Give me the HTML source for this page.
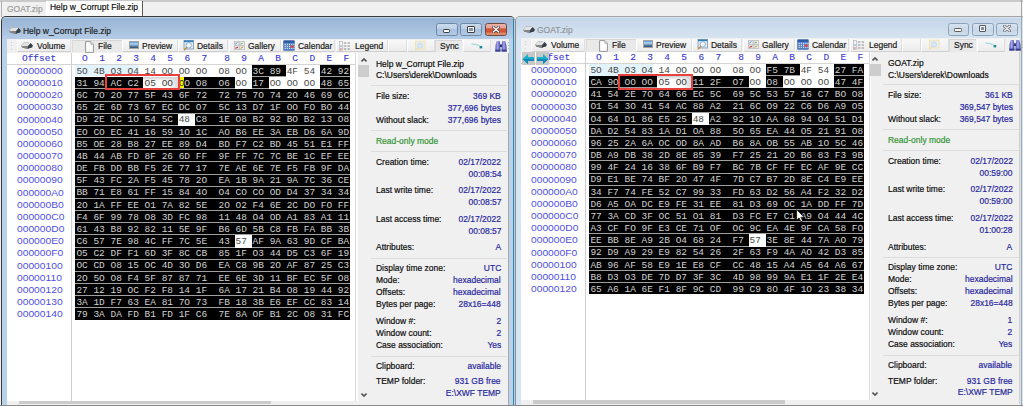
<!DOCTYPE html><html><head><meta charset='utf-8'><style>
*{margin:0;padding:0}
html,body{width:1023px;height:406px;overflow:hidden;background:#f0f0f0;position:relative}
div{position:absolute}
.t{font-family:"Liberation Sans",sans-serif;white-space:pre;line-height:1;-webkit-text-stroke:0.2px}
.hm{font-family:"Liberation Mono",monospace;font-size:9.47px;white-space:pre;line-height:11px}
.hb{font-weight:normal;-webkit-text-stroke:0.12px}
</style></head><body><div style="left:0px;top:0px;width:1023px;height:1.5px;background:#c9c9c9"></div>
<div style="left:1px;top:1px;width:1px;height:15.5px;background:#b0b0b0"></div>
<div class="t" style="left:7.3px;top:3.6399999999999997px;color:#9a9a9a;font-size:9.4px;transform:scaleX(0.904);transform-origin:0 0">GOAT.zip</div>
<div style="left:45.5px;top:1.2px;width:97px;height:15.3px;background:#ffffff"></div>
<div style="left:142px;top:1.2px;width:1.2px;height:15.3px;background:#5a5a5a"></div>
<div class="t" style="left:50px;top:1.9400000000000004px;color:#101010;font-size:9.4px;transform:scaleX(0.904);transform-origin:0 0">Help w_Corrupt File.zip</div>
<div style="left:1px;top:16.3px;width:514px;height:389.7px;background:#b9d1ea;border-top-left-radius:5px;border-top-right-radius:5px;border:1px solid #3a3a3a;border-bottom:none;border-right:none;box-sizing:border-box"></div>
<div style="left:2px;top:17.3px;width:511.5px;height:21.5px;background:linear-gradient(#dbe5f0 0,#9ab5d5 1.2px,#a3bddb 45%,#b4cce6);border-top-left-radius:4px;border-top-right-radius:4px"></div>
<div style="left:513.3px;top:19px;width:1.2px;height:387px;background:#2b87ad"></div>
<svg style="position:absolute;left:8.5px;top:26.8px" width="12" height="7" viewBox="0 0 12 7"><path d="M0.2 3.7 L2.6 0.8 L5.6 0.2 L9.6 1.3 L11.6 3.3 L11.1 5.2 L6.6 6.8 L1.6 5.8 Z" fill="#5a5a5a"/><path d="M0.2 3.7 L2.6 0.8 L5.6 0.2 L9.6 1.3 L7.2 4.1 L1.6 4.4 Z" fill="#e2e2e2"/><path d="M7.2 4.1 L9.6 1.3 L11.6 3.3 L11.1 5.2 L6.6 6.8 Z" fill="#34404a"/><path d="M0.2 3.7 L1.6 4.4 L7.2 4.1 L6.6 6.8 L1.6 5.8 Z" fill="#858585"/></svg>
<div class="t" style="left:23px;top:25.839999999999996px;color:#1e1e1e;font-size:9.4px;transform:scaleX(0.904);transform-origin:0 0">Help w_Corrupt File.zip</div>
<div style="left:436px;top:23.3px;width:21.8px;height:13.1px;background:linear-gradient(#c9daed 0%,#bcd0e7 45%,#a9c1dd 50%,#b3cae4 100%);border:1px solid #7088a8;border-radius:2.5px;box-sizing:border-box"></div>
<div style="left:460.3px;top:23.3px;width:21.8px;height:13.1px;background:linear-gradient(#c9daed 0%,#bcd0e7 45%,#a9c1dd 50%,#b3cae4 100%);border:1px solid #7088a8;border-radius:2.5px;box-sizing:border-box"></div>
<div style="left:484.5px;top:23.3px;width:22px;height:13.1px;background:linear-gradient(#eab0a8 0%,#e6a096 38%,#d2583c 42%,#cf5236 75%,#df8466 80%,#e09070 100%);border:1px solid #6c4a48;border-radius:2.5px;box-sizing:border-box"></div>
<div style="left:442.6px;top:29.200000000000003px;width:7.8px;height:3.4px;background:#fafafa;border:1px solid #3c3c3c;border-radius:1.2px;box-sizing:border-box"></div>
<div style="left:467.3px;top:26.0px;width:7.5px;height:6.5px;background:#fafafa;border:1px solid #3c3c3c;border-radius:1px;box-sizing:border-box"></div>
<div style="left:469.1px;top:27.9px;width:3.9px;height:2.7px;background:#7f93aa"></div>
<svg style="position:absolute;left:491.5px;top:25.900000000000002px" width="8" height="7" viewBox="0 0 8 7"><path d="M1.2 1 L6.8 6 M6.8 1 L1.2 6" stroke="#3c3c3c" stroke-width="2.6" stroke-linecap="round"/><path d="M1.2 1 L6.8 6 M6.8 1 L1.2 6" stroke="#ffffff" stroke-width="1.3" stroke-linecap="round"/></svg>
<div style="left:7px;top:38.5px;width:502px;height:367.5px;background:#f0f0f0"></div>
<div style="left:10.5px;top:41.5px;width:1px;height:1px;background:#cdcdcd"></div>
<div style="left:10.5px;top:45px;width:1px;height:1px;background:#cdcdcd"></div>
<div style="left:10.5px;top:48.5px;width:1px;height:1px;background:#cdcdcd"></div>
<div style="left:17px;top:39.5px;width:54px;height:12.8px;background:linear-gradient(#f8f8f8,#ececec);border-left:1px solid #fff;border-right:1px solid #dedede;border-bottom:1px solid #cfcfcf;box-sizing:border-box"></div>
<div class="t" style="left:36.5px;top:40.64px;color:#1a1a1a;font-size:9.4px;transform:scaleX(0.904);transform-origin:0 0">Volume</div>
<svg style="position:absolute;left:21.2px;top:41.8px" width="12" height="7" viewBox="0 0 12 7"><path d="M0.2 3.7 L2.6 0.8 L5.6 0.2 L9.6 1.3 L11.6 3.3 L11.1 5.2 L6.6 6.8 L1.6 5.8 Z" fill="#5a5a5a"/><path d="M0.2 3.7 L2.6 0.8 L5.6 0.2 L9.6 1.3 L7.2 4.1 L1.6 4.4 Z" fill="#e2e2e2"/><path d="M7.2 4.1 L9.6 1.3 L11.6 3.3 L11.1 5.2 L6.6 6.8 Z" fill="#34404a"/><path d="M0.2 3.7 L1.6 4.4 L7.2 4.1 L6.6 6.8 L1.6 5.8 Z" fill="#858585"/></svg>
<div style="left:71.5px;top:39.5px;width:50.0px;height:12.8px;background:#e9e9e9;border-top:1px solid #d6d6d6;border-left:1px solid #dadada;box-sizing:border-box"></div>
<div class="t" style="left:97.5px;top:40.64px;color:#1a1a1a;font-size:9.4px;transform:scaleX(0.904);transform-origin:0 0">File</div>
<svg style="position:absolute;left:85.0px;top:40.5px" width="9" height="12" viewBox="0 0 9 12" ><path d="M0.6 0.6 H5.8 L8.4 3.2 V11.4 H0.6 Z" fill="#fdfdfd" stroke="#8a8a8a" stroke-width="0.9"/><path d="M5.8 0.6 V3.2 H8.4" fill="#e0e0e0" stroke="#9a9a9a" stroke-width="0.7"/></svg>
<div style="left:122px;top:39.5px;width:55.5px;height:12.8px;background:linear-gradient(#f8f8f8,#ececec);border-left:1px solid #fff;border-right:1px solid #dedede;border-bottom:1px solid #cfcfcf;box-sizing:border-box"></div>
<div class="t" style="left:142px;top:40.64px;color:#1a1a1a;font-size:9.4px;transform:scaleX(0.904);transform-origin:0 0">Preview</div>
<svg style="position:absolute;left:128.5px;top:41px" width="10" height="8" viewBox="0 0 10 8" ><defs><linearGradient id="pv" x1="0" y1="0" x2="0" y2="1"><stop offset="0" stop-color="#3d7ed0"/><stop offset="0.35" stop-color="#b9d9f2"/><stop offset="0.6" stop-color="#6d95b5"/><stop offset="1" stop-color="#1d3d5d"/></linearGradient></defs><rect x="0.5" y="0.5" width="9" height="7" fill="url(#pv)" stroke="#a4a4a4" stroke-width="1"/></svg>
<div style="left:178.3px;top:39.5px;width:49.69999999999999px;height:12.8px;background:linear-gradient(#f8f8f8,#ececec);border-left:1px solid #fff;border-right:1px solid #dedede;border-bottom:1px solid #cfcfcf;box-sizing:border-box"></div>
<div class="t" style="left:197px;top:40.64px;color:#1a1a1a;font-size:9.4px;transform:scaleX(0.904);transform-origin:0 0">Details</div>
<svg style="position:absolute;left:183.0px;top:40px" width="11" height="11" viewBox="0 0 11 11" ><rect x="1" y="0.5" width="9.5" height="8.5" fill="#dbeaf7" stroke="#7d94ad" stroke-width="0.8"/><rect x="1" y="0.5" width="9.5" height="1.6" fill="#2f7fc4"/><circle cx="5.8" cy="5.3" r="2.7" fill="#eef6fc" stroke="#8fa8c0" stroke-width="0.9"/><path d="M3.8 7.3 L1 10.4" stroke="#c98a3a" stroke-width="1.4"/></svg>
<div style="left:228.5px;top:39.5px;width:52.0px;height:12.8px;background:linear-gradient(#f8f8f8,#ececec);border-left:1px solid #fff;border-right:1px solid #dedede;border-bottom:1px solid #cfcfcf;box-sizing:border-box"></div>
<div class="t" style="left:248px;top:40.64px;color:#1a1a1a;font-size:9.4px;transform:scaleX(0.904);transform-origin:0 0">Gallery</div>
<svg style="position:absolute;left:234.0px;top:40.7px" width="11" height="9" viewBox="0 0 11 9" ><rect x="0.4" y="0.4" width="4.6" height="3.9" fill="#eef2f6" stroke="#b4b4b4" stroke-width="0.7"/><rect x="5.8" y="0.4" width="4.6" height="3.9" fill="#eef2f6" stroke="#b4b4b4" stroke-width="0.7"/><rect x="0.4" y="4.8" width="4.6" height="3.9" fill="#eef2f6" stroke="#b4b4b4" stroke-width="0.7"/><rect x="5.8" y="4.8" width="4.6" height="3.9" fill="#eef2f6" stroke="#b4b4b4" stroke-width="0.7"/><path d="M1.2 3.2 L3.5 1.5" stroke="#3a78c0" stroke-width="0.9"/><path d="M6.6 3 L9 2" stroke="#6aa040" stroke-width="0.9"/><path d="M1.2 7.2 L4 6.4" stroke="#d03030" stroke-width="1.1"/><path d="M6.6 7.3 L9.2 6" stroke="#d08a20" stroke-width="1"/></svg>
<div style="left:281px;top:39.5px;width:53.5px;height:12.8px;background:linear-gradient(#f8f8f8,#ececec);border-left:1px solid #fff;border-right:1px solid #dedede;border-bottom:1px solid #cfcfcf;box-sizing:border-box"></div>
<div class="t" style="left:298px;top:40.64px;color:#1a1a1a;font-size:9.4px;transform:scaleX(0.904);transform-origin:0 0">Calendar</div>
<svg style="position:absolute;left:283.3px;top:40px" width="12" height="11" viewBox="0 0 12 11" ><rect x="0.4" y="0.4" width="11.2" height="10.2" rx="1.2" fill="#4f7fc6" stroke="#5b7aa8" stroke-width="0.7"/><rect x="0.8" y="0.8" width="10.4" height="2" fill="#2c5aa6"/><rect x="1.6" y="3.8" width="1.1" height="1" fill="#ffffff"/><rect x="1.6" y="5.8" width="1.1" height="1" fill="#ffffff"/><rect x="1.6" y="7.8" width="1.1" height="1" fill="#ffffff"/><rect x="3.8" y="3.8" width="1.1" height="1" fill="#ffffff"/><rect x="3.8" y="5.8" width="1.1" height="1" fill="#ffffff"/><rect x="3.8" y="7.8" width="1.1" height="1" fill="#ffffff"/><rect x="6.0" y="3.8" width="1.1" height="1" fill="#ffffff"/><rect x="6.0" y="5.8" width="1.1" height="1" fill="#ffffff"/><rect x="6.0" y="7.8" width="1.1" height="1" fill="#ffffff"/><rect x="8.2" y="3.8" width="1.1" height="1" fill="#ffffff"/><rect x="8.2" y="5.8" width="1.1" height="1" fill="#ffffff"/><rect x="8.2" y="7.8" width="1.1" height="1" fill="#ffffff"/><rect x="10.4" y="3.8" width="1.1" height="1" fill="#ffffff"/><rect x="10.4" y="5.8" width="1.1" height="1" fill="#ffffff"/><rect x="10.4" y="7.8" width="1.1" height="1" fill="#ffffff"/><rect x="7.3" y="5.6" width="3.6" height="2.2" rx="0.8" fill="#e04848"/></svg>
<div style="left:336px;top:39.5px;width:51.5px;height:12.8px;background:linear-gradient(#f8f8f8,#ececec);border-left:1px solid #fff;border-right:1px solid #dedede;border-bottom:1px solid #cfcfcf;box-sizing:border-box"></div>
<div class="t" style="left:354.5px;top:40.64px;color:#1a1a1a;font-size:9.4px;transform:scaleX(0.904);transform-origin:0 0">Legend</div>
<svg style="position:absolute;left:339.3px;top:40.5px" width="15" height="10" viewBox="0 0 15 10" ><rect x="0.5" y="0.4" width="2.8" height="9.2" fill="#f4f4f4" stroke="#b0b0b0" stroke-width="0.6"/><rect x="1.2" y="4.5" width="1.5" height="1.2" fill="#5aa0e0"/><rect x="1.2" y="7.4" width="1.5" height="1.2" fill="#e05050"/><path d="M4.8 2 H7.3 M8.6 2 H11 M4.8 5 H7.3 M8.6 5 H11 M4.8 8 H7.3 M8.6 8 H11" stroke="#8c8c8c" stroke-width="1"/></svg>
<div style="left:388px;top:39.5px;width:18.5px;height:12.8px;background:linear-gradient(#f8f8f8,#ececec);border-left:1px solid #fff;border-right:1px solid #dedede;border-bottom:1px solid #cfcfcf;box-sizing:border-box"></div>
<div style="left:407px;top:39.5px;width:27.5px;height:12.8px;background:linear-gradient(#f8f8f8,#ececec);border-left:1px solid #fff;border-right:1px solid #dedede;border-bottom:1px solid #cfcfcf;box-sizing:border-box"></div>
<svg style="position:absolute;left:414px;top:40px" width="12" height="11" viewBox="0 0 12 11" ><rect x="1.5" y="1.2" width="9.5" height="7.8" fill="#e9eef3" stroke="#f2e4b0" stroke-width="1"/><circle cx="6" cy="5.5" r="2.6" fill="#d9e8f2" stroke="#c6d8e6" stroke-width="0.9"/><path d="M4 7.6 L1.2 10.4" stroke="#f0dca8" stroke-width="1.2"/></svg>
<div style="left:435px;top:39.5px;width:27px;height:12.8px;background:#e9e9e9;border-top:1px solid #d6d6d6;border-left:1px solid #dadada;box-sizing:border-box"></div>
<div class="t" style="left:440px;top:40.64px;color:#1a1a1a;font-size:9.4px;transform:scaleX(0.904);transform-origin:0 0">Sync</div>
<div style="left:463px;top:39.5px;width:28px;height:12.8px;background:linear-gradient(#f8f8f8,#ececec);border-left:1px solid #fff;border-right:1px solid #dedede;border-bottom:1px solid #cfcfcf;box-sizing:border-box"></div>
<svg style="position:absolute;left:471px;top:42.5px" width="12" height="6" viewBox="0 0 12 6" ><path d="M0.5 1.2 L1.8 0.9 L3.2 1.6 L4.5 1.1 L6 2.3 L7.3 1.8 L8.8 3.4" fill="none" stroke="#6cc4d0" stroke-width="0.8"/><rect x="8.6" y="3" width="2.6" height="2.4" fill="#178aa0"/></svg>
<svg style="position:absolute;left:495.0px;top:39.8px" width="12" height="12" viewBox="0 0 12 12" ><defs><linearGradient id="bn" x1="0" y1="0" x2="1" y2="0"><stop offset="0" stop-color="#4b4fa8"/><stop offset="0.45" stop-color="#a6aaf0"/><stop offset="1" stop-color="#3f4396"/></linearGradient></defs><path d="M0.3 11.6 L0.6 5 L1.8 1 L4.6 1 L5.4 5 L5.4 11.6 Z" fill="url(#bn)"/><path d="M11.7 11.6 L11.4 5 L10.2 1 L7.4 1 L6.6 5 L6.6 11.6 Z" fill="url(#bn)"/><rect x="5" y="4.5" width="2" height="2.5" fill="#2e3280"/><rect x="0.4" y="9.6" width="5" height="2" fill="#3a3e8c"/><rect x="6.6" y="9.6" width="5" height="2" fill="#3a3e8c"/></svg>
<div style="left:508px;top:42px;width:1px;height:1px;background:#a8c0a0"></div>
<div style="left:508px;top:45px;width:1px;height:1px;background:#a8c0a0"></div>
<div style="left:508px;top:48px;width:1px;height:1px;background:#a8c0a0"></div>
<div style="left:7px;top:52.5px;width:347.5px;height:348px;background:#ffffff"></div>
<div style="left:7px;top:64px;width:347.5px;height:1px;background:#d4d4d4"></div>
<div style="left:71px;top:52.5px;width:1px;height:348px;background:#cfcfcf"></div>
<div style="left:354.5px;top:52.5px;width:1px;height:348px;background:#dadada"></div>
<div class="hm hb" style="left:22px;top:53.1px;color:#3a3ad6;">Offset</div>
<div class="hm hb" style="left:82.08000000000001px;top:53.1px;color:#3a3ad6;">O</div>
<div class="hm hb" style="left:99.13px;top:53.1px;color:#3a3ad6;">1</div>
<div class="hm hb" style="left:116.18px;top:53.1px;color:#3a3ad6;">2</div>
<div class="hm hb" style="left:133.23000000000002px;top:53.1px;color:#3a3ad6;">3</div>
<div class="hm hb" style="left:150.28000000000003px;top:53.1px;color:#3a3ad6;">4</div>
<div class="hm hb" style="left:167.33px;top:53.1px;color:#3a3ad6;">5</div>
<div class="hm hb" style="left:184.38000000000002px;top:53.1px;color:#3a3ad6;">6</div>
<div class="hm hb" style="left:201.43px;top:53.1px;color:#3a3ad6;">7</div>
<div class="hm hb" style="left:224.16000000000003px;top:53.1px;color:#3a3ad6;">8</div>
<div class="hm hb" style="left:241.21000000000004px;top:53.1px;color:#3a3ad6;">9</div>
<div class="hm hb" style="left:258.26px;top:53.1px;color:#3a3ad6;">A</div>
<div class="hm hb" style="left:275.31000000000006px;top:53.1px;color:#3a3ad6;">B</div>
<div class="hm hb" style="left:292.36px;top:53.1px;color:#3a3ad6;">C</div>
<div class="hm hb" style="left:309.41px;top:53.1px;color:#3a3ad6;">D</div>
<div class="hm hb" style="left:326.46000000000004px;top:53.1px;color:#3a3ad6;">E</div>
<div class="hm hb" style="left:343.51px;top:53.1px;color:#3a3ad6;">F</div>
<div class="t" style="left:16.8px;top:65.9px;color:#4f4fe0;font-size:9.5px;transform:scaleX(1.08);transform-origin:0 0;-webkit-text-stroke:0">00000000</div>
<div style="left:75.10000000000001px;top:65.0px;width:17.55px;height:11.3px;background:#e3f3fc"></div>
<div class="hm" style="left:76.4px;top:65.7px;color:#4a4a4a">5O</div>
<div style="left:92.15px;top:65.0px;width:17.55px;height:11.3px;background:#e3f3fc"></div>
<div class="hm" style="left:93.45px;top:65.7px;color:#4a4a4a">4B</div>
<div style="left:109.2px;top:65.0px;width:17.55px;height:11.3px;background:#e3f3fc"></div>
<div class="hm" style="left:110.5px;top:65.7px;color:#4a4a4a">O3</div>
<div style="left:126.25000000000001px;top:65.0px;width:12.5px;height:11.3px;background:#e3f3fc"></div>
<div class="hm" style="left:127.55000000000001px;top:65.7px;color:#4a4a4a">O4</div>
<div class="hm" style="left:144.60000000000002px;top:65.7px;color:#4a4a4a">14</div>
<div class="hm" style="left:161.65px;top:65.7px;color:#4a4a4a">OO</div>
<div class="hm" style="left:178.70000000000002px;top:65.7px;color:#4a4a4a">OO</div>
<div class="hm" style="left:195.75px;top:65.7px;color:#4a4a4a">OO</div>
<div class="hm" style="left:218.48000000000002px;top:65.7px;color:#4a4a4a">O8</div>
<div class="hm" style="left:235.53000000000003px;top:65.7px;color:#4a4a4a">OO</div>
<div style="left:252px;top:65px;width:17px;height:12px;background:linear-gradient(#000 0,#000 11px,#a0a0a0 11px)"></div>
<div class="hm" style="left:252.58px;top:65.7px;color:#d2d2d2">3C</div>
<div style="left:269px;top:65px;width:17px;height:12px;background:linear-gradient(#000 0,#000 11px,#a0a0a0 11px)"></div>
<div class="hm" style="left:269.63000000000005px;top:65.7px;color:#d2d2d2">89</div>
<div class="hm" style="left:286.68px;top:65.7px;color:#4a4a4a">4F</div>
<div class="hm" style="left:303.73px;top:65.7px;color:#4a4a4a">54</div>
<div style="left:320px;top:65px;width:17px;height:12px;background:linear-gradient(#000 0,#000 11px,#a0a0a0 11px)"></div>
<div class="hm" style="left:320.78000000000003px;top:65.7px;color:#d2d2d2">42</div>
<div style="left:337px;top:65px;width:13px;height:12px;background:linear-gradient(#000 0,#000 11px,#a0a0a0 11px)"></div>
<div class="hm" style="left:337.83px;top:65.7px;color:#d2d2d2">92</div>
<div class="t" style="left:16.8px;top:78.07000000000001px;color:#4f4fe0;font-size:9.5px;transform:scaleX(1.08);transform-origin:0 0;-webkit-text-stroke:0">00000010</div>
<div style="left:75px;top:77px;width:17px;height:12px;background:linear-gradient(#000 0,#000 11px,#a0a0a0 11px)"></div>
<div class="hm" style="left:76.4px;top:77.87px;color:#d2d2d2">31</div>
<div style="left:92px;top:77px;width:18px;height:12px;background:linear-gradient(#000 0,#000 11px,#a0a0a0 11px)"></div>
<div class="hm" style="left:93.45px;top:77.87px;color:#d2d2d2">94</div>
<div style="left:110px;top:77px;width:17px;height:12px;background:linear-gradient(#000 0,#000 11px,#a0a0a0 11px)"></div>
<div class="hm" style="left:110.5px;top:77.87px;color:#d2d2d2">AC</div>
<div style="left:127px;top:77px;width:17px;height:12px;background:linear-gradient(#000 0,#000 11px,#a0a0a0 11px)"></div>
<div class="hm" style="left:127.55000000000001px;top:77.87px;color:#d2d2d2">C2</div>
<div class="hm" style="left:144.60000000000002px;top:77.87px;color:#4a4a4a">O5</div>
<div class="hm" style="left:161.65px;top:77.87px;color:#4a4a4a">OO</div>
<div style="left:178px;top:77px;width:17px;height:12px;background:linear-gradient(#000 0,#000 11px,#a0a0a0 11px)"></div>
<div class="hm" style="left:178.70000000000002px;top:77.87px;color:#d2d2d2">OO</div>
<div style="left:195px;top:77px;width:22px;height:12px;background:linear-gradient(#000 0,#000 11px,#a0a0a0 11px)"></div>
<div class="hm" style="left:195.75px;top:77.87px;color:#d2d2d2">O8</div>
<div style="left:217px;top:77px;width:18px;height:12px;background:linear-gradient(#000 0,#000 11px,#a0a0a0 11px)"></div>
<div class="hm" style="left:218.48000000000002px;top:77.87px;color:#d2d2d2">O6</div>
<div class="hm" style="left:235.53000000000003px;top:77.87px;color:#4a4a4a">OO</div>
<div style="left:252px;top:77px;width:17px;height:12px;background:linear-gradient(#000 0,#000 11px,#a0a0a0 11px)"></div>
<div class="hm" style="left:252.58px;top:77.87px;color:#d2d2d2">17</div>
<div class="hm" style="left:269.63000000000005px;top:77.87px;color:#4a4a4a">OO</div>
<div class="hm" style="left:286.68px;top:77.87px;color:#4a4a4a">OO</div>
<div class="hm" style="left:303.73px;top:77.87px;color:#4a4a4a">OO</div>
<div style="left:320px;top:77px;width:17px;height:12px;background:linear-gradient(#000 0,#000 11px,#a0a0a0 11px)"></div>
<div class="hm" style="left:320.78000000000003px;top:77.87px;color:#d2d2d2">48</div>
<div style="left:337px;top:77px;width:13px;height:12px;background:linear-gradient(#000 0,#000 11px,#a0a0a0 11px)"></div>
<div class="hm" style="left:337.83px;top:77.87px;color:#d2d2d2">65</div>
<div class="t" style="left:16.8px;top:90.24000000000001px;color:#4f4fe0;font-size:9.5px;transform:scaleX(1.08);transform-origin:0 0;-webkit-text-stroke:0">00000020</div>
<div style="left:75px;top:89px;width:17px;height:13px;background:linear-gradient(#000 0,#000 12px,#a0a0a0 12px)"></div>
<div class="hm" style="left:76.4px;top:90.04px;color:#d2d2d2">6C</div>
<div style="left:92px;top:89px;width:18px;height:13px;background:linear-gradient(#000 0,#000 12px,#a0a0a0 12px)"></div>
<div class="hm" style="left:93.45px;top:90.04px;color:#d2d2d2">7O</div>
<div style="left:110px;top:89px;width:17px;height:13px;background:linear-gradient(#000 0,#000 12px,#a0a0a0 12px)"></div>
<div class="hm" style="left:110.5px;top:90.04px;color:#d2d2d2">2O</div>
<div style="left:127px;top:89px;width:17px;height:13px;background:linear-gradient(#000 0,#000 12px,#a0a0a0 12px)"></div>
<div class="hm" style="left:127.55000000000001px;top:90.04px;color:#d2d2d2">77</div>
<div style="left:144px;top:89px;width:17px;height:13px;background:linear-gradient(#000 0,#000 12px,#a0a0a0 12px)"></div>
<div class="hm" style="left:144.60000000000002px;top:90.04px;color:#d2d2d2">5F</div>
<div style="left:161px;top:89px;width:17px;height:13px;background:linear-gradient(#000 0,#000 12px,#a0a0a0 12px)"></div>
<div class="hm" style="left:161.65px;top:90.04px;color:#d2d2d2">43</div>
<div style="left:178px;top:89px;width:17px;height:13px;background:linear-gradient(#000 0,#000 12px,#a0a0a0 12px)"></div>
<div class="hm" style="left:178.70000000000002px;top:90.04px;color:#d2d2d2">6F</div>
<div style="left:195px;top:89px;width:22px;height:13px;background:linear-gradient(#000 0,#000 12px,#a0a0a0 12px)"></div>
<div class="hm" style="left:195.75px;top:90.04px;color:#d2d2d2">72</div>
<div style="left:217px;top:89px;width:18px;height:13px;background:linear-gradient(#000 0,#000 12px,#a0a0a0 12px)"></div>
<div class="hm" style="left:218.48000000000002px;top:90.04px;color:#d2d2d2">72</div>
<div style="left:235px;top:89px;width:17px;height:13px;background:linear-gradient(#000 0,#000 12px,#a0a0a0 12px)"></div>
<div class="hm" style="left:235.53000000000003px;top:90.04px;color:#d2d2d2">75</div>
<div style="left:252px;top:89px;width:17px;height:13px;background:linear-gradient(#000 0,#000 12px,#a0a0a0 12px)"></div>
<div class="hm" style="left:252.58px;top:90.04px;color:#d2d2d2">7O</div>
<div style="left:269px;top:89px;width:17px;height:13px;background:linear-gradient(#000 0,#000 12px,#a0a0a0 12px)"></div>
<div class="hm" style="left:269.63000000000005px;top:90.04px;color:#d2d2d2">74</div>
<div style="left:286px;top:89px;width:17px;height:13px;background:linear-gradient(#000 0,#000 12px,#a0a0a0 12px)"></div>
<div class="hm" style="left:286.68px;top:90.04px;color:#d2d2d2">2O</div>
<div style="left:303px;top:89px;width:17px;height:13px;background:linear-gradient(#000 0,#000 12px,#a0a0a0 12px)"></div>
<div class="hm" style="left:303.73px;top:90.04px;color:#d2d2d2">46</div>
<div style="left:320px;top:89px;width:17px;height:13px;background:linear-gradient(#000 0,#000 12px,#a0a0a0 12px)"></div>
<div class="hm" style="left:320.78000000000003px;top:90.04px;color:#d2d2d2">69</div>
<div style="left:337px;top:89px;width:13px;height:13px;background:linear-gradient(#000 0,#000 12px,#a0a0a0 12px)"></div>
<div class="hm" style="left:337.83px;top:90.04px;color:#d2d2d2">6C</div>
<div class="t" style="left:16.8px;top:102.41px;color:#4f4fe0;font-size:9.5px;transform:scaleX(1.08);transform-origin:0 0;-webkit-text-stroke:0">00000030</div>
<div style="left:75px;top:102px;width:17px;height:12px;background:linear-gradient(#000 0,#000 11px,#a0a0a0 11px)"></div>
<div class="hm" style="left:76.4px;top:102.21px;color:#d2d2d2">65</div>
<div style="left:92px;top:102px;width:18px;height:12px;background:linear-gradient(#000 0,#000 11px,#a0a0a0 11px)"></div>
<div class="hm" style="left:93.45px;top:102.21px;color:#d2d2d2">2E</div>
<div style="left:110px;top:102px;width:17px;height:12px;background:linear-gradient(#000 0,#000 11px,#a0a0a0 11px)"></div>
<div class="hm" style="left:110.5px;top:102.21px;color:#d2d2d2">6D</div>
<div style="left:127px;top:102px;width:17px;height:12px;background:linear-gradient(#000 0,#000 11px,#a0a0a0 11px)"></div>
<div class="hm" style="left:127.55000000000001px;top:102.21px;color:#d2d2d2">73</div>
<div style="left:144px;top:102px;width:17px;height:12px;background:linear-gradient(#000 0,#000 11px,#a0a0a0 11px)"></div>
<div class="hm" style="left:144.60000000000002px;top:102.21px;color:#d2d2d2">67</div>
<div style="left:161px;top:102px;width:17px;height:12px;background:linear-gradient(#000 0,#000 11px,#a0a0a0 11px)"></div>
<div class="hm" style="left:161.65px;top:102.21px;color:#d2d2d2">EC</div>
<div style="left:178px;top:102px;width:17px;height:12px;background:linear-gradient(#000 0,#000 11px,#a0a0a0 11px)"></div>
<div class="hm" style="left:178.70000000000002px;top:102.21px;color:#d2d2d2">DC</div>
<div style="left:195px;top:102px;width:22px;height:12px;background:linear-gradient(#000 0,#000 11px,#a0a0a0 11px)"></div>
<div class="hm" style="left:195.75px;top:102.21px;color:#d2d2d2">O7</div>
<div style="left:217px;top:102px;width:18px;height:12px;background:linear-gradient(#000 0,#000 11px,#a0a0a0 11px)"></div>
<div class="hm" style="left:218.48000000000002px;top:102.21px;color:#d2d2d2">5C</div>
<div style="left:235px;top:102px;width:17px;height:12px;background:linear-gradient(#000 0,#000 11px,#a0a0a0 11px)"></div>
<div class="hm" style="left:235.53000000000003px;top:102.21px;color:#d2d2d2">13</div>
<div style="left:252px;top:102px;width:17px;height:12px;background:linear-gradient(#000 0,#000 11px,#a0a0a0 11px)"></div>
<div class="hm" style="left:252.58px;top:102.21px;color:#d2d2d2">D7</div>
<div style="left:269px;top:102px;width:17px;height:12px;background:linear-gradient(#000 0,#000 11px,#a0a0a0 11px)"></div>
<div class="hm" style="left:269.63000000000005px;top:102.21px;color:#d2d2d2">1F</div>
<div style="left:286px;top:102px;width:17px;height:12px;background:linear-gradient(#000 0,#000 11px,#a0a0a0 11px)"></div>
<div class="hm" style="left:286.68px;top:102.21px;color:#d2d2d2">OO</div>
<div style="left:303px;top:102px;width:17px;height:12px;background:linear-gradient(#000 0,#000 11px,#a0a0a0 11px)"></div>
<div class="hm" style="left:303.73px;top:102.21px;color:#d2d2d2">FO</div>
<div style="left:320px;top:102px;width:17px;height:12px;background:linear-gradient(#000 0,#000 11px,#a0a0a0 11px)"></div>
<div class="hm" style="left:320.78000000000003px;top:102.21px;color:#d2d2d2">BO</div>
<div style="left:337px;top:102px;width:13px;height:12px;background:linear-gradient(#000 0,#000 11px,#a0a0a0 11px)"></div>
<div class="hm" style="left:337.83px;top:102.21px;color:#d2d2d2">44</div>
<div class="t" style="left:16.8px;top:114.58000000000001px;color:#4f4fe0;font-size:9.5px;transform:scaleX(1.08);transform-origin:0 0;-webkit-text-stroke:0">00000040</div>
<div style="left:75px;top:114px;width:17px;height:12px;background:linear-gradient(#000 0,#000 11px,#a0a0a0 11px)"></div>
<div class="hm" style="left:76.4px;top:114.38000000000001px;color:#d2d2d2">D9</div>
<div style="left:92px;top:114px;width:18px;height:12px;background:linear-gradient(#000 0,#000 11px,#a0a0a0 11px)"></div>
<div class="hm" style="left:93.45px;top:114.38000000000001px;color:#d2d2d2">2E</div>
<div style="left:110px;top:114px;width:17px;height:12px;background:linear-gradient(#000 0,#000 11px,#a0a0a0 11px)"></div>
<div class="hm" style="left:110.5px;top:114.38000000000001px;color:#d2d2d2">DC</div>
<div style="left:127px;top:114px;width:17px;height:12px;background:linear-gradient(#000 0,#000 11px,#a0a0a0 11px)"></div>
<div class="hm" style="left:127.55000000000001px;top:114.38000000000001px;color:#d2d2d2">1O</div>
<div style="left:144px;top:114px;width:17px;height:12px;background:linear-gradient(#000 0,#000 11px,#a0a0a0 11px)"></div>
<div class="hm" style="left:144.60000000000002px;top:114.38000000000001px;color:#d2d2d2">54</div>
<div style="left:161px;top:114px;width:17px;height:12px;background:linear-gradient(#000 0,#000 11px,#a0a0a0 11px)"></div>
<div class="hm" style="left:161.65px;top:114.38000000000001px;color:#d2d2d2">5C</div>
<div class="hm" style="left:178.70000000000002px;top:114.38000000000001px;color:#4a4a4a">48</div>
<div style="left:195px;top:114px;width:22px;height:12px;background:linear-gradient(#000 0,#000 11px,#a0a0a0 11px)"></div>
<div class="hm" style="left:195.75px;top:114.38000000000001px;color:#d2d2d2">C8</div>
<div style="left:217px;top:114px;width:18px;height:12px;background:linear-gradient(#000 0,#000 11px,#a0a0a0 11px)"></div>
<div class="hm" style="left:218.48000000000002px;top:114.38000000000001px;color:#d2d2d2">1E</div>
<div style="left:235px;top:114px;width:17px;height:12px;background:linear-gradient(#000 0,#000 11px,#a0a0a0 11px)"></div>
<div class="hm" style="left:235.53000000000003px;top:114.38000000000001px;color:#d2d2d2">O8</div>
<div style="left:252px;top:114px;width:17px;height:12px;background:linear-gradient(#000 0,#000 11px,#a0a0a0 11px)"></div>
<div class="hm" style="left:252.58px;top:114.38000000000001px;color:#d2d2d2">B2</div>
<div style="left:269px;top:114px;width:17px;height:12px;background:linear-gradient(#000 0,#000 11px,#a0a0a0 11px)"></div>
<div class="hm" style="left:269.63000000000005px;top:114.38000000000001px;color:#d2d2d2">92</div>
<div style="left:286px;top:114px;width:17px;height:12px;background:linear-gradient(#000 0,#000 11px,#a0a0a0 11px)"></div>
<div class="hm" style="left:286.68px;top:114.38000000000001px;color:#d2d2d2">BO</div>
<div style="left:303px;top:114px;width:17px;height:12px;background:linear-gradient(#000 0,#000 11px,#a0a0a0 11px)"></div>
<div class="hm" style="left:303.73px;top:114.38000000000001px;color:#d2d2d2">B2</div>
<div style="left:320px;top:114px;width:17px;height:12px;background:linear-gradient(#000 0,#000 11px,#a0a0a0 11px)"></div>
<div class="hm" style="left:320.78000000000003px;top:114.38000000000001px;color:#d2d2d2">13</div>
<div style="left:337px;top:114px;width:13px;height:12px;background:linear-gradient(#000 0,#000 11px,#a0a0a0 11px)"></div>
<div class="hm" style="left:337.83px;top:114.38000000000001px;color:#d2d2d2">O8</div>
<div class="t" style="left:16.8px;top:126.75px;color:#4f4fe0;font-size:9.5px;transform:scaleX(1.08);transform-origin:0 0;-webkit-text-stroke:0">00000050</div>
<div style="left:75px;top:126px;width:17px;height:12px;background:linear-gradient(#000 0,#000 11px,#a0a0a0 11px)"></div>
<div class="hm" style="left:76.4px;top:126.55px;color:#d2d2d2">EO</div>
<div style="left:92px;top:126px;width:18px;height:12px;background:linear-gradient(#000 0,#000 11px,#a0a0a0 11px)"></div>
<div class="hm" style="left:93.45px;top:126.55px;color:#d2d2d2">CO</div>
<div style="left:110px;top:126px;width:17px;height:12px;background:linear-gradient(#000 0,#000 11px,#a0a0a0 11px)"></div>
<div class="hm" style="left:110.5px;top:126.55px;color:#d2d2d2">EC</div>
<div style="left:127px;top:126px;width:17px;height:12px;background:linear-gradient(#000 0,#000 11px,#a0a0a0 11px)"></div>
<div class="hm" style="left:127.55000000000001px;top:126.55px;color:#d2d2d2">41</div>
<div style="left:144px;top:126px;width:17px;height:12px;background:linear-gradient(#000 0,#000 11px,#a0a0a0 11px)"></div>
<div class="hm" style="left:144.60000000000002px;top:126.55px;color:#d2d2d2">16</div>
<div style="left:161px;top:126px;width:17px;height:12px;background:linear-gradient(#000 0,#000 11px,#a0a0a0 11px)"></div>
<div class="hm" style="left:161.65px;top:126.55px;color:#d2d2d2">59</div>
<div style="left:178px;top:126px;width:17px;height:12px;background:linear-gradient(#000 0,#000 11px,#a0a0a0 11px)"></div>
<div class="hm" style="left:178.70000000000002px;top:126.55px;color:#d2d2d2">1O</div>
<div style="left:195px;top:126px;width:22px;height:12px;background:linear-gradient(#000 0,#000 11px,#a0a0a0 11px)"></div>
<div class="hm" style="left:195.75px;top:126.55px;color:#d2d2d2">1C</div>
<div style="left:217px;top:126px;width:18px;height:12px;background:linear-gradient(#000 0,#000 11px,#a0a0a0 11px)"></div>
<div class="hm" style="left:218.48000000000002px;top:126.55px;color:#d2d2d2">AO</div>
<div style="left:235px;top:126px;width:17px;height:12px;background:linear-gradient(#000 0,#000 11px,#a0a0a0 11px)"></div>
<div class="hm" style="left:235.53000000000003px;top:126.55px;color:#d2d2d2">B6</div>
<div style="left:252px;top:126px;width:17px;height:12px;background:linear-gradient(#000 0,#000 11px,#a0a0a0 11px)"></div>
<div class="hm" style="left:252.58px;top:126.55px;color:#d2d2d2">EE</div>
<div style="left:269px;top:126px;width:17px;height:12px;background:linear-gradient(#000 0,#000 11px,#a0a0a0 11px)"></div>
<div class="hm" style="left:269.63000000000005px;top:126.55px;color:#d2d2d2">3A</div>
<div style="left:286px;top:126px;width:17px;height:12px;background:linear-gradient(#000 0,#000 11px,#a0a0a0 11px)"></div>
<div class="hm" style="left:286.68px;top:126.55px;color:#d2d2d2">EB</div>
<div style="left:303px;top:126px;width:17px;height:12px;background:linear-gradient(#000 0,#000 11px,#a0a0a0 11px)"></div>
<div class="hm" style="left:303.73px;top:126.55px;color:#d2d2d2">D6</div>
<div style="left:320px;top:126px;width:17px;height:12px;background:linear-gradient(#000 0,#000 11px,#a0a0a0 11px)"></div>
<div class="hm" style="left:320.78000000000003px;top:126.55px;color:#d2d2d2">6A</div>
<div style="left:337px;top:126px;width:13px;height:12px;background:linear-gradient(#000 0,#000 11px,#a0a0a0 11px)"></div>
<div class="hm" style="left:337.83px;top:126.55px;color:#d2d2d2">9D</div>
<div class="t" style="left:16.8px;top:138.92px;color:#4f4fe0;font-size:9.5px;transform:scaleX(1.08);transform-origin:0 0;-webkit-text-stroke:0">00000060</div>
<div style="left:75px;top:138px;width:17px;height:12px;background:linear-gradient(#000 0,#000 11px,#a0a0a0 11px)"></div>
<div class="hm" style="left:76.4px;top:138.71999999999997px;color:#d2d2d2">B5</div>
<div style="left:92px;top:138px;width:18px;height:12px;background:linear-gradient(#000 0,#000 11px,#a0a0a0 11px)"></div>
<div class="hm" style="left:93.45px;top:138.71999999999997px;color:#d2d2d2">OE</div>
<div style="left:110px;top:138px;width:17px;height:12px;background:linear-gradient(#000 0,#000 11px,#a0a0a0 11px)"></div>
<div class="hm" style="left:110.5px;top:138.71999999999997px;color:#d2d2d2">28</div>
<div style="left:127px;top:138px;width:17px;height:12px;background:linear-gradient(#000 0,#000 11px,#a0a0a0 11px)"></div>
<div class="hm" style="left:127.55000000000001px;top:138.71999999999997px;color:#d2d2d2">B8</div>
<div style="left:144px;top:138px;width:17px;height:12px;background:linear-gradient(#000 0,#000 11px,#a0a0a0 11px)"></div>
<div class="hm" style="left:144.60000000000002px;top:138.71999999999997px;color:#d2d2d2">27</div>
<div style="left:161px;top:138px;width:17px;height:12px;background:linear-gradient(#000 0,#000 11px,#a0a0a0 11px)"></div>
<div class="hm" style="left:161.65px;top:138.71999999999997px;color:#d2d2d2">EE</div>
<div style="left:178px;top:138px;width:17px;height:12px;background:linear-gradient(#000 0,#000 11px,#a0a0a0 11px)"></div>
<div class="hm" style="left:178.70000000000002px;top:138.71999999999997px;color:#d2d2d2">89</div>
<div style="left:195px;top:138px;width:22px;height:12px;background:linear-gradient(#000 0,#000 11px,#a0a0a0 11px)"></div>
<div class="hm" style="left:195.75px;top:138.71999999999997px;color:#d2d2d2">D4</div>
<div style="left:217px;top:138px;width:18px;height:12px;background:linear-gradient(#000 0,#000 11px,#a0a0a0 11px)"></div>
<div class="hm" style="left:218.48000000000002px;top:138.71999999999997px;color:#d2d2d2">BD</div>
<div style="left:235px;top:138px;width:17px;height:12px;background:linear-gradient(#000 0,#000 11px,#a0a0a0 11px)"></div>
<div class="hm" style="left:235.53000000000003px;top:138.71999999999997px;color:#d2d2d2">F7</div>
<div style="left:252px;top:138px;width:17px;height:12px;background:linear-gradient(#000 0,#000 11px,#a0a0a0 11px)"></div>
<div class="hm" style="left:252.58px;top:138.71999999999997px;color:#d2d2d2">C2</div>
<div style="left:269px;top:138px;width:17px;height:12px;background:linear-gradient(#000 0,#000 11px,#a0a0a0 11px)"></div>
<div class="hm" style="left:269.63000000000005px;top:138.71999999999997px;color:#d2d2d2">BD</div>
<div style="left:286px;top:138px;width:17px;height:12px;background:linear-gradient(#000 0,#000 11px,#a0a0a0 11px)"></div>
<div class="hm" style="left:286.68px;top:138.71999999999997px;color:#d2d2d2">45</div>
<div style="left:303px;top:138px;width:17px;height:12px;background:linear-gradient(#000 0,#000 11px,#a0a0a0 11px)"></div>
<div class="hm" style="left:303.73px;top:138.71999999999997px;color:#d2d2d2">51</div>
<div style="left:320px;top:138px;width:17px;height:12px;background:linear-gradient(#000 0,#000 11px,#a0a0a0 11px)"></div>
<div class="hm" style="left:320.78000000000003px;top:138.71999999999997px;color:#d2d2d2">E1</div>
<div style="left:337px;top:138px;width:13px;height:12px;background:linear-gradient(#000 0,#000 11px,#a0a0a0 11px)"></div>
<div class="hm" style="left:337.83px;top:138.71999999999997px;color:#d2d2d2">FF</div>
<div class="t" style="left:16.8px;top:151.09px;color:#4f4fe0;font-size:9.5px;transform:scaleX(1.08);transform-origin:0 0;-webkit-text-stroke:0">00000070</div>
<div style="left:75px;top:150px;width:17px;height:12px;background:linear-gradient(#000 0,#000 11px,#a0a0a0 11px)"></div>
<div class="hm" style="left:76.4px;top:150.89px;color:#d2d2d2">4B</div>
<div style="left:92px;top:150px;width:18px;height:12px;background:linear-gradient(#000 0,#000 11px,#a0a0a0 11px)"></div>
<div class="hm" style="left:93.45px;top:150.89px;color:#d2d2d2">44</div>
<div style="left:110px;top:150px;width:17px;height:12px;background:linear-gradient(#000 0,#000 11px,#a0a0a0 11px)"></div>
<div class="hm" style="left:110.5px;top:150.89px;color:#d2d2d2">AB</div>
<div style="left:127px;top:150px;width:17px;height:12px;background:linear-gradient(#000 0,#000 11px,#a0a0a0 11px)"></div>
<div class="hm" style="left:127.55000000000001px;top:150.89px;color:#d2d2d2">FD</div>
<div style="left:144px;top:150px;width:17px;height:12px;background:linear-gradient(#000 0,#000 11px,#a0a0a0 11px)"></div>
<div class="hm" style="left:144.60000000000002px;top:150.89px;color:#d2d2d2">8F</div>
<div style="left:161px;top:150px;width:17px;height:12px;background:linear-gradient(#000 0,#000 11px,#a0a0a0 11px)"></div>
<div class="hm" style="left:161.65px;top:150.89px;color:#d2d2d2">26</div>
<div style="left:178px;top:150px;width:17px;height:12px;background:linear-gradient(#000 0,#000 11px,#a0a0a0 11px)"></div>
<div class="hm" style="left:178.70000000000002px;top:150.89px;color:#d2d2d2">6D</div>
<div style="left:195px;top:150px;width:22px;height:12px;background:linear-gradient(#000 0,#000 11px,#a0a0a0 11px)"></div>
<div class="hm" style="left:195.75px;top:150.89px;color:#d2d2d2">FF</div>
<div style="left:217px;top:150px;width:18px;height:12px;background:linear-gradient(#000 0,#000 11px,#a0a0a0 11px)"></div>
<div class="hm" style="left:218.48000000000002px;top:150.89px;color:#d2d2d2">9F</div>
<div style="left:235px;top:150px;width:17px;height:12px;background:linear-gradient(#000 0,#000 11px,#a0a0a0 11px)"></div>
<div class="hm" style="left:235.53000000000003px;top:150.89px;color:#d2d2d2">FF</div>
<div style="left:252px;top:150px;width:17px;height:12px;background:linear-gradient(#000 0,#000 11px,#a0a0a0 11px)"></div>
<div class="hm" style="left:252.58px;top:150.89px;color:#d2d2d2">7C</div>
<div style="left:269px;top:150px;width:17px;height:12px;background:linear-gradient(#000 0,#000 11px,#a0a0a0 11px)"></div>
<div class="hm" style="left:269.63000000000005px;top:150.89px;color:#d2d2d2">7C</div>
<div style="left:286px;top:150px;width:17px;height:12px;background:linear-gradient(#000 0,#000 11px,#a0a0a0 11px)"></div>
<div class="hm" style="left:286.68px;top:150.89px;color:#d2d2d2">BE</div>
<div style="left:303px;top:150px;width:17px;height:12px;background:linear-gradient(#000 0,#000 11px,#a0a0a0 11px)"></div>
<div class="hm" style="left:303.73px;top:150.89px;color:#d2d2d2">1C</div>
<div style="left:320px;top:150px;width:17px;height:12px;background:linear-gradient(#000 0,#000 11px,#a0a0a0 11px)"></div>
<div class="hm" style="left:320.78000000000003px;top:150.89px;color:#d2d2d2">EF</div>
<div style="left:337px;top:150px;width:13px;height:12px;background:linear-gradient(#000 0,#000 11px,#a0a0a0 11px)"></div>
<div class="hm" style="left:337.83px;top:150.89px;color:#d2d2d2">EE</div>
<div class="t" style="left:16.8px;top:163.26000000000002px;color:#4f4fe0;font-size:9.5px;transform:scaleX(1.08);transform-origin:0 0;-webkit-text-stroke:0">00000080</div>
<div style="left:75px;top:162px;width:17px;height:13px;background:linear-gradient(#000 0,#000 12px,#a0a0a0 12px)"></div>
<div class="hm" style="left:76.4px;top:163.06px;color:#d2d2d2">DE</div>
<div style="left:92px;top:162px;width:18px;height:13px;background:linear-gradient(#000 0,#000 12px,#a0a0a0 12px)"></div>
<div class="hm" style="left:93.45px;top:163.06px;color:#d2d2d2">FB</div>
<div style="left:110px;top:162px;width:17px;height:13px;background:linear-gradient(#000 0,#000 12px,#a0a0a0 12px)"></div>
<div class="hm" style="left:110.5px;top:163.06px;color:#d2d2d2">DD</div>
<div style="left:127px;top:162px;width:17px;height:13px;background:linear-gradient(#000 0,#000 12px,#a0a0a0 12px)"></div>
<div class="hm" style="left:127.55000000000001px;top:163.06px;color:#d2d2d2">BB</div>
<div style="left:144px;top:162px;width:17px;height:13px;background:linear-gradient(#000 0,#000 12px,#a0a0a0 12px)"></div>
<div class="hm" style="left:144.60000000000002px;top:163.06px;color:#d2d2d2">F5</div>
<div style="left:161px;top:162px;width:17px;height:13px;background:linear-gradient(#000 0,#000 12px,#a0a0a0 12px)"></div>
<div class="hm" style="left:161.65px;top:163.06px;color:#d2d2d2">2E</div>
<div style="left:178px;top:162px;width:17px;height:13px;background:linear-gradient(#000 0,#000 12px,#a0a0a0 12px)"></div>
<div class="hm" style="left:178.70000000000002px;top:163.06px;color:#d2d2d2">77</div>
<div style="left:195px;top:162px;width:22px;height:13px;background:linear-gradient(#000 0,#000 12px,#a0a0a0 12px)"></div>
<div class="hm" style="left:195.75px;top:163.06px;color:#d2d2d2">17</div>
<div style="left:217px;top:162px;width:18px;height:13px;background:linear-gradient(#000 0,#000 12px,#a0a0a0 12px)"></div>
<div class="hm" style="left:218.48000000000002px;top:163.06px;color:#d2d2d2">7E</div>
<div style="left:235px;top:162px;width:17px;height:13px;background:linear-gradient(#000 0,#000 12px,#a0a0a0 12px)"></div>
<div class="hm" style="left:235.53000000000003px;top:163.06px;color:#d2d2d2">AE</div>
<div style="left:252px;top:162px;width:17px;height:13px;background:linear-gradient(#000 0,#000 12px,#a0a0a0 12px)"></div>
<div class="hm" style="left:252.58px;top:163.06px;color:#d2d2d2">6E</div>
<div style="left:269px;top:162px;width:17px;height:13px;background:linear-gradient(#000 0,#000 12px,#a0a0a0 12px)"></div>
<div class="hm" style="left:269.63000000000005px;top:163.06px;color:#d2d2d2">7E</div>
<div style="left:286px;top:162px;width:17px;height:13px;background:linear-gradient(#000 0,#000 12px,#a0a0a0 12px)"></div>
<div class="hm" style="left:286.68px;top:163.06px;color:#d2d2d2">F5</div>
<div style="left:303px;top:162px;width:17px;height:13px;background:linear-gradient(#000 0,#000 12px,#a0a0a0 12px)"></div>
<div class="hm" style="left:303.73px;top:163.06px;color:#d2d2d2">FB</div>
<div style="left:320px;top:162px;width:17px;height:13px;background:linear-gradient(#000 0,#000 12px,#a0a0a0 12px)"></div>
<div class="hm" style="left:320.78000000000003px;top:163.06px;color:#d2d2d2">9F</div>
<div style="left:337px;top:162px;width:13px;height:13px;background:linear-gradient(#000 0,#000 12px,#a0a0a0 12px)"></div>
<div class="hm" style="left:337.83px;top:163.06px;color:#d2d2d2">DA</div>
<div class="t" style="left:16.8px;top:175.43px;color:#4f4fe0;font-size:9.5px;transform:scaleX(1.08);transform-origin:0 0;-webkit-text-stroke:0">00000090</div>
<div style="left:75px;top:175px;width:17px;height:12px;background:linear-gradient(#000 0,#000 11px,#a0a0a0 11px)"></div>
<div class="hm" style="left:76.4px;top:175.23px;color:#d2d2d2">5F</div>
<div style="left:92px;top:175px;width:18px;height:12px;background:linear-gradient(#000 0,#000 11px,#a0a0a0 11px)"></div>
<div class="hm" style="left:93.45px;top:175.23px;color:#d2d2d2">43</div>
<div style="left:110px;top:175px;width:17px;height:12px;background:linear-gradient(#000 0,#000 11px,#a0a0a0 11px)"></div>
<div class="hm" style="left:110.5px;top:175.23px;color:#d2d2d2">FC</div>
<div style="left:127px;top:175px;width:17px;height:12px;background:linear-gradient(#000 0,#000 11px,#a0a0a0 11px)"></div>
<div class="hm" style="left:127.55000000000001px;top:175.23px;color:#d2d2d2">2A</div>
<div style="left:144px;top:175px;width:17px;height:12px;background:linear-gradient(#000 0,#000 11px,#a0a0a0 11px)"></div>
<div class="hm" style="left:144.60000000000002px;top:175.23px;color:#d2d2d2">F5</div>
<div style="left:161px;top:175px;width:17px;height:12px;background:linear-gradient(#000 0,#000 11px,#a0a0a0 11px)"></div>
<div class="hm" style="left:161.65px;top:175.23px;color:#d2d2d2">45</div>
<div style="left:178px;top:175px;width:17px;height:12px;background:linear-gradient(#000 0,#000 11px,#a0a0a0 11px)"></div>
<div class="hm" style="left:178.70000000000002px;top:175.23px;color:#d2d2d2">78</div>
<div style="left:195px;top:175px;width:22px;height:12px;background:linear-gradient(#000 0,#000 11px,#a0a0a0 11px)"></div>
<div class="hm" style="left:195.75px;top:175.23px;color:#d2d2d2">2O</div>
<div style="left:217px;top:175px;width:18px;height:12px;background:linear-gradient(#000 0,#000 11px,#a0a0a0 11px)"></div>
<div class="hm" style="left:218.48000000000002px;top:175.23px;color:#d2d2d2">EA</div>
<div style="left:235px;top:175px;width:17px;height:12px;background:linear-gradient(#000 0,#000 11px,#a0a0a0 11px)"></div>
<div class="hm" style="left:235.53000000000003px;top:175.23px;color:#d2d2d2">1B</div>
<div style="left:252px;top:175px;width:17px;height:12px;background:linear-gradient(#000 0,#000 11px,#a0a0a0 11px)"></div>
<div class="hm" style="left:252.58px;top:175.23px;color:#d2d2d2">9A</div>
<div style="left:269px;top:175px;width:17px;height:12px;background:linear-gradient(#000 0,#000 11px,#a0a0a0 11px)"></div>
<div class="hm" style="left:269.63000000000005px;top:175.23px;color:#d2d2d2">21</div>
<div style="left:286px;top:175px;width:17px;height:12px;background:linear-gradient(#000 0,#000 11px,#a0a0a0 11px)"></div>
<div class="hm" style="left:286.68px;top:175.23px;color:#d2d2d2">9A</div>
<div style="left:303px;top:175px;width:17px;height:12px;background:linear-gradient(#000 0,#000 11px,#a0a0a0 11px)"></div>
<div class="hm" style="left:303.73px;top:175.23px;color:#d2d2d2">7C</div>
<div style="left:320px;top:175px;width:17px;height:12px;background:linear-gradient(#000 0,#000 11px,#a0a0a0 11px)"></div>
<div class="hm" style="left:320.78000000000003px;top:175.23px;color:#d2d2d2">36</div>
<div style="left:337px;top:175px;width:13px;height:12px;background:linear-gradient(#000 0,#000 11px,#a0a0a0 11px)"></div>
<div class="hm" style="left:337.83px;top:175.23px;color:#d2d2d2">CE</div>
<div class="t" style="left:16.8px;top:187.6px;color:#4f4fe0;font-size:9.5px;transform:scaleX(1.08);transform-origin:0 0;-webkit-text-stroke:0">000000A0</div>
<div style="left:75px;top:187px;width:17px;height:12px;background:linear-gradient(#000 0,#000 11px,#a0a0a0 11px)"></div>
<div class="hm" style="left:76.4px;top:187.39999999999998px;color:#d2d2d2">BB</div>
<div style="left:92px;top:187px;width:18px;height:12px;background:linear-gradient(#000 0,#000 11px,#a0a0a0 11px)"></div>
<div class="hm" style="left:93.45px;top:187.39999999999998px;color:#d2d2d2">71</div>
<div style="left:110px;top:187px;width:17px;height:12px;background:linear-gradient(#000 0,#000 11px,#a0a0a0 11px)"></div>
<div class="hm" style="left:110.5px;top:187.39999999999998px;color:#d2d2d2">E8</div>
<div style="left:127px;top:187px;width:17px;height:12px;background:linear-gradient(#000 0,#000 11px,#a0a0a0 11px)"></div>
<div class="hm" style="left:127.55000000000001px;top:187.39999999999998px;color:#d2d2d2">61</div>
<div style="left:144px;top:187px;width:17px;height:12px;background:linear-gradient(#000 0,#000 11px,#a0a0a0 11px)"></div>
<div class="hm" style="left:144.60000000000002px;top:187.39999999999998px;color:#d2d2d2">FF</div>
<div style="left:161px;top:187px;width:17px;height:12px;background:linear-gradient(#000 0,#000 11px,#a0a0a0 11px)"></div>
<div class="hm" style="left:161.65px;top:187.39999999999998px;color:#d2d2d2">15</div>
<div style="left:178px;top:187px;width:17px;height:12px;background:linear-gradient(#000 0,#000 11px,#a0a0a0 11px)"></div>
<div class="hm" style="left:178.70000000000002px;top:187.39999999999998px;color:#d2d2d2">84</div>
<div style="left:195px;top:187px;width:22px;height:12px;background:linear-gradient(#000 0,#000 11px,#a0a0a0 11px)"></div>
<div class="hm" style="left:195.75px;top:187.39999999999998px;color:#d2d2d2">4O</div>
<div style="left:217px;top:187px;width:18px;height:12px;background:linear-gradient(#000 0,#000 11px,#a0a0a0 11px)"></div>
<div class="hm" style="left:218.48000000000002px;top:187.39999999999998px;color:#d2d2d2">O4</div>
<div style="left:235px;top:187px;width:17px;height:12px;background:linear-gradient(#000 0,#000 11px,#a0a0a0 11px)"></div>
<div class="hm" style="left:235.53000000000003px;top:187.39999999999998px;color:#d2d2d2">CO</div>
<div style="left:252px;top:187px;width:17px;height:12px;background:linear-gradient(#000 0,#000 11px,#a0a0a0 11px)"></div>
<div class="hm" style="left:252.58px;top:187.39999999999998px;color:#d2d2d2">CO</div>
<div style="left:269px;top:187px;width:17px;height:12px;background:linear-gradient(#000 0,#000 11px,#a0a0a0 11px)"></div>
<div class="hm" style="left:269.63000000000005px;top:187.39999999999998px;color:#d2d2d2">OD</div>
<div style="left:286px;top:187px;width:17px;height:12px;background:linear-gradient(#000 0,#000 11px,#a0a0a0 11px)"></div>
<div class="hm" style="left:286.68px;top:187.39999999999998px;color:#d2d2d2">D4</div>
<div style="left:303px;top:187px;width:17px;height:12px;background:linear-gradient(#000 0,#000 11px,#a0a0a0 11px)"></div>
<div class="hm" style="left:303.73px;top:187.39999999999998px;color:#d2d2d2">37</div>
<div style="left:320px;top:187px;width:17px;height:12px;background:linear-gradient(#000 0,#000 11px,#a0a0a0 11px)"></div>
<div class="hm" style="left:320.78000000000003px;top:187.39999999999998px;color:#d2d2d2">34</div>
<div style="left:337px;top:187px;width:13px;height:12px;background:linear-gradient(#000 0,#000 11px,#a0a0a0 11px)"></div>
<div class="hm" style="left:337.83px;top:187.39999999999998px;color:#d2d2d2">34</div>
<div class="t" style="left:16.8px;top:199.77px;color:#4f4fe0;font-size:9.5px;transform:scaleX(1.08);transform-origin:0 0;-webkit-text-stroke:0">000000B0</div>
<div style="left:75px;top:199px;width:17px;height:12px;background:linear-gradient(#000 0,#000 11px,#a0a0a0 11px)"></div>
<div class="hm" style="left:76.4px;top:199.57px;color:#d2d2d2">2O</div>
<div style="left:92px;top:199px;width:18px;height:12px;background:linear-gradient(#000 0,#000 11px,#a0a0a0 11px)"></div>
<div class="hm" style="left:93.45px;top:199.57px;color:#d2d2d2">1A</div>
<div style="left:110px;top:199px;width:17px;height:12px;background:linear-gradient(#000 0,#000 11px,#a0a0a0 11px)"></div>
<div class="hm" style="left:110.5px;top:199.57px;color:#d2d2d2">FF</div>
<div style="left:127px;top:199px;width:17px;height:12px;background:linear-gradient(#000 0,#000 11px,#a0a0a0 11px)"></div>
<div class="hm" style="left:127.55000000000001px;top:199.57px;color:#d2d2d2">EE</div>
<div style="left:144px;top:199px;width:17px;height:12px;background:linear-gradient(#000 0,#000 11px,#a0a0a0 11px)"></div>
<div class="hm" style="left:144.60000000000002px;top:199.57px;color:#d2d2d2">O1</div>
<div style="left:161px;top:199px;width:17px;height:12px;background:linear-gradient(#000 0,#000 11px,#a0a0a0 11px)"></div>
<div class="hm" style="left:161.65px;top:199.57px;color:#d2d2d2">7A</div>
<div style="left:178px;top:199px;width:17px;height:12px;background:linear-gradient(#000 0,#000 11px,#a0a0a0 11px)"></div>
<div class="hm" style="left:178.70000000000002px;top:199.57px;color:#d2d2d2">82</div>
<div style="left:195px;top:199px;width:22px;height:12px;background:linear-gradient(#000 0,#000 11px,#a0a0a0 11px)"></div>
<div class="hm" style="left:195.75px;top:199.57px;color:#d2d2d2">5E</div>
<div style="left:217px;top:199px;width:18px;height:12px;background:linear-gradient(#000 0,#000 11px,#a0a0a0 11px)"></div>
<div class="hm" style="left:218.48000000000002px;top:199.57px;color:#d2d2d2">2O</div>
<div style="left:235px;top:199px;width:17px;height:12px;background:linear-gradient(#000 0,#000 11px,#a0a0a0 11px)"></div>
<div class="hm" style="left:235.53000000000003px;top:199.57px;color:#d2d2d2">O2</div>
<div style="left:252px;top:199px;width:17px;height:12px;background:linear-gradient(#000 0,#000 11px,#a0a0a0 11px)"></div>
<div class="hm" style="left:252.58px;top:199.57px;color:#d2d2d2">F4</div>
<div style="left:269px;top:199px;width:17px;height:12px;background:linear-gradient(#000 0,#000 11px,#a0a0a0 11px)"></div>
<div class="hm" style="left:269.63000000000005px;top:199.57px;color:#d2d2d2">6E</div>
<div style="left:286px;top:199px;width:17px;height:12px;background:linear-gradient(#000 0,#000 11px,#a0a0a0 11px)"></div>
<div class="hm" style="left:286.68px;top:199.57px;color:#d2d2d2">2C</div>
<div style="left:303px;top:199px;width:17px;height:12px;background:linear-gradient(#000 0,#000 11px,#a0a0a0 11px)"></div>
<div class="hm" style="left:303.73px;top:199.57px;color:#d2d2d2">DO</div>
<div style="left:320px;top:199px;width:17px;height:12px;background:linear-gradient(#000 0,#000 11px,#a0a0a0 11px)"></div>
<div class="hm" style="left:320.78000000000003px;top:199.57px;color:#d2d2d2">FO</div>
<div style="left:337px;top:199px;width:13px;height:12px;background:linear-gradient(#000 0,#000 11px,#a0a0a0 11px)"></div>
<div class="hm" style="left:337.83px;top:199.57px;color:#d2d2d2">FF</div>
<div class="t" style="left:16.8px;top:211.94px;color:#4f4fe0;font-size:9.5px;transform:scaleX(1.08);transform-origin:0 0;-webkit-text-stroke:0">000000C0</div>
<div style="left:75px;top:211px;width:17px;height:12px;background:linear-gradient(#000 0,#000 11px,#a0a0a0 11px)"></div>
<div class="hm" style="left:76.4px;top:211.73999999999998px;color:#d2d2d2">F4</div>
<div style="left:92px;top:211px;width:18px;height:12px;background:linear-gradient(#000 0,#000 11px,#a0a0a0 11px)"></div>
<div class="hm" style="left:93.45px;top:211.73999999999998px;color:#d2d2d2">6F</div>
<div style="left:110px;top:211px;width:17px;height:12px;background:linear-gradient(#000 0,#000 11px,#a0a0a0 11px)"></div>
<div class="hm" style="left:110.5px;top:211.73999999999998px;color:#d2d2d2">99</div>
<div style="left:127px;top:211px;width:17px;height:12px;background:linear-gradient(#000 0,#000 11px,#a0a0a0 11px)"></div>
<div class="hm" style="left:127.55000000000001px;top:211.73999999999998px;color:#d2d2d2">78</div>
<div style="left:144px;top:211px;width:17px;height:12px;background:linear-gradient(#000 0,#000 11px,#a0a0a0 11px)"></div>
<div class="hm" style="left:144.60000000000002px;top:211.73999999999998px;color:#d2d2d2">O8</div>
<div style="left:161px;top:211px;width:17px;height:12px;background:linear-gradient(#000 0,#000 11px,#a0a0a0 11px)"></div>
<div class="hm" style="left:161.65px;top:211.73999999999998px;color:#d2d2d2">3D</div>
<div style="left:178px;top:211px;width:17px;height:12px;background:linear-gradient(#000 0,#000 11px,#a0a0a0 11px)"></div>
<div class="hm" style="left:178.70000000000002px;top:211.73999999999998px;color:#d2d2d2">FC</div>
<div style="left:195px;top:211px;width:22px;height:12px;background:linear-gradient(#000 0,#000 11px,#a0a0a0 11px)"></div>
<div class="hm" style="left:195.75px;top:211.73999999999998px;color:#d2d2d2">98</div>
<div style="left:217px;top:211px;width:18px;height:12px;background:linear-gradient(#000 0,#000 11px,#a0a0a0 11px)"></div>
<div class="hm" style="left:218.48000000000002px;top:211.73999999999998px;color:#d2d2d2">11</div>
<div style="left:235px;top:211px;width:17px;height:12px;background:linear-gradient(#000 0,#000 11px,#a0a0a0 11px)"></div>
<div class="hm" style="left:235.53000000000003px;top:211.73999999999998px;color:#d2d2d2">48</div>
<div style="left:252px;top:211px;width:17px;height:12px;background:linear-gradient(#000 0,#000 11px,#a0a0a0 11px)"></div>
<div class="hm" style="left:252.58px;top:211.73999999999998px;color:#d2d2d2">O4</div>
<div style="left:269px;top:211px;width:17px;height:12px;background:linear-gradient(#000 0,#000 11px,#a0a0a0 11px)"></div>
<div class="hm" style="left:269.63000000000005px;top:211.73999999999998px;color:#d2d2d2">OD</div>
<div style="left:286px;top:211px;width:17px;height:12px;background:linear-gradient(#000 0,#000 11px,#a0a0a0 11px)"></div>
<div class="hm" style="left:286.68px;top:211.73999999999998px;color:#d2d2d2">A1</div>
<div style="left:303px;top:211px;width:17px;height:12px;background:linear-gradient(#000 0,#000 11px,#a0a0a0 11px)"></div>
<div class="hm" style="left:303.73px;top:211.73999999999998px;color:#d2d2d2">83</div>
<div style="left:320px;top:211px;width:17px;height:12px;background:linear-gradient(#000 0,#000 11px,#a0a0a0 11px)"></div>
<div class="hm" style="left:320.78000000000003px;top:211.73999999999998px;color:#d2d2d2">A1</div>
<div style="left:337px;top:211px;width:13px;height:12px;background:linear-gradient(#000 0,#000 11px,#a0a0a0 11px)"></div>
<div class="hm" style="left:337.83px;top:211.73999999999998px;color:#d2d2d2">11</div>
<div class="t" style="left:16.8px;top:224.11px;color:#4f4fe0;font-size:9.5px;transform:scaleX(1.08);transform-origin:0 0;-webkit-text-stroke:0">000000D0</div>
<div style="left:75px;top:223px;width:17px;height:12px;background:linear-gradient(#000 0,#000 11px,#a0a0a0 11px)"></div>
<div class="hm" style="left:76.4px;top:223.91px;color:#d2d2d2">61</div>
<div style="left:92px;top:223px;width:18px;height:12px;background:linear-gradient(#000 0,#000 11px,#a0a0a0 11px)"></div>
<div class="hm" style="left:93.45px;top:223.91px;color:#d2d2d2">43</div>
<div style="left:110px;top:223px;width:17px;height:12px;background:linear-gradient(#000 0,#000 11px,#a0a0a0 11px)"></div>
<div class="hm" style="left:110.5px;top:223.91px;color:#d2d2d2">B8</div>
<div style="left:127px;top:223px;width:17px;height:12px;background:linear-gradient(#000 0,#000 11px,#a0a0a0 11px)"></div>
<div class="hm" style="left:127.55000000000001px;top:223.91px;color:#d2d2d2">92</div>
<div style="left:144px;top:223px;width:17px;height:12px;background:linear-gradient(#000 0,#000 11px,#a0a0a0 11px)"></div>
<div class="hm" style="left:144.60000000000002px;top:223.91px;color:#d2d2d2">82</div>
<div style="left:161px;top:223px;width:17px;height:12px;background:linear-gradient(#000 0,#000 11px,#a0a0a0 11px)"></div>
<div class="hm" style="left:161.65px;top:223.91px;color:#d2d2d2">11</div>
<div style="left:178px;top:223px;width:17px;height:12px;background:linear-gradient(#000 0,#000 11px,#a0a0a0 11px)"></div>
<div class="hm" style="left:178.70000000000002px;top:223.91px;color:#d2d2d2">5E</div>
<div style="left:195px;top:223px;width:22px;height:12px;background:linear-gradient(#000 0,#000 11px,#a0a0a0 11px)"></div>
<div class="hm" style="left:195.75px;top:223.91px;color:#d2d2d2">9F</div>
<div style="left:217px;top:223px;width:18px;height:12px;background:linear-gradient(#000 0,#000 11px,#a0a0a0 11px)"></div>
<div class="hm" style="left:218.48000000000002px;top:223.91px;color:#d2d2d2">B6</div>
<div style="left:235px;top:223px;width:17px;height:12px;background:linear-gradient(#000 0,#000 11px,#a0a0a0 11px)"></div>
<div class="hm" style="left:235.53000000000003px;top:223.91px;color:#d2d2d2">6D</div>
<div style="left:252px;top:223px;width:17px;height:12px;background:linear-gradient(#000 0,#000 11px,#a0a0a0 11px)"></div>
<div class="hm" style="left:252.58px;top:223.91px;color:#d2d2d2">5B</div>
<div style="left:269px;top:223px;width:17px;height:12px;background:linear-gradient(#000 0,#000 11px,#a0a0a0 11px)"></div>
<div class="hm" style="left:269.63000000000005px;top:223.91px;color:#d2d2d2">C8</div>
<div style="left:286px;top:223px;width:17px;height:12px;background:linear-gradient(#000 0,#000 11px,#a0a0a0 11px)"></div>
<div class="hm" style="left:286.68px;top:223.91px;color:#d2d2d2">FB</div>
<div style="left:303px;top:223px;width:17px;height:12px;background:linear-gradient(#000 0,#000 11px,#a0a0a0 11px)"></div>
<div class="hm" style="left:303.73px;top:223.91px;color:#d2d2d2">FA</div>
<div style="left:320px;top:223px;width:17px;height:12px;background:linear-gradient(#000 0,#000 11px,#a0a0a0 11px)"></div>
<div class="hm" style="left:320.78000000000003px;top:223.91px;color:#d2d2d2">BB</div>
<div style="left:337px;top:223px;width:13px;height:12px;background:linear-gradient(#000 0,#000 11px,#a0a0a0 11px)"></div>
<div class="hm" style="left:337.83px;top:223.91px;color:#d2d2d2">3B</div>
<div class="t" style="left:16.8px;top:236.28px;color:#4f4fe0;font-size:9.5px;transform:scaleX(1.08);transform-origin:0 0;-webkit-text-stroke:0">000000E0</div>
<div style="left:75px;top:235px;width:17px;height:13px;background:linear-gradient(#000 0,#000 12px,#a0a0a0 12px)"></div>
<div class="hm" style="left:76.4px;top:236.07999999999998px;color:#d2d2d2">C6</div>
<div style="left:92px;top:235px;width:18px;height:13px;background:linear-gradient(#000 0,#000 12px,#a0a0a0 12px)"></div>
<div class="hm" style="left:93.45px;top:236.07999999999998px;color:#d2d2d2">57</div>
<div style="left:110px;top:235px;width:17px;height:13px;background:linear-gradient(#000 0,#000 12px,#a0a0a0 12px)"></div>
<div class="hm" style="left:110.5px;top:236.07999999999998px;color:#d2d2d2">7E</div>
<div style="left:127px;top:235px;width:17px;height:13px;background:linear-gradient(#000 0,#000 12px,#a0a0a0 12px)"></div>
<div class="hm" style="left:127.55000000000001px;top:236.07999999999998px;color:#d2d2d2">98</div>
<div style="left:144px;top:235px;width:17px;height:13px;background:linear-gradient(#000 0,#000 12px,#a0a0a0 12px)"></div>
<div class="hm" style="left:144.60000000000002px;top:236.07999999999998px;color:#d2d2d2">4C</div>
<div style="left:161px;top:235px;width:17px;height:13px;background:linear-gradient(#000 0,#000 12px,#a0a0a0 12px)"></div>
<div class="hm" style="left:161.65px;top:236.07999999999998px;color:#d2d2d2">FF</div>
<div style="left:178px;top:235px;width:17px;height:13px;background:linear-gradient(#000 0,#000 12px,#a0a0a0 12px)"></div>
<div class="hm" style="left:178.70000000000002px;top:236.07999999999998px;color:#d2d2d2">7C</div>
<div style="left:195px;top:235px;width:22px;height:13px;background:linear-gradient(#000 0,#000 12px,#a0a0a0 12px)"></div>
<div class="hm" style="left:195.75px;top:236.07999999999998px;color:#d2d2d2">5E</div>
<div style="left:217px;top:235px;width:18px;height:13px;background:linear-gradient(#000 0,#000 12px,#a0a0a0 12px)"></div>
<div class="hm" style="left:218.48000000000002px;top:236.07999999999998px;color:#d2d2d2">43</div>
<div class="hm" style="left:235.53000000000003px;top:236.07999999999998px;color:#4a4a4a">57</div>
<div style="left:252px;top:235px;width:17px;height:13px;background:linear-gradient(#000 0,#000 12px,#a0a0a0 12px)"></div>
<div class="hm" style="left:252.58px;top:236.07999999999998px;color:#d2d2d2">AF</div>
<div style="left:269px;top:235px;width:17px;height:13px;background:linear-gradient(#000 0,#000 12px,#a0a0a0 12px)"></div>
<div class="hm" style="left:269.63000000000005px;top:236.07999999999998px;color:#d2d2d2">9A</div>
<div style="left:286px;top:235px;width:17px;height:13px;background:linear-gradient(#000 0,#000 12px,#a0a0a0 12px)"></div>
<div class="hm" style="left:286.68px;top:236.07999999999998px;color:#d2d2d2">63</div>
<div style="left:303px;top:235px;width:17px;height:13px;background:linear-gradient(#000 0,#000 12px,#a0a0a0 12px)"></div>
<div class="hm" style="left:303.73px;top:236.07999999999998px;color:#d2d2d2">9D</div>
<div style="left:320px;top:235px;width:17px;height:13px;background:linear-gradient(#000 0,#000 12px,#a0a0a0 12px)"></div>
<div class="hm" style="left:320.78000000000003px;top:236.07999999999998px;color:#d2d2d2">CF</div>
<div style="left:337px;top:235px;width:13px;height:13px;background:linear-gradient(#000 0,#000 12px,#a0a0a0 12px)"></div>
<div class="hm" style="left:337.83px;top:236.07999999999998px;color:#d2d2d2">BA</div>
<div class="t" style="left:16.8px;top:248.45000000000002px;color:#4f4fe0;font-size:9.5px;transform:scaleX(1.08);transform-origin:0 0;-webkit-text-stroke:0">000000F0</div>
<div style="left:75px;top:248px;width:17px;height:12px;background:linear-gradient(#000 0,#000 11px,#a0a0a0 11px)"></div>
<div class="hm" style="left:76.4px;top:248.25px;color:#d2d2d2">O5</div>
<div style="left:92px;top:248px;width:18px;height:12px;background:linear-gradient(#000 0,#000 11px,#a0a0a0 11px)"></div>
<div class="hm" style="left:93.45px;top:248.25px;color:#d2d2d2">C2</div>
<div style="left:110px;top:248px;width:17px;height:12px;background:linear-gradient(#000 0,#000 11px,#a0a0a0 11px)"></div>
<div class="hm" style="left:110.5px;top:248.25px;color:#d2d2d2">DF</div>
<div style="left:127px;top:248px;width:17px;height:12px;background:linear-gradient(#000 0,#000 11px,#a0a0a0 11px)"></div>
<div class="hm" style="left:127.55000000000001px;top:248.25px;color:#d2d2d2">F1</div>
<div style="left:144px;top:248px;width:17px;height:12px;background:linear-gradient(#000 0,#000 11px,#a0a0a0 11px)"></div>
<div class="hm" style="left:144.60000000000002px;top:248.25px;color:#d2d2d2">6D</div>
<div style="left:161px;top:248px;width:17px;height:12px;background:linear-gradient(#000 0,#000 11px,#a0a0a0 11px)"></div>
<div class="hm" style="left:161.65px;top:248.25px;color:#d2d2d2">3F</div>
<div style="left:178px;top:248px;width:17px;height:12px;background:linear-gradient(#000 0,#000 11px,#a0a0a0 11px)"></div>
<div class="hm" style="left:178.70000000000002px;top:248.25px;color:#d2d2d2">8C</div>
<div style="left:195px;top:248px;width:22px;height:12px;background:linear-gradient(#000 0,#000 11px,#a0a0a0 11px)"></div>
<div class="hm" style="left:195.75px;top:248.25px;color:#d2d2d2">CB</div>
<div style="left:217px;top:248px;width:18px;height:12px;background:linear-gradient(#000 0,#000 11px,#a0a0a0 11px)"></div>
<div class="hm" style="left:218.48000000000002px;top:248.25px;color:#d2d2d2">85</div>
<div style="left:235px;top:248px;width:17px;height:12px;background:linear-gradient(#000 0,#000 11px,#a0a0a0 11px)"></div>
<div class="hm" style="left:235.53000000000003px;top:248.25px;color:#d2d2d2">1F</div>
<div style="left:252px;top:248px;width:17px;height:12px;background:linear-gradient(#000 0,#000 11px,#a0a0a0 11px)"></div>
<div class="hm" style="left:252.58px;top:248.25px;color:#d2d2d2">O3</div>
<div style="left:269px;top:248px;width:17px;height:12px;background:linear-gradient(#000 0,#000 11px,#a0a0a0 11px)"></div>
<div class="hm" style="left:269.63000000000005px;top:248.25px;color:#d2d2d2">44</div>
<div style="left:286px;top:248px;width:17px;height:12px;background:linear-gradient(#000 0,#000 11px,#a0a0a0 11px)"></div>
<div class="hm" style="left:286.68px;top:248.25px;color:#d2d2d2">D5</div>
<div style="left:303px;top:248px;width:17px;height:12px;background:linear-gradient(#000 0,#000 11px,#a0a0a0 11px)"></div>
<div class="hm" style="left:303.73px;top:248.25px;color:#d2d2d2">C3</div>
<div style="left:320px;top:248px;width:17px;height:12px;background:linear-gradient(#000 0,#000 11px,#a0a0a0 11px)"></div>
<div class="hm" style="left:320.78000000000003px;top:248.25px;color:#d2d2d2">6F</div>
<div style="left:337px;top:248px;width:13px;height:12px;background:linear-gradient(#000 0,#000 11px,#a0a0a0 11px)"></div>
<div class="hm" style="left:337.83px;top:248.25px;color:#d2d2d2">19</div>
<div class="t" style="left:16.8px;top:260.62px;color:#4f4fe0;font-size:9.5px;transform:scaleX(1.08);transform-origin:0 0;-webkit-text-stroke:0">00000100</div>
<div style="left:75px;top:260px;width:17px;height:12px;background:linear-gradient(#000 0,#000 11px,#a0a0a0 11px)"></div>
<div class="hm" style="left:76.4px;top:260.42px;color:#d2d2d2">OC</div>
<div style="left:92px;top:260px;width:18px;height:12px;background:linear-gradient(#000 0,#000 11px,#a0a0a0 11px)"></div>
<div class="hm" style="left:93.45px;top:260.42px;color:#d2d2d2">CD</div>
<div style="left:110px;top:260px;width:17px;height:12px;background:linear-gradient(#000 0,#000 11px,#a0a0a0 11px)"></div>
<div class="hm" style="left:110.5px;top:260.42px;color:#d2d2d2">O8</div>
<div style="left:127px;top:260px;width:17px;height:12px;background:linear-gradient(#000 0,#000 11px,#a0a0a0 11px)"></div>
<div class="hm" style="left:127.55000000000001px;top:260.42px;color:#d2d2d2">15</div>
<div style="left:144px;top:260px;width:17px;height:12px;background:linear-gradient(#000 0,#000 11px,#a0a0a0 11px)"></div>
<div class="hm" style="left:144.60000000000002px;top:260.42px;color:#d2d2d2">OC</div>
<div style="left:161px;top:260px;width:17px;height:12px;background:linear-gradient(#000 0,#000 11px,#a0a0a0 11px)"></div>
<div class="hm" style="left:161.65px;top:260.42px;color:#d2d2d2">4D</div>
<div style="left:178px;top:260px;width:17px;height:12px;background:linear-gradient(#000 0,#000 11px,#a0a0a0 11px)"></div>
<div class="hm" style="left:178.70000000000002px;top:260.42px;color:#d2d2d2">3O</div>
<div style="left:195px;top:260px;width:22px;height:12px;background:linear-gradient(#000 0,#000 11px,#a0a0a0 11px)"></div>
<div class="hm" style="left:195.75px;top:260.42px;color:#d2d2d2">D6</div>
<div style="left:217px;top:260px;width:18px;height:12px;background:linear-gradient(#000 0,#000 11px,#a0a0a0 11px)"></div>
<div class="hm" style="left:218.48000000000002px;top:260.42px;color:#d2d2d2">EA</div>
<div style="left:235px;top:260px;width:17px;height:12px;background:linear-gradient(#000 0,#000 11px,#a0a0a0 11px)"></div>
<div class="hm" style="left:235.53000000000003px;top:260.42px;color:#d2d2d2">C8</div>
<div style="left:252px;top:260px;width:17px;height:12px;background:linear-gradient(#000 0,#000 11px,#a0a0a0 11px)"></div>
<div class="hm" style="left:252.58px;top:260.42px;color:#d2d2d2">9B</div>
<div style="left:269px;top:260px;width:17px;height:12px;background:linear-gradient(#000 0,#000 11px,#a0a0a0 11px)"></div>
<div class="hm" style="left:269.63000000000005px;top:260.42px;color:#d2d2d2">2O</div>
<div style="left:286px;top:260px;width:17px;height:12px;background:linear-gradient(#000 0,#000 11px,#a0a0a0 11px)"></div>
<div class="hm" style="left:286.68px;top:260.42px;color:#d2d2d2">AF</div>
<div style="left:303px;top:260px;width:17px;height:12px;background:linear-gradient(#000 0,#000 11px,#a0a0a0 11px)"></div>
<div class="hm" style="left:303.73px;top:260.42px;color:#d2d2d2">87</div>
<div style="left:320px;top:260px;width:17px;height:12px;background:linear-gradient(#000 0,#000 11px,#a0a0a0 11px)"></div>
<div class="hm" style="left:320.78000000000003px;top:260.42px;color:#d2d2d2">25</div>
<div style="left:337px;top:260px;width:13px;height:12px;background:linear-gradient(#000 0,#000 11px,#a0a0a0 11px)"></div>
<div class="hm" style="left:337.83px;top:260.42px;color:#d2d2d2">C3</div>
<div class="t" style="left:16.8px;top:272.78999999999996px;color:#4f4fe0;font-size:9.5px;transform:scaleX(1.08);transform-origin:0 0;-webkit-text-stroke:0">00000110</div>
<div style="left:75px;top:272px;width:17px;height:12px;background:linear-gradient(#000 0,#000 11px,#a0a0a0 11px)"></div>
<div class="hm" style="left:76.4px;top:272.59px;color:#d2d2d2">2O</div>
<div style="left:92px;top:272px;width:18px;height:12px;background:linear-gradient(#000 0,#000 11px,#a0a0a0 11px)"></div>
<div class="hm" style="left:93.45px;top:272.59px;color:#d2d2d2">5O</div>
<div style="left:110px;top:272px;width:17px;height:12px;background:linear-gradient(#000 0,#000 11px,#a0a0a0 11px)"></div>
<div class="hm" style="left:110.5px;top:272.59px;color:#d2d2d2">O8</div>
<div style="left:127px;top:272px;width:17px;height:12px;background:linear-gradient(#000 0,#000 11px,#a0a0a0 11px)"></div>
<div class="hm" style="left:127.55000000000001px;top:272.59px;color:#d2d2d2">F4</div>
<div style="left:144px;top:272px;width:17px;height:12px;background:linear-gradient(#000 0,#000 11px,#a0a0a0 11px)"></div>
<div class="hm" style="left:144.60000000000002px;top:272.59px;color:#d2d2d2">5F</div>
<div style="left:161px;top:272px;width:17px;height:12px;background:linear-gradient(#000 0,#000 11px,#a0a0a0 11px)"></div>
<div class="hm" style="left:161.65px;top:272.59px;color:#d2d2d2">87</div>
<div style="left:178px;top:272px;width:17px;height:12px;background:linear-gradient(#000 0,#000 11px,#a0a0a0 11px)"></div>
<div class="hm" style="left:178.70000000000002px;top:272.59px;color:#d2d2d2">87</div>
<div style="left:195px;top:272px;width:22px;height:12px;background:linear-gradient(#000 0,#000 11px,#a0a0a0 11px)"></div>
<div class="hm" style="left:195.75px;top:272.59px;color:#d2d2d2">71</div>
<div style="left:217px;top:272px;width:18px;height:12px;background:linear-gradient(#000 0,#000 11px,#a0a0a0 11px)"></div>
<div class="hm" style="left:218.48000000000002px;top:272.59px;color:#d2d2d2">EE</div>
<div style="left:235px;top:272px;width:17px;height:12px;background:linear-gradient(#000 0,#000 11px,#a0a0a0 11px)"></div>
<div class="hm" style="left:235.53000000000003px;top:272.59px;color:#d2d2d2">6E</div>
<div style="left:252px;top:272px;width:17px;height:12px;background:linear-gradient(#000 0,#000 11px,#a0a0a0 11px)"></div>
<div class="hm" style="left:252.58px;top:272.59px;color:#d2d2d2">3D</div>
<div style="left:269px;top:272px;width:17px;height:12px;background:linear-gradient(#000 0,#000 11px,#a0a0a0 11px)"></div>
<div class="hm" style="left:269.63000000000005px;top:272.59px;color:#d2d2d2">11</div>
<div style="left:286px;top:272px;width:17px;height:12px;background:linear-gradient(#000 0,#000 11px,#a0a0a0 11px)"></div>
<div class="hm" style="left:286.68px;top:272.59px;color:#d2d2d2">BF</div>
<div style="left:303px;top:272px;width:17px;height:12px;background:linear-gradient(#000 0,#000 11px,#a0a0a0 11px)"></div>
<div class="hm" style="left:303.73px;top:272.59px;color:#d2d2d2">EC</div>
<div style="left:320px;top:272px;width:17px;height:12px;background:linear-gradient(#000 0,#000 11px,#a0a0a0 11px)"></div>
<div class="hm" style="left:320.78000000000003px;top:272.59px;color:#d2d2d2">5F</div>
<div style="left:337px;top:272px;width:13px;height:12px;background:linear-gradient(#000 0,#000 11px,#a0a0a0 11px)"></div>
<div class="hm" style="left:337.83px;top:272.59px;color:#d2d2d2">O8</div>
<div class="t" style="left:16.8px;top:284.96px;color:#4f4fe0;font-size:9.5px;transform:scaleX(1.08);transform-origin:0 0;-webkit-text-stroke:0">00000120</div>
<div style="left:75px;top:284px;width:17px;height:12px;background:linear-gradient(#000 0,#000 11px,#a0a0a0 11px)"></div>
<div class="hm" style="left:76.4px;top:284.76px;color:#d2d2d2">27</div>
<div style="left:92px;top:284px;width:18px;height:12px;background:linear-gradient(#000 0,#000 11px,#a0a0a0 11px)"></div>
<div class="hm" style="left:93.45px;top:284.76px;color:#d2d2d2">12</div>
<div style="left:110px;top:284px;width:17px;height:12px;background:linear-gradient(#000 0,#000 11px,#a0a0a0 11px)"></div>
<div class="hm" style="left:110.5px;top:284.76px;color:#d2d2d2">19</div>
<div style="left:127px;top:284px;width:17px;height:12px;background:linear-gradient(#000 0,#000 11px,#a0a0a0 11px)"></div>
<div class="hm" style="left:127.55000000000001px;top:284.76px;color:#d2d2d2">OC</div>
<div style="left:144px;top:284px;width:17px;height:12px;background:linear-gradient(#000 0,#000 11px,#a0a0a0 11px)"></div>
<div class="hm" style="left:144.60000000000002px;top:284.76px;color:#d2d2d2">F2</div>
<div style="left:161px;top:284px;width:17px;height:12px;background:linear-gradient(#000 0,#000 11px,#a0a0a0 11px)"></div>
<div class="hm" style="left:161.65px;top:284.76px;color:#d2d2d2">F8</div>
<div style="left:178px;top:284px;width:17px;height:12px;background:linear-gradient(#000 0,#000 11px,#a0a0a0 11px)"></div>
<div class="hm" style="left:178.70000000000002px;top:284.76px;color:#d2d2d2">14</div>
<div style="left:195px;top:284px;width:22px;height:12px;background:linear-gradient(#000 0,#000 11px,#a0a0a0 11px)"></div>
<div class="hm" style="left:195.75px;top:284.76px;color:#d2d2d2">1F</div>
<div style="left:217px;top:284px;width:18px;height:12px;background:linear-gradient(#000 0,#000 11px,#a0a0a0 11px)"></div>
<div class="hm" style="left:218.48000000000002px;top:284.76px;color:#d2d2d2">6A</div>
<div style="left:235px;top:284px;width:17px;height:12px;background:linear-gradient(#000 0,#000 11px,#a0a0a0 11px)"></div>
<div class="hm" style="left:235.53000000000003px;top:284.76px;color:#d2d2d2">17</div>
<div style="left:252px;top:284px;width:17px;height:12px;background:linear-gradient(#000 0,#000 11px,#a0a0a0 11px)"></div>
<div class="hm" style="left:252.58px;top:284.76px;color:#d2d2d2">21</div>
<div style="left:269px;top:284px;width:17px;height:12px;background:linear-gradient(#000 0,#000 11px,#a0a0a0 11px)"></div>
<div class="hm" style="left:269.63000000000005px;top:284.76px;color:#d2d2d2">B4</div>
<div style="left:286px;top:284px;width:17px;height:12px;background:linear-gradient(#000 0,#000 11px,#a0a0a0 11px)"></div>
<div class="hm" style="left:286.68px;top:284.76px;color:#d2d2d2">O8</div>
<div style="left:303px;top:284px;width:17px;height:12px;background:linear-gradient(#000 0,#000 11px,#a0a0a0 11px)"></div>
<div class="hm" style="left:303.73px;top:284.76px;color:#d2d2d2">19</div>
<div style="left:320px;top:284px;width:17px;height:12px;background:linear-gradient(#000 0,#000 11px,#a0a0a0 11px)"></div>
<div class="hm" style="left:320.78000000000003px;top:284.76px;color:#d2d2d2">44</div>
<div style="left:337px;top:284px;width:13px;height:12px;background:linear-gradient(#000 0,#000 11px,#a0a0a0 11px)"></div>
<div class="hm" style="left:337.83px;top:284.76px;color:#d2d2d2">92</div>
<div class="t" style="left:16.8px;top:297.13px;color:#4f4fe0;font-size:9.5px;transform:scaleX(1.08);transform-origin:0 0;-webkit-text-stroke:0">00000130</div>
<div style="left:75px;top:296px;width:17px;height:12px;background:linear-gradient(#000 0,#000 11px,#a0a0a0 11px)"></div>
<div class="hm" style="left:76.4px;top:296.93px;color:#d2d2d2">3A</div>
<div style="left:92px;top:296px;width:18px;height:12px;background:linear-gradient(#000 0,#000 11px,#a0a0a0 11px)"></div>
<div class="hm" style="left:93.45px;top:296.93px;color:#d2d2d2">1D</div>
<div style="left:110px;top:296px;width:17px;height:12px;background:linear-gradient(#000 0,#000 11px,#a0a0a0 11px)"></div>
<div class="hm" style="left:110.5px;top:296.93px;color:#d2d2d2">F7</div>
<div style="left:127px;top:296px;width:17px;height:12px;background:linear-gradient(#000 0,#000 11px,#a0a0a0 11px)"></div>
<div class="hm" style="left:127.55000000000001px;top:296.93px;color:#d2d2d2">63</div>
<div style="left:144px;top:296px;width:17px;height:12px;background:linear-gradient(#000 0,#000 11px,#a0a0a0 11px)"></div>
<div class="hm" style="left:144.60000000000002px;top:296.93px;color:#d2d2d2">EA</div>
<div style="left:161px;top:296px;width:17px;height:12px;background:linear-gradient(#000 0,#000 11px,#a0a0a0 11px)"></div>
<div class="hm" style="left:161.65px;top:296.93px;color:#d2d2d2">81</div>
<div style="left:178px;top:296px;width:17px;height:12px;background:linear-gradient(#000 0,#000 11px,#a0a0a0 11px)"></div>
<div class="hm" style="left:178.70000000000002px;top:296.93px;color:#d2d2d2">7O</div>
<div style="left:195px;top:296px;width:22px;height:12px;background:linear-gradient(#000 0,#000 11px,#a0a0a0 11px)"></div>
<div class="hm" style="left:195.75px;top:296.93px;color:#d2d2d2">73</div>
<div style="left:217px;top:296px;width:18px;height:12px;background:linear-gradient(#000 0,#000 11px,#a0a0a0 11px)"></div>
<div class="hm" style="left:218.48000000000002px;top:296.93px;color:#d2d2d2">FB</div>
<div style="left:235px;top:296px;width:17px;height:12px;background:linear-gradient(#000 0,#000 11px,#a0a0a0 11px)"></div>
<div class="hm" style="left:235.53000000000003px;top:296.93px;color:#d2d2d2">18</div>
<div style="left:252px;top:296px;width:17px;height:12px;background:linear-gradient(#000 0,#000 11px,#a0a0a0 11px)"></div>
<div class="hm" style="left:252.58px;top:296.93px;color:#d2d2d2">3B</div>
<div style="left:269px;top:296px;width:17px;height:12px;background:linear-gradient(#000 0,#000 11px,#a0a0a0 11px)"></div>
<div class="hm" style="left:269.63000000000005px;top:296.93px;color:#d2d2d2">E6</div>
<div style="left:286px;top:296px;width:17px;height:12px;background:linear-gradient(#000 0,#000 11px,#a0a0a0 11px)"></div>
<div class="hm" style="left:286.68px;top:296.93px;color:#d2d2d2">EF</div>
<div style="left:303px;top:296px;width:17px;height:12px;background:linear-gradient(#000 0,#000 11px,#a0a0a0 11px)"></div>
<div class="hm" style="left:303.73px;top:296.93px;color:#d2d2d2">CC</div>
<div style="left:320px;top:296px;width:17px;height:12px;background:linear-gradient(#000 0,#000 11px,#a0a0a0 11px)"></div>
<div class="hm" style="left:320.78000000000003px;top:296.93px;color:#d2d2d2">83</div>
<div style="left:337px;top:296px;width:13px;height:12px;background:linear-gradient(#000 0,#000 11px,#a0a0a0 11px)"></div>
<div class="hm" style="left:337.83px;top:296.93px;color:#d2d2d2">14</div>
<div class="t" style="left:16.8px;top:309.29999999999995px;color:#4f4fe0;font-size:9.5px;transform:scaleX(1.08);transform-origin:0 0;-webkit-text-stroke:0">00000140</div>
<div style="left:75px;top:308px;width:17px;height:12px;background:linear-gradient(#000 0,#000 12px,#a0a0a0 12px)"></div>
<div class="hm" style="left:76.4px;top:309.09999999999997px;color:#d2d2d2">79</div>
<div style="left:92px;top:308px;width:18px;height:12px;background:linear-gradient(#000 0,#000 12px,#a0a0a0 12px)"></div>
<div class="hm" style="left:93.45px;top:309.09999999999997px;color:#d2d2d2">3A</div>
<div style="left:110px;top:308px;width:17px;height:12px;background:linear-gradient(#000 0,#000 12px,#a0a0a0 12px)"></div>
<div class="hm" style="left:110.5px;top:309.09999999999997px;color:#d2d2d2">DA</div>
<div style="left:127px;top:308px;width:17px;height:12px;background:linear-gradient(#000 0,#000 12px,#a0a0a0 12px)"></div>
<div class="hm" style="left:127.55000000000001px;top:309.09999999999997px;color:#d2d2d2">FD</div>
<div style="left:144px;top:308px;width:17px;height:12px;background:linear-gradient(#000 0,#000 12px,#a0a0a0 12px)"></div>
<div class="hm" style="left:144.60000000000002px;top:309.09999999999997px;color:#d2d2d2">B1</div>
<div style="left:161px;top:308px;width:17px;height:12px;background:linear-gradient(#000 0,#000 12px,#a0a0a0 12px)"></div>
<div class="hm" style="left:161.65px;top:309.09999999999997px;color:#d2d2d2">FD</div>
<div style="left:178px;top:308px;width:17px;height:12px;background:linear-gradient(#000 0,#000 12px,#a0a0a0 12px)"></div>
<div class="hm" style="left:178.70000000000002px;top:309.09999999999997px;color:#d2d2d2">1F</div>
<div style="left:195px;top:308px;width:22px;height:12px;background:linear-gradient(#000 0,#000 12px,#a0a0a0 12px)"></div>
<div class="hm" style="left:195.75px;top:309.09999999999997px;color:#d2d2d2">C6</div>
<div style="left:217px;top:308px;width:18px;height:12px;background:linear-gradient(#000 0,#000 12px,#a0a0a0 12px)"></div>
<div class="hm" style="left:218.48000000000002px;top:309.09999999999997px;color:#d2d2d2">7E</div>
<div style="left:235px;top:308px;width:17px;height:12px;background:linear-gradient(#000 0,#000 12px,#a0a0a0 12px)"></div>
<div class="hm" style="left:235.53000000000003px;top:309.09999999999997px;color:#d2d2d2">8A</div>
<div style="left:252px;top:308px;width:17px;height:12px;background:linear-gradient(#000 0,#000 12px,#a0a0a0 12px)"></div>
<div class="hm" style="left:252.58px;top:309.09999999999997px;color:#d2d2d2">OF</div>
<div style="left:269px;top:308px;width:17px;height:12px;background:linear-gradient(#000 0,#000 12px,#a0a0a0 12px)"></div>
<div class="hm" style="left:269.63000000000005px;top:309.09999999999997px;color:#d2d2d2">B1</div>
<div style="left:286px;top:308px;width:17px;height:12px;background:linear-gradient(#000 0,#000 12px,#a0a0a0 12px)"></div>
<div class="hm" style="left:286.68px;top:309.09999999999997px;color:#d2d2d2">2C</div>
<div style="left:303px;top:308px;width:17px;height:12px;background:linear-gradient(#000 0,#000 12px,#a0a0a0 12px)"></div>
<div class="hm" style="left:303.73px;top:309.09999999999997px;color:#d2d2d2">O8</div>
<div style="left:320px;top:308px;width:17px;height:12px;background:linear-gradient(#000 0,#000 12px,#a0a0a0 12px)"></div>
<div class="hm" style="left:320.78000000000003px;top:309.09999999999997px;color:#d2d2d2">31</div>
<div style="left:337px;top:308px;width:13px;height:12px;background:linear-gradient(#000 0,#000 12px,#a0a0a0 12px)"></div>
<div class="hm" style="left:337.83px;top:309.09999999999997px;color:#d2d2d2">FC</div>
<div style="left:143px;top:77.17px;width:34.5px;height:11.3px;background:linear-gradient(90deg,#ffffff 0%,#ffffff 70%,#d8d8d8 100%)"></div>
<div style="left:143px;top:77.17px;width:34.5px;height:4px;background:linear-gradient(#cfcfcf,rgba(255,255,255,0))"></div>
<div class="hm" style="left:144.60000000000002px;top:77.87px;color:#3c3c3c">O5</div>
<div class="hm" style="left:161.65px;top:77.87px;color:#3c3c3c">OO</div>
<div style="left:180px;top:77.17px;width:3.6px;height:11.3px;background:#f4f000"></div>
<div class="hm" style="left:178.70000000000002px;top:77.87px;color:#303030">O</div>
<div style="left:104.8px;top:74.1px;width:75px;height:16px;border:2px solid #e8403b;box-sizing:border-box"></div>
<div style="left:355.5px;top:52.5px;width:2.5px;height:348px;background:#fff"></div>
<svg style="position:absolute;left:360.5px;top:57.5px" width="6" height="4" viewBox="0 0 6 4"><path d="M0.5 3.4 L3 0.9 L5.5 3.4" fill="none" stroke="#505050" stroke-width="1.5"/></svg>
<div style="left:357.8px;top:65px;width:11.2px;height:12px;background:#cdcdcd"></div>
<svg style="position:absolute;left:360.5px;top:392.5px" width="6" height="4" viewBox="0 0 6 4"><path d="M0.5 0.6 L3 3.1 L5.5 0.6" fill="none" stroke="#505050" stroke-width="1.5"/></svg>
<div style="left:7px;top:400.5px;width:347.5px;height:4.2px;background:#f0f0f0"></div>
<div style="left:19px;top:400.8px;width:252px;height:3.6px;background:#cbcbcb"></div>
<div class="t" style="left:376px;top:58.6429px;color:#0c0c0c;font-size:9.4px;transform:scaleX(0.904);transform-origin:0 0">Help w_Corrupt File.zip</div>
<div class="t" style="left:376px;top:70.44290000000001px;color:#0c0c0c;font-size:9.4px;transform:scaleX(0.904);transform-origin:0 0">C:\Users\derek\Downloads</div>
<div style="left:371px;top:85px;width:136px;height:1px;background:#dcdcdc"></div>
<div class="t" style="left:376px;top:90.5429px;color:#0c0c0c;font-size:9.4px;transform:scaleX(0.904);transform-origin:0 0">File size:</div>
<div class="t" style="right:522px;top:90.5429px;color:#2626a0;font-size:9.4px;transform:scaleX(0.904);transform-origin:100% 0">369 KB</div>
<div class="t" style="right:522px;top:103.0429px;color:#2626a0;font-size:9.4px;transform:scaleX(0.904);transform-origin:100% 0">377,696 bytes</div>
<div class="t" style="left:376px;top:115.0429px;color:#0c0c0c;font-size:9.4px;transform:scaleX(0.904);transform-origin:0 0">Without slack:</div>
<div class="t" style="right:522px;top:115.0429px;color:#2626a0;font-size:9.4px;transform:scaleX(0.904);transform-origin:100% 0">377,696 bytes</div>
<div style="left:371px;top:130px;width:136px;height:1px;background:#dcdcdc"></div>
<div class="t" style="left:376px;top:135.5429px;color:#339433;font-size:9.4px;transform:scaleX(0.904);transform-origin:0 0">Read-only mode</div>
<div style="left:371px;top:150.5px;width:136px;height:1px;background:#dcdcdc"></div>
<div class="t" style="left:376px;top:156.6429px;color:#0c0c0c;font-size:9.4px;transform:scaleX(0.904);transform-origin:0 0">Creation time:</div>
<div class="t" style="right:522px;top:156.6429px;color:#2626a0;font-size:9.4px;transform:scaleX(0.904);transform-origin:100% 0">02/17/2022</div>
<div class="t" style="right:522px;top:168.6429px;color:#2626a0;font-size:9.4px;transform:scaleX(0.904);transform-origin:100% 0">00:08:54</div>
<div class="t" style="left:376px;top:185.0429px;color:#0c0c0c;font-size:9.4px;transform:scaleX(0.904);transform-origin:0 0">Last write time:</div>
<div class="t" style="right:522px;top:185.0429px;color:#2626a0;font-size:9.4px;transform:scaleX(0.904);transform-origin:100% 0">02/17/2022</div>
<div class="t" style="right:522px;top:197.0429px;color:#2626a0;font-size:9.4px;transform:scaleX(0.904);transform-origin:100% 0">00:08:57</div>
<div class="t" style="left:376px;top:213.7429px;color:#0c0c0c;font-size:9.4px;transform:scaleX(0.904);transform-origin:0 0">Last access time:</div>
<div class="t" style="right:522px;top:213.7429px;color:#2626a0;font-size:9.4px;transform:scaleX(0.904);transform-origin:100% 0">02/17/2022</div>
<div class="t" style="right:522px;top:225.6429px;color:#2626a0;font-size:9.4px;transform:scaleX(0.904);transform-origin:100% 0">00:08:57</div>
<div class="t" style="left:376px;top:242.34290000000001px;color:#0c0c0c;font-size:9.4px;transform:scaleX(0.904);transform-origin:0 0">Attributes:</div>
<div class="t" style="right:522px;top:242.34290000000001px;color:#2626a0;font-size:9.4px;transform:scaleX(0.904);transform-origin:100% 0">A</div>
<div style="left:371px;top:257.5px;width:136px;height:1px;background:#dcdcdc"></div>
<div class="t" style="left:376px;top:262.74289999999996px;color:#0c0c0c;font-size:9.4px;transform:scaleX(0.904);transform-origin:0 0">Display time zone:</div>
<div class="t" style="right:522px;top:262.74289999999996px;color:#2626a0;font-size:9.4px;transform:scaleX(0.904);transform-origin:100% 0">UTC</div>
<div class="t" style="left:376px;top:274.6429px;color:#0c0c0c;font-size:9.4px;transform:scaleX(0.904);transform-origin:0 0">Mode:</div>
<div class="t" style="right:522px;top:274.6429px;color:#2626a0;font-size:9.4px;transform:scaleX(0.904);transform-origin:100% 0">hexadecimal</div>
<div class="t" style="left:376px;top:286.6429px;color:#0c0c0c;font-size:9.4px;transform:scaleX(0.904);transform-origin:0 0">Offsets:</div>
<div class="t" style="right:522px;top:286.6429px;color:#2626a0;font-size:9.4px;transform:scaleX(0.904);transform-origin:100% 0">hexadecimal</div>
<div class="t" style="left:376px;top:298.6429px;color:#0c0c0c;font-size:9.4px;transform:scaleX(0.904);transform-origin:0 0">Bytes per page:</div>
<div class="t" style="right:522px;top:298.6429px;color:#2626a0;font-size:9.4px;transform:scaleX(0.904);transform-origin:100% 0">28x16=448</div>
<div class="t" style="left:376px;top:315.6429px;color:#0c0c0c;font-size:9.4px;transform:scaleX(0.904);transform-origin:0 0">Window #:</div>
<div class="t" style="right:522px;top:315.6429px;color:#2626a0;font-size:9.4px;transform:scaleX(0.904);transform-origin:100% 0">2</div>
<div class="t" style="left:376px;top:327.6429px;color:#0c0c0c;font-size:9.4px;transform:scaleX(0.904);transform-origin:0 0">Window count:</div>
<div class="t" style="right:522px;top:327.6429px;color:#2626a0;font-size:9.4px;transform:scaleX(0.904);transform-origin:100% 0">2</div>
<div class="t" style="left:376px;top:339.6429px;color:#0c0c0c;font-size:9.4px;transform:scaleX(0.904);transform-origin:0 0">Case association:</div>
<div class="t" style="right:522px;top:339.6429px;color:#2626a0;font-size:9.4px;transform:scaleX(0.904);transform-origin:100% 0">Yes</div>
<div style="left:371px;top:355.5px;width:136px;height:1px;background:#dcdcdc"></div>
<div class="t" style="left:376px;top:360.6429px;color:#0c0c0c;font-size:9.4px;transform:scaleX(0.904);transform-origin:0 0">Clipboard:</div>
<div class="t" style="right:522px;top:360.6429px;color:#2626a0;font-size:9.4px;transform:scaleX(0.904);transform-origin:100% 0">available</div>
<div class="t" style="left:376px;top:376.3429px;color:#0c0c0c;font-size:9.4px;transform:scaleX(0.904);transform-origin:0 0">TEMP folder:</div>
<div class="t" style="right:522px;top:376.3429px;color:#2626a0;font-size:9.4px;transform:scaleX(0.904);transform-origin:100% 0">931 GB free</div>
<div class="t" style="right:522px;top:388.0429px;color:#2626a0;font-size:9.4px;transform:scaleX(0.904);transform-origin:100% 0">E:\XWF TEMP</div>
<div style="left:507.5px;top:52.5px;width:1px;height:352px;background:#a8a8a8"></div>
<div style="left:515px;top:16.0px;width:508px;height:390px;background:#d7e4f2;border-top-left-radius:5px;border:1px solid #8c8c8c;border-top-color:#a4a4a4;border-bottom:none;border-right:none;box-sizing:border-box"></div>
<div style="left:516px;top:17.0px;width:506px;height:21.8px;background:linear-gradient(#e4ecf5 0,#c5d6e8 1.2px,#cddcec 45%,#d7e4f2);border-top-left-radius:4px"></div>
<div style="left:1021px;top:0px;width:1px;height:406px;background:#a6a6a6"></div>
<div style="left:0;top:-0.8px;width:1023px;height:406px">
<svg style="position:absolute;left:522.5px;top:26.8px" width="12" height="7" viewBox="0 0 12 7"><path d="M0.2 3.7 L2.6 0.8 L5.6 0.2 L9.6 1.3 L11.6 3.3 L11.1 5.2 L6.6 6.8 L1.6 5.8 Z" fill="#5a5a5a"/><path d="M0.2 3.7 L2.6 0.8 L5.6 0.2 L9.6 1.3 L7.2 4.1 L1.6 4.4 Z" fill="#e2e2e2"/><path d="M7.2 4.1 L9.6 1.3 L11.6 3.3 L11.1 5.2 L6.6 6.8 Z" fill="#34404a"/><path d="M0.2 3.7 L1.6 4.4 L7.2 4.1 L6.6 6.8 L1.6 5.8 Z" fill="#858585"/></svg>
<div class="t" style="left:537px;top:25.839999999999996px;color:#8f959c;font-size:9.4px;transform:scaleX(0.904);transform-origin:0 0">GOAT.zip</div>
<div style="left:947.5px;top:23.3px;width:21.8px;height:13.1px;background:linear-gradient(#d6e2ef,#cbd9e9 50%,#c6d5e6 51%,#d0dded);border:1px solid #8da2bb;border-radius:2.5px;box-sizing:border-box"></div>
<div style="left:971.8px;top:23.3px;width:21.8px;height:13.1px;background:linear-gradient(#d6e2ef,#cbd9e9 50%,#c6d5e6 51%,#d0dded);border:1px solid #8da2bb;border-radius:2.5px;box-sizing:border-box"></div>
<div style="left:996.0px;top:23.3px;width:22px;height:13.1px;background:linear-gradient(#d6e2ef,#cbd9e9 50%,#c6d5e6 51%,#d0dded);border:1px solid #8da2bb;border-radius:2.5px;box-sizing:border-box"></div>
<div style="left:954.1px;top:29.200000000000003px;width:7.8px;height:3.4px;background:#fafafa;border:1px solid #5a5a5a;border-radius:1.2px;box-sizing:border-box"></div>
<div style="left:978.8px;top:26.0px;width:7.5px;height:6.5px;background:#fafafa;border:1px solid #5a5a5a;border-radius:1px;box-sizing:border-box"></div>
<div style="left:980.5999999999999px;top:27.9px;width:3.9px;height:2.7px;background:#7f93aa"></div>
<svg style="position:absolute;left:1003.0px;top:25.900000000000002px" width="8" height="7" viewBox="0 0 8 7"><path d="M1.2 1 L6.8 6 M6.8 1 L1.2 6" stroke="#5a5a5a" stroke-width="2.6" stroke-linecap="round"/><path d="M1.2 1 L6.8 6 M6.8 1 L1.2 6" stroke="#f4f4f4" stroke-width="1.3" stroke-linecap="round"/></svg>
<div style="left:521px;top:38.5px;width:499px;height:367.5px;background:#f0f0f0"></div>
<div style="left:524.5px;top:41.5px;width:1px;height:1px;background:#cdcdcd"></div>
<div style="left:524.5px;top:45px;width:1px;height:1px;background:#cdcdcd"></div>
<div style="left:524.5px;top:48.5px;width:1px;height:1px;background:#cdcdcd"></div>
<div style="left:531px;top:39.5px;width:54px;height:12.8px;background:linear-gradient(#f8f8f8,#ececec);border-left:1px solid #fff;border-right:1px solid #dedede;border-bottom:1px solid #cfcfcf;box-sizing:border-box"></div>
<div class="t" style="left:550.5px;top:40.64px;color:#1a1a1a;font-size:9.4px;transform:scaleX(0.904);transform-origin:0 0">Volume</div>
<svg style="position:absolute;left:535.2px;top:41.8px" width="12" height="7" viewBox="0 0 12 7"><path d="M0.2 3.7 L2.6 0.8 L5.6 0.2 L9.6 1.3 L11.6 3.3 L11.1 5.2 L6.6 6.8 L1.6 5.8 Z" fill="#5a5a5a"/><path d="M0.2 3.7 L2.6 0.8 L5.6 0.2 L9.6 1.3 L7.2 4.1 L1.6 4.4 Z" fill="#e2e2e2"/><path d="M7.2 4.1 L9.6 1.3 L11.6 3.3 L11.1 5.2 L6.6 6.8 Z" fill="#34404a"/><path d="M0.2 3.7 L1.6 4.4 L7.2 4.1 L6.6 6.8 L1.6 5.8 Z" fill="#858585"/></svg>
<div style="left:585.5px;top:39.5px;width:50.0px;height:12.8px;background:#e9e9e9;border-top:1px solid #d6d6d6;border-left:1px solid #dadada;box-sizing:border-box"></div>
<div class="t" style="left:611.5px;top:40.64px;color:#1a1a1a;font-size:9.4px;transform:scaleX(0.904);transform-origin:0 0">File</div>
<svg style="position:absolute;left:599.0px;top:40.5px" width="9" height="12" viewBox="0 0 9 12" ><path d="M0.6 0.6 H5.8 L8.4 3.2 V11.4 H0.6 Z" fill="#fdfdfd" stroke="#8a8a8a" stroke-width="0.9"/><path d="M5.8 0.6 V3.2 H8.4" fill="#e0e0e0" stroke="#9a9a9a" stroke-width="0.7"/></svg>
<div style="left:636px;top:39.5px;width:55.5px;height:12.8px;background:linear-gradient(#f8f8f8,#ececec);border-left:1px solid #fff;border-right:1px solid #dedede;border-bottom:1px solid #cfcfcf;box-sizing:border-box"></div>
<div class="t" style="left:656px;top:40.64px;color:#1a1a1a;font-size:9.4px;transform:scaleX(0.904);transform-origin:0 0">Preview</div>
<svg style="position:absolute;left:642.5px;top:41px" width="10" height="8" viewBox="0 0 10 8" ><defs><linearGradient id="pv" x1="0" y1="0" x2="0" y2="1"><stop offset="0" stop-color="#3d7ed0"/><stop offset="0.35" stop-color="#b9d9f2"/><stop offset="0.6" stop-color="#6d95b5"/><stop offset="1" stop-color="#1d3d5d"/></linearGradient></defs><rect x="0.5" y="0.5" width="9" height="7" fill="url(#pv)" stroke="#a4a4a4" stroke-width="1"/></svg>
<div style="left:692.3px;top:39.5px;width:49.69999999999999px;height:12.8px;background:linear-gradient(#f8f8f8,#ececec);border-left:1px solid #fff;border-right:1px solid #dedede;border-bottom:1px solid #cfcfcf;box-sizing:border-box"></div>
<div class="t" style="left:711px;top:40.64px;color:#1a1a1a;font-size:9.4px;transform:scaleX(0.904);transform-origin:0 0">Details</div>
<svg style="position:absolute;left:697.0px;top:40px" width="11" height="11" viewBox="0 0 11 11" ><rect x="1" y="0.5" width="9.5" height="8.5" fill="#dbeaf7" stroke="#7d94ad" stroke-width="0.8"/><rect x="1" y="0.5" width="9.5" height="1.6" fill="#2f7fc4"/><circle cx="5.8" cy="5.3" r="2.7" fill="#eef6fc" stroke="#8fa8c0" stroke-width="0.9"/><path d="M3.8 7.3 L1 10.4" stroke="#c98a3a" stroke-width="1.4"/></svg>
<div style="left:742.5px;top:39.5px;width:52.0px;height:12.8px;background:linear-gradient(#f8f8f8,#ececec);border-left:1px solid #fff;border-right:1px solid #dedede;border-bottom:1px solid #cfcfcf;box-sizing:border-box"></div>
<div class="t" style="left:762px;top:40.64px;color:#1a1a1a;font-size:9.4px;transform:scaleX(0.904);transform-origin:0 0">Gallery</div>
<svg style="position:absolute;left:748.0px;top:40.7px" width="11" height="9" viewBox="0 0 11 9" ><rect x="0.4" y="0.4" width="4.6" height="3.9" fill="#eef2f6" stroke="#b4b4b4" stroke-width="0.7"/><rect x="5.8" y="0.4" width="4.6" height="3.9" fill="#eef2f6" stroke="#b4b4b4" stroke-width="0.7"/><rect x="0.4" y="4.8" width="4.6" height="3.9" fill="#eef2f6" stroke="#b4b4b4" stroke-width="0.7"/><rect x="5.8" y="4.8" width="4.6" height="3.9" fill="#eef2f6" stroke="#b4b4b4" stroke-width="0.7"/><path d="M1.2 3.2 L3.5 1.5" stroke="#3a78c0" stroke-width="0.9"/><path d="M6.6 3 L9 2" stroke="#6aa040" stroke-width="0.9"/><path d="M1.2 7.2 L4 6.4" stroke="#d03030" stroke-width="1.1"/><path d="M6.6 7.3 L9.2 6" stroke="#d08a20" stroke-width="1"/></svg>
<div style="left:795px;top:39.5px;width:53.5px;height:12.8px;background:linear-gradient(#f8f8f8,#ececec);border-left:1px solid #fff;border-right:1px solid #dedede;border-bottom:1px solid #cfcfcf;box-sizing:border-box"></div>
<div class="t" style="left:812px;top:40.64px;color:#1a1a1a;font-size:9.4px;transform:scaleX(0.904);transform-origin:0 0">Calendar</div>
<svg style="position:absolute;left:797.3px;top:40px" width="12" height="11" viewBox="0 0 12 11" ><rect x="0.4" y="0.4" width="11.2" height="10.2" rx="1.2" fill="#4f7fc6" stroke="#5b7aa8" stroke-width="0.7"/><rect x="0.8" y="0.8" width="10.4" height="2" fill="#2c5aa6"/><rect x="1.6" y="3.8" width="1.1" height="1" fill="#ffffff"/><rect x="1.6" y="5.8" width="1.1" height="1" fill="#ffffff"/><rect x="1.6" y="7.8" width="1.1" height="1" fill="#ffffff"/><rect x="3.8" y="3.8" width="1.1" height="1" fill="#ffffff"/><rect x="3.8" y="5.8" width="1.1" height="1" fill="#ffffff"/><rect x="3.8" y="7.8" width="1.1" height="1" fill="#ffffff"/><rect x="6.0" y="3.8" width="1.1" height="1" fill="#ffffff"/><rect x="6.0" y="5.8" width="1.1" height="1" fill="#ffffff"/><rect x="6.0" y="7.8" width="1.1" height="1" fill="#ffffff"/><rect x="8.2" y="3.8" width="1.1" height="1" fill="#ffffff"/><rect x="8.2" y="5.8" width="1.1" height="1" fill="#ffffff"/><rect x="8.2" y="7.8" width="1.1" height="1" fill="#ffffff"/><rect x="10.4" y="3.8" width="1.1" height="1" fill="#ffffff"/><rect x="10.4" y="5.8" width="1.1" height="1" fill="#ffffff"/><rect x="10.4" y="7.8" width="1.1" height="1" fill="#ffffff"/><rect x="7.3" y="5.6" width="3.6" height="2.2" rx="0.8" fill="#e04848"/></svg>
<div style="left:850px;top:39.5px;width:51.5px;height:12.8px;background:linear-gradient(#f8f8f8,#ececec);border-left:1px solid #fff;border-right:1px solid #dedede;border-bottom:1px solid #cfcfcf;box-sizing:border-box"></div>
<div class="t" style="left:868.5px;top:40.64px;color:#1a1a1a;font-size:9.4px;transform:scaleX(0.904);transform-origin:0 0">Legend</div>
<svg style="position:absolute;left:853.3px;top:40.5px" width="15" height="10" viewBox="0 0 15 10" ><rect x="0.5" y="0.4" width="2.8" height="9.2" fill="#f4f4f4" stroke="#b0b0b0" stroke-width="0.6"/><rect x="1.2" y="4.5" width="1.5" height="1.2" fill="#5aa0e0"/><rect x="1.2" y="7.4" width="1.5" height="1.2" fill="#e05050"/><path d="M4.8 2 H7.3 M8.6 2 H11 M4.8 5 H7.3 M8.6 5 H11 M4.8 8 H7.3 M8.6 8 H11" stroke="#8c8c8c" stroke-width="1"/></svg>
<div style="left:902px;top:39.5px;width:18.5px;height:12.8px;background:linear-gradient(#f8f8f8,#ececec);border-left:1px solid #fff;border-right:1px solid #dedede;border-bottom:1px solid #cfcfcf;box-sizing:border-box"></div>
<div style="left:921px;top:39.5px;width:27.5px;height:12.8px;background:linear-gradient(#f8f8f8,#ececec);border-left:1px solid #fff;border-right:1px solid #dedede;border-bottom:1px solid #cfcfcf;box-sizing:border-box"></div>
<svg style="position:absolute;left:928px;top:40px" width="12" height="11" viewBox="0 0 12 11" ><rect x="1.5" y="1.2" width="9.5" height="7.8" fill="#e9eef3" stroke="#f2e4b0" stroke-width="1"/><circle cx="6" cy="5.5" r="2.6" fill="#d9e8f2" stroke="#c6d8e6" stroke-width="0.9"/><path d="M4 7.6 L1.2 10.4" stroke="#f0dca8" stroke-width="1.2"/></svg>
<div style="left:949px;top:39.5px;width:27px;height:12.8px;background:#e9e9e9;border-top:1px solid #d6d6d6;border-left:1px solid #dadada;box-sizing:border-box"></div>
<div class="t" style="left:954px;top:40.64px;color:#1a1a1a;font-size:9.4px;transform:scaleX(0.904);transform-origin:0 0">Sync</div>
<div style="left:977px;top:39.5px;width:28px;height:12.8px;background:linear-gradient(#f8f8f8,#ececec);border-left:1px solid #fff;border-right:1px solid #dedede;border-bottom:1px solid #cfcfcf;box-sizing:border-box"></div>
<svg style="position:absolute;left:985px;top:42.5px" width="12" height="6" viewBox="0 0 12 6" ><path d="M0.5 1.2 L1.8 0.9 L3.2 1.6 L4.5 1.1 L6 2.3 L7.3 1.8 L8.8 3.4" fill="none" stroke="#6cc4d0" stroke-width="0.8"/><rect x="8.6" y="3" width="2.6" height="2.4" fill="#178aa0"/></svg>
<svg style="position:absolute;left:1009.0px;top:39.8px" width="12" height="12" viewBox="0 0 12 12" ><defs><linearGradient id="bn" x1="0" y1="0" x2="1" y2="0"><stop offset="0" stop-color="#4b4fa8"/><stop offset="0.45" stop-color="#a6aaf0"/><stop offset="1" stop-color="#3f4396"/></linearGradient></defs><path d="M0.3 11.6 L0.6 5 L1.8 1 L4.6 1 L5.4 5 L5.4 11.6 Z" fill="url(#bn)"/><path d="M11.7 11.6 L11.4 5 L10.2 1 L7.4 1 L6.6 5 L6.6 11.6 Z" fill="url(#bn)"/><rect x="5" y="4.5" width="2" height="2.5" fill="#2e3280"/><rect x="0.4" y="9.6" width="5" height="2" fill="#3a3e8c"/><rect x="6.6" y="9.6" width="5" height="2" fill="#3a3e8c"/></svg>
<div style="left:1022px;top:42px;width:1px;height:1px;background:#a8c0a0"></div>
<div style="left:1022px;top:45px;width:1px;height:1px;background:#a8c0a0"></div>
<div style="left:1022px;top:48px;width:1px;height:1px;background:#a8c0a0"></div>
<div style="left:521px;top:52.5px;width:347.5px;height:348px;background:#ffffff"></div>
<div style="left:521px;top:64px;width:347.5px;height:1px;background:#d4d4d4"></div>
<div style="left:585px;top:52.5px;width:1px;height:348px;background:#cfcfcf"></div>
<div style="left:868.5px;top:52.5px;width:1px;height:348px;background:#dadada"></div>
<div class="hm hb" style="left:536px;top:53.1px;color:#3a3ad6;">Offset</div>
<div class="hm hb" style="left:596.0799999999999px;top:53.1px;color:#3a3ad6;">O</div>
<div class="hm hb" style="left:613.1299999999999px;top:53.1px;color:#3a3ad6;">1</div>
<div class="hm hb" style="left:630.18px;top:53.1px;color:#3a3ad6;">2</div>
<div class="hm hb" style="left:647.2299999999999px;top:53.1px;color:#3a3ad6;">3</div>
<div class="hm hb" style="left:664.28px;top:53.1px;color:#3a3ad6;">4</div>
<div class="hm hb" style="left:681.3299999999999px;top:53.1px;color:#3a3ad6;">5</div>
<div class="hm hb" style="left:698.38px;top:53.1px;color:#3a3ad6;">6</div>
<div class="hm hb" style="left:715.43px;top:53.1px;color:#3a3ad6;">7</div>
<div class="hm hb" style="left:738.1599999999999px;top:53.1px;color:#3a3ad6;">8</div>
<div class="hm hb" style="left:755.2099999999999px;top:53.1px;color:#3a3ad6;">9</div>
<div class="hm hb" style="left:772.2599999999999px;top:53.1px;color:#3a3ad6;">A</div>
<div class="hm hb" style="left:789.31px;top:53.1px;color:#3a3ad6;">B</div>
<div class="hm hb" style="left:806.3599999999999px;top:53.1px;color:#3a3ad6;">C</div>
<div class="hm hb" style="left:823.4099999999999px;top:53.1px;color:#3a3ad6;">D</div>
<div class="hm hb" style="left:840.4599999999999px;top:53.1px;color:#3a3ad6;">E</div>
<div class="hm hb" style="left:857.5099999999999px;top:53.1px;color:#3a3ad6;">F</div>
<div style="left:522px;top:53px;width:12.5px;height:13px;background:#c8c8c8"></div>
<div style="left:536px;top:53px;width:12.5px;height:13px;background:#c8c8c8"></div>
<svg style="position:absolute;left:522px;top:53.5px" width="13" height="12" viewBox="0 0 13 12"><path d="M0.5 6 L6 1 V4 H12 V8 H6 V11 Z" fill="#19b0cc"/><path d="M6 6 H12 V8 H6 V11 L0.5 6Z" fill="#1486b8"/></svg>
<svg style="position:absolute;left:536px;top:53.5px" width="13" height="12" viewBox="0 0 13 12"><path d="M12.5 6 L7 1 V4 H1 V8 H7 V11 Z" fill="#19b0cc"/><path d="M7 6 H1 V8 H7 V11 L12.5 6Z" fill="#1486b8"/></svg>
<div class="t" style="left:530.8px;top:65.9px;color:#4f4fe0;font-size:9.5px;transform:scaleX(1.08);transform-origin:0 0;-webkit-text-stroke:0">00000000</div>
<div style="left:589.1px;top:65.0px;width:17.55px;height:11.3px;background:#e3f3fc"></div>
<div class="hm" style="left:590.4px;top:65.7px;color:#4a4a4a">5O</div>
<div style="left:606.15px;top:65.0px;width:17.55px;height:11.3px;background:#e3f3fc"></div>
<div class="hm" style="left:607.4499999999999px;top:65.7px;color:#4a4a4a">4B</div>
<div style="left:623.2px;top:65.0px;width:17.55px;height:11.3px;background:#e3f3fc"></div>
<div class="hm" style="left:624.5px;top:65.7px;color:#4a4a4a">O3</div>
<div style="left:640.25px;top:65.0px;width:12.5px;height:11.3px;background:#e3f3fc"></div>
<div class="hm" style="left:641.55px;top:65.7px;color:#4a4a4a">O4</div>
<div class="hm" style="left:658.6px;top:65.7px;color:#4a4a4a">14</div>
<div class="hm" style="left:675.65px;top:65.7px;color:#4a4a4a">OO</div>
<div class="hm" style="left:692.7px;top:65.7px;color:#4a4a4a">OO</div>
<div class="hm" style="left:709.75px;top:65.7px;color:#4a4a4a">OO</div>
<div class="hm" style="left:732.4799999999999px;top:65.7px;color:#4a4a4a">O8</div>
<div class="hm" style="left:749.53px;top:65.7px;color:#4a4a4a">OO</div>
<div style="left:766px;top:65px;width:17px;height:12px;background:linear-gradient(#000 0,#000 11px,#a0a0a0 11px)"></div>
<div class="hm" style="left:766.5799999999999px;top:65.7px;color:#d2d2d2">F5</div>
<div style="left:783px;top:65px;width:17px;height:12px;background:linear-gradient(#000 0,#000 11px,#a0a0a0 11px)"></div>
<div class="hm" style="left:783.63px;top:65.7px;color:#d2d2d2">7B</div>
<div class="hm" style="left:800.68px;top:65.7px;color:#4a4a4a">4F</div>
<div class="hm" style="left:817.7299999999999px;top:65.7px;color:#4a4a4a">54</div>
<div style="left:834px;top:65px;width:17px;height:12px;background:linear-gradient(#000 0,#000 11px,#a0a0a0 11px)"></div>
<div class="hm" style="left:834.78px;top:65.7px;color:#d2d2d2">27</div>
<div style="left:851px;top:65px;width:13px;height:12px;background:linear-gradient(#000 0,#000 11px,#a0a0a0 11px)"></div>
<div class="hm" style="left:851.8299999999999px;top:65.7px;color:#d2d2d2">FA</div>
<div class="t" style="left:530.8px;top:78.07000000000001px;color:#4f4fe0;font-size:9.5px;transform:scaleX(1.08);transform-origin:0 0;-webkit-text-stroke:0">00000010</div>
<div style="left:589px;top:77px;width:17px;height:12px;background:linear-gradient(#000 0,#000 11px,#a0a0a0 11px)"></div>
<div class="hm" style="left:590.4px;top:77.87px;color:#d2d2d2">CA</div>
<div style="left:606px;top:77px;width:18px;height:12px;background:linear-gradient(#000 0,#000 11px,#a0a0a0 11px)"></div>
<div class="hm" style="left:607.4499999999999px;top:77.87px;color:#d2d2d2">9O</div>
<div style="left:624px;top:77px;width:17px;height:12px;background:linear-gradient(#000 0,#000 11px,#a0a0a0 11px)"></div>
<div class="hm" style="left:624.5px;top:77.87px;color:#d2d2d2">OO</div>
<div style="left:641px;top:77px;width:17px;height:12px;background:linear-gradient(#000 0,#000 11px,#a0a0a0 11px)"></div>
<div class="hm" style="left:641.55px;top:77.87px;color:#d2d2d2">OO</div>
<div class="hm" style="left:658.6px;top:77.87px;color:#4a4a4a">O5</div>
<div class="hm" style="left:675.65px;top:77.87px;color:#4a4a4a">OO</div>
<div style="left:692px;top:77px;width:17px;height:12px;background:linear-gradient(#000 0,#000 11px,#a0a0a0 11px)"></div>
<div class="hm" style="left:692.7px;top:77.87px;color:#d2d2d2">11</div>
<div style="left:709px;top:77px;width:22px;height:12px;background:linear-gradient(#000 0,#000 11px,#a0a0a0 11px)"></div>
<div class="hm" style="left:709.75px;top:77.87px;color:#d2d2d2">2F</div>
<div style="left:731px;top:77px;width:18px;height:12px;background:linear-gradient(#000 0,#000 11px,#a0a0a0 11px)"></div>
<div class="hm" style="left:732.4799999999999px;top:77.87px;color:#d2d2d2">O7</div>
<div class="hm" style="left:749.53px;top:77.87px;color:#4a4a4a">OO</div>
<div style="left:766px;top:77px;width:17px;height:12px;background:linear-gradient(#000 0,#000 11px,#a0a0a0 11px)"></div>
<div class="hm" style="left:766.5799999999999px;top:77.87px;color:#d2d2d2">O8</div>
<div class="hm" style="left:783.63px;top:77.87px;color:#4a4a4a">OO</div>
<div class="hm" style="left:800.68px;top:77.87px;color:#4a4a4a">OO</div>
<div class="hm" style="left:817.7299999999999px;top:77.87px;color:#4a4a4a">OO</div>
<div style="left:834px;top:77px;width:17px;height:12px;background:linear-gradient(#000 0,#000 11px,#a0a0a0 11px)"></div>
<div class="hm" style="left:834.78px;top:77.87px;color:#d2d2d2">47</div>
<div style="left:851px;top:77px;width:13px;height:12px;background:linear-gradient(#000 0,#000 11px,#a0a0a0 11px)"></div>
<div class="hm" style="left:851.8299999999999px;top:77.87px;color:#d2d2d2">4F</div>
<div class="t" style="left:530.8px;top:90.24000000000001px;color:#4f4fe0;font-size:9.5px;transform:scaleX(1.08);transform-origin:0 0;-webkit-text-stroke:0">00000020</div>
<div style="left:589px;top:89px;width:17px;height:13px;background:linear-gradient(#000 0,#000 12px,#a0a0a0 12px)"></div>
<div class="hm" style="left:590.4px;top:90.04px;color:#d2d2d2">41</div>
<div style="left:606px;top:89px;width:18px;height:13px;background:linear-gradient(#000 0,#000 12px,#a0a0a0 12px)"></div>
<div class="hm" style="left:607.4499999999999px;top:90.04px;color:#d2d2d2">54</div>
<div style="left:624px;top:89px;width:17px;height:13px;background:linear-gradient(#000 0,#000 12px,#a0a0a0 12px)"></div>
<div class="hm" style="left:624.5px;top:90.04px;color:#d2d2d2">2E</div>
<div style="left:641px;top:89px;width:17px;height:13px;background:linear-gradient(#000 0,#000 12px,#a0a0a0 12px)"></div>
<div class="hm" style="left:641.55px;top:90.04px;color:#d2d2d2">7O</div>
<div style="left:658px;top:89px;width:17px;height:13px;background:linear-gradient(#000 0,#000 12px,#a0a0a0 12px)"></div>
<div class="hm" style="left:658.6px;top:90.04px;color:#d2d2d2">64</div>
<div style="left:675px;top:89px;width:17px;height:13px;background:linear-gradient(#000 0,#000 12px,#a0a0a0 12px)"></div>
<div class="hm" style="left:675.65px;top:90.04px;color:#d2d2d2">66</div>
<div style="left:692px;top:89px;width:17px;height:13px;background:linear-gradient(#000 0,#000 12px,#a0a0a0 12px)"></div>
<div class="hm" style="left:692.7px;top:90.04px;color:#d2d2d2">EC</div>
<div style="left:709px;top:89px;width:22px;height:13px;background:linear-gradient(#000 0,#000 12px,#a0a0a0 12px)"></div>
<div class="hm" style="left:709.75px;top:90.04px;color:#d2d2d2">5C</div>
<div style="left:731px;top:89px;width:18px;height:13px;background:linear-gradient(#000 0,#000 12px,#a0a0a0 12px)"></div>
<div class="hm" style="left:732.4799999999999px;top:90.04px;color:#d2d2d2">69</div>
<div style="left:749px;top:89px;width:17px;height:13px;background:linear-gradient(#000 0,#000 12px,#a0a0a0 12px)"></div>
<div class="hm" style="left:749.53px;top:90.04px;color:#d2d2d2">5C</div>
<div style="left:766px;top:89px;width:17px;height:13px;background:linear-gradient(#000 0,#000 12px,#a0a0a0 12px)"></div>
<div class="hm" style="left:766.5799999999999px;top:90.04px;color:#d2d2d2">53</div>
<div style="left:783px;top:89px;width:17px;height:13px;background:linear-gradient(#000 0,#000 12px,#a0a0a0 12px)"></div>
<div class="hm" style="left:783.63px;top:90.04px;color:#d2d2d2">57</div>
<div style="left:800px;top:89px;width:17px;height:13px;background:linear-gradient(#000 0,#000 12px,#a0a0a0 12px)"></div>
<div class="hm" style="left:800.68px;top:90.04px;color:#d2d2d2">16</div>
<div style="left:817px;top:89px;width:17px;height:13px;background:linear-gradient(#000 0,#000 12px,#a0a0a0 12px)"></div>
<div class="hm" style="left:817.7299999999999px;top:90.04px;color:#d2d2d2">C7</div>
<div style="left:834px;top:89px;width:17px;height:13px;background:linear-gradient(#000 0,#000 12px,#a0a0a0 12px)"></div>
<div class="hm" style="left:834.78px;top:90.04px;color:#d2d2d2">BO</div>
<div style="left:851px;top:89px;width:13px;height:13px;background:linear-gradient(#000 0,#000 12px,#a0a0a0 12px)"></div>
<div class="hm" style="left:851.8299999999999px;top:90.04px;color:#d2d2d2">O8</div>
<div class="t" style="left:530.8px;top:102.41px;color:#4f4fe0;font-size:9.5px;transform:scaleX(1.08);transform-origin:0 0;-webkit-text-stroke:0">00000030</div>
<div style="left:589px;top:102px;width:17px;height:12px;background:linear-gradient(#000 0,#000 11px,#a0a0a0 11px)"></div>
<div class="hm" style="left:590.4px;top:102.21px;color:#d2d2d2">O1</div>
<div style="left:606px;top:102px;width:18px;height:12px;background:linear-gradient(#000 0,#000 11px,#a0a0a0 11px)"></div>
<div class="hm" style="left:607.4499999999999px;top:102.21px;color:#d2d2d2">54</div>
<div style="left:624px;top:102px;width:17px;height:12px;background:linear-gradient(#000 0,#000 11px,#a0a0a0 11px)"></div>
<div class="hm" style="left:624.5px;top:102.21px;color:#d2d2d2">3O</div>
<div style="left:641px;top:102px;width:17px;height:12px;background:linear-gradient(#000 0,#000 11px,#a0a0a0 11px)"></div>
<div class="hm" style="left:641.55px;top:102.21px;color:#d2d2d2">41</div>
<div style="left:658px;top:102px;width:17px;height:12px;background:linear-gradient(#000 0,#000 11px,#a0a0a0 11px)"></div>
<div class="hm" style="left:658.6px;top:102.21px;color:#d2d2d2">54</div>
<div style="left:675px;top:102px;width:17px;height:12px;background:linear-gradient(#000 0,#000 11px,#a0a0a0 11px)"></div>
<div class="hm" style="left:675.65px;top:102.21px;color:#d2d2d2">AC</div>
<div style="left:692px;top:102px;width:17px;height:12px;background:linear-gradient(#000 0,#000 11px,#a0a0a0 11px)"></div>
<div class="hm" style="left:692.7px;top:102.21px;color:#d2d2d2">88</div>
<div style="left:709px;top:102px;width:22px;height:12px;background:linear-gradient(#000 0,#000 11px,#a0a0a0 11px)"></div>
<div class="hm" style="left:709.75px;top:102.21px;color:#d2d2d2">A2</div>
<div style="left:731px;top:102px;width:18px;height:12px;background:linear-gradient(#000 0,#000 11px,#a0a0a0 11px)"></div>
<div class="hm" style="left:732.4799999999999px;top:102.21px;color:#d2d2d2">21</div>
<div style="left:749px;top:102px;width:17px;height:12px;background:linear-gradient(#000 0,#000 11px,#a0a0a0 11px)"></div>
<div class="hm" style="left:749.53px;top:102.21px;color:#d2d2d2">6C</div>
<div style="left:766px;top:102px;width:17px;height:12px;background:linear-gradient(#000 0,#000 11px,#a0a0a0 11px)"></div>
<div class="hm" style="left:766.5799999999999px;top:102.21px;color:#d2d2d2">O9</div>
<div style="left:783px;top:102px;width:17px;height:12px;background:linear-gradient(#000 0,#000 11px,#a0a0a0 11px)"></div>
<div class="hm" style="left:783.63px;top:102.21px;color:#d2d2d2">22</div>
<div style="left:800px;top:102px;width:17px;height:12px;background:linear-gradient(#000 0,#000 11px,#a0a0a0 11px)"></div>
<div class="hm" style="left:800.68px;top:102.21px;color:#d2d2d2">C6</div>
<div style="left:817px;top:102px;width:17px;height:12px;background:linear-gradient(#000 0,#000 11px,#a0a0a0 11px)"></div>
<div class="hm" style="left:817.7299999999999px;top:102.21px;color:#d2d2d2">D6</div>
<div style="left:834px;top:102px;width:17px;height:12px;background:linear-gradient(#000 0,#000 11px,#a0a0a0 11px)"></div>
<div class="hm" style="left:834.78px;top:102.21px;color:#d2d2d2">A9</div>
<div style="left:851px;top:102px;width:13px;height:12px;background:linear-gradient(#000 0,#000 11px,#a0a0a0 11px)"></div>
<div class="hm" style="left:851.8299999999999px;top:102.21px;color:#d2d2d2">O5</div>
<div class="t" style="left:530.8px;top:114.58000000000001px;color:#4f4fe0;font-size:9.5px;transform:scaleX(1.08);transform-origin:0 0;-webkit-text-stroke:0">00000040</div>
<div style="left:589px;top:114px;width:17px;height:12px;background:linear-gradient(#000 0,#000 11px,#a0a0a0 11px)"></div>
<div class="hm" style="left:590.4px;top:114.38000000000001px;color:#d2d2d2">O4</div>
<div style="left:606px;top:114px;width:18px;height:12px;background:linear-gradient(#000 0,#000 11px,#a0a0a0 11px)"></div>
<div class="hm" style="left:607.4499999999999px;top:114.38000000000001px;color:#d2d2d2">64</div>
<div style="left:624px;top:114px;width:17px;height:12px;background:linear-gradient(#000 0,#000 11px,#a0a0a0 11px)"></div>
<div class="hm" style="left:624.5px;top:114.38000000000001px;color:#d2d2d2">D1</div>
<div style="left:641px;top:114px;width:17px;height:12px;background:linear-gradient(#000 0,#000 11px,#a0a0a0 11px)"></div>
<div class="hm" style="left:641.55px;top:114.38000000000001px;color:#d2d2d2">86</div>
<div style="left:658px;top:114px;width:17px;height:12px;background:linear-gradient(#000 0,#000 11px,#a0a0a0 11px)"></div>
<div class="hm" style="left:658.6px;top:114.38000000000001px;color:#d2d2d2">E5</div>
<div style="left:675px;top:114px;width:17px;height:12px;background:linear-gradient(#000 0,#000 11px,#a0a0a0 11px)"></div>
<div class="hm" style="left:675.65px;top:114.38000000000001px;color:#d2d2d2">25</div>
<div class="hm" style="left:692.7px;top:114.38000000000001px;color:#4a4a4a">48</div>
<div style="left:709px;top:114px;width:22px;height:12px;background:linear-gradient(#000 0,#000 11px,#a0a0a0 11px)"></div>
<div class="hm" style="left:709.75px;top:114.38000000000001px;color:#d2d2d2">A2</div>
<div style="left:731px;top:114px;width:18px;height:12px;background:linear-gradient(#000 0,#000 11px,#a0a0a0 11px)"></div>
<div class="hm" style="left:732.4799999999999px;top:114.38000000000001px;color:#d2d2d2">92</div>
<div style="left:749px;top:114px;width:17px;height:12px;background:linear-gradient(#000 0,#000 11px,#a0a0a0 11px)"></div>
<div class="hm" style="left:749.53px;top:114.38000000000001px;color:#d2d2d2">1O</div>
<div style="left:766px;top:114px;width:17px;height:12px;background:linear-gradient(#000 0,#000 11px,#a0a0a0 11px)"></div>
<div class="hm" style="left:766.5799999999999px;top:114.38000000000001px;color:#d2d2d2">AA</div>
<div style="left:783px;top:114px;width:17px;height:12px;background:linear-gradient(#000 0,#000 11px,#a0a0a0 11px)"></div>
<div class="hm" style="left:783.63px;top:114.38000000000001px;color:#d2d2d2">68</div>
<div style="left:800px;top:114px;width:17px;height:12px;background:linear-gradient(#000 0,#000 11px,#a0a0a0 11px)"></div>
<div class="hm" style="left:800.68px;top:114.38000000000001px;color:#d2d2d2">94</div>
<div style="left:817px;top:114px;width:17px;height:12px;background:linear-gradient(#000 0,#000 11px,#a0a0a0 11px)"></div>
<div class="hm" style="left:817.7299999999999px;top:114.38000000000001px;color:#d2d2d2">O4</div>
<div style="left:834px;top:114px;width:17px;height:12px;background:linear-gradient(#000 0,#000 11px,#a0a0a0 11px)"></div>
<div class="hm" style="left:834.78px;top:114.38000000000001px;color:#d2d2d2">51</div>
<div style="left:851px;top:114px;width:13px;height:12px;background:linear-gradient(#000 0,#000 11px,#a0a0a0 11px)"></div>
<div class="hm" style="left:851.8299999999999px;top:114.38000000000001px;color:#d2d2d2">D1</div>
<div class="t" style="left:530.8px;top:126.75px;color:#4f4fe0;font-size:9.5px;transform:scaleX(1.08);transform-origin:0 0;-webkit-text-stroke:0">00000050</div>
<div style="left:589px;top:126px;width:17px;height:12px;background:linear-gradient(#000 0,#000 11px,#a0a0a0 11px)"></div>
<div class="hm" style="left:590.4px;top:126.55px;color:#d2d2d2">DA</div>
<div style="left:606px;top:126px;width:18px;height:12px;background:linear-gradient(#000 0,#000 11px,#a0a0a0 11px)"></div>
<div class="hm" style="left:607.4499999999999px;top:126.55px;color:#d2d2d2">D2</div>
<div style="left:624px;top:126px;width:17px;height:12px;background:linear-gradient(#000 0,#000 11px,#a0a0a0 11px)"></div>
<div class="hm" style="left:624.5px;top:126.55px;color:#d2d2d2">54</div>
<div style="left:641px;top:126px;width:17px;height:12px;background:linear-gradient(#000 0,#000 11px,#a0a0a0 11px)"></div>
<div class="hm" style="left:641.55px;top:126.55px;color:#d2d2d2">83</div>
<div style="left:658px;top:126px;width:17px;height:12px;background:linear-gradient(#000 0,#000 11px,#a0a0a0 11px)"></div>
<div class="hm" style="left:658.6px;top:126.55px;color:#d2d2d2">1A</div>
<div style="left:675px;top:126px;width:17px;height:12px;background:linear-gradient(#000 0,#000 11px,#a0a0a0 11px)"></div>
<div class="hm" style="left:675.65px;top:126.55px;color:#d2d2d2">D1</div>
<div style="left:692px;top:126px;width:17px;height:12px;background:linear-gradient(#000 0,#000 11px,#a0a0a0 11px)"></div>
<div class="hm" style="left:692.7px;top:126.55px;color:#d2d2d2">OA</div>
<div style="left:709px;top:126px;width:22px;height:12px;background:linear-gradient(#000 0,#000 11px,#a0a0a0 11px)"></div>
<div class="hm" style="left:709.75px;top:126.55px;color:#d2d2d2">88</div>
<div style="left:731px;top:126px;width:18px;height:12px;background:linear-gradient(#000 0,#000 11px,#a0a0a0 11px)"></div>
<div class="hm" style="left:732.4799999999999px;top:126.55px;color:#d2d2d2">5O</div>
<div style="left:749px;top:126px;width:17px;height:12px;background:linear-gradient(#000 0,#000 11px,#a0a0a0 11px)"></div>
<div class="hm" style="left:749.53px;top:126.55px;color:#d2d2d2">65</div>
<div style="left:766px;top:126px;width:17px;height:12px;background:linear-gradient(#000 0,#000 11px,#a0a0a0 11px)"></div>
<div class="hm" style="left:766.5799999999999px;top:126.55px;color:#d2d2d2">EA</div>
<div style="left:783px;top:126px;width:17px;height:12px;background:linear-gradient(#000 0,#000 11px,#a0a0a0 11px)"></div>
<div class="hm" style="left:783.63px;top:126.55px;color:#d2d2d2">44</div>
<div style="left:800px;top:126px;width:17px;height:12px;background:linear-gradient(#000 0,#000 11px,#a0a0a0 11px)"></div>
<div class="hm" style="left:800.68px;top:126.55px;color:#d2d2d2">O5</div>
<div style="left:817px;top:126px;width:17px;height:12px;background:linear-gradient(#000 0,#000 11px,#a0a0a0 11px)"></div>
<div class="hm" style="left:817.7299999999999px;top:126.55px;color:#d2d2d2">21</div>
<div style="left:834px;top:126px;width:17px;height:12px;background:linear-gradient(#000 0,#000 11px,#a0a0a0 11px)"></div>
<div class="hm" style="left:834.78px;top:126.55px;color:#d2d2d2">91</div>
<div style="left:851px;top:126px;width:13px;height:12px;background:linear-gradient(#000 0,#000 11px,#a0a0a0 11px)"></div>
<div class="hm" style="left:851.8299999999999px;top:126.55px;color:#d2d2d2">O8</div>
<div class="t" style="left:530.8px;top:138.92px;color:#4f4fe0;font-size:9.5px;transform:scaleX(1.08);transform-origin:0 0;-webkit-text-stroke:0">00000060</div>
<div style="left:589px;top:138px;width:17px;height:12px;background:linear-gradient(#000 0,#000 11px,#a0a0a0 11px)"></div>
<div class="hm" style="left:590.4px;top:138.71999999999997px;color:#d2d2d2">96</div>
<div style="left:606px;top:138px;width:18px;height:12px;background:linear-gradient(#000 0,#000 11px,#a0a0a0 11px)"></div>
<div class="hm" style="left:607.4499999999999px;top:138.71999999999997px;color:#d2d2d2">25</div>
<div style="left:624px;top:138px;width:17px;height:12px;background:linear-gradient(#000 0,#000 11px,#a0a0a0 11px)"></div>
<div class="hm" style="left:624.5px;top:138.71999999999997px;color:#d2d2d2">2A</div>
<div style="left:641px;top:138px;width:17px;height:12px;background:linear-gradient(#000 0,#000 11px,#a0a0a0 11px)"></div>
<div class="hm" style="left:641.55px;top:138.71999999999997px;color:#d2d2d2">6A</div>
<div style="left:658px;top:138px;width:17px;height:12px;background:linear-gradient(#000 0,#000 11px,#a0a0a0 11px)"></div>
<div class="hm" style="left:658.6px;top:138.71999999999997px;color:#d2d2d2">OC</div>
<div style="left:675px;top:138px;width:17px;height:12px;background:linear-gradient(#000 0,#000 11px,#a0a0a0 11px)"></div>
<div class="hm" style="left:675.65px;top:138.71999999999997px;color:#d2d2d2">OD</div>
<div style="left:692px;top:138px;width:17px;height:12px;background:linear-gradient(#000 0,#000 11px,#a0a0a0 11px)"></div>
<div class="hm" style="left:692.7px;top:138.71999999999997px;color:#d2d2d2">8A</div>
<div style="left:709px;top:138px;width:22px;height:12px;background:linear-gradient(#000 0,#000 11px,#a0a0a0 11px)"></div>
<div class="hm" style="left:709.75px;top:138.71999999999997px;color:#d2d2d2">AD</div>
<div style="left:731px;top:138px;width:18px;height:12px;background:linear-gradient(#000 0,#000 11px,#a0a0a0 11px)"></div>
<div class="hm" style="left:732.4799999999999px;top:138.71999999999997px;color:#d2d2d2">B6</div>
<div style="left:749px;top:138px;width:17px;height:12px;background:linear-gradient(#000 0,#000 11px,#a0a0a0 11px)"></div>
<div class="hm" style="left:749.53px;top:138.71999999999997px;color:#d2d2d2">8A</div>
<div style="left:766px;top:138px;width:17px;height:12px;background:linear-gradient(#000 0,#000 11px,#a0a0a0 11px)"></div>
<div class="hm" style="left:766.5799999999999px;top:138.71999999999997px;color:#d2d2d2">OB</div>
<div style="left:783px;top:138px;width:17px;height:12px;background:linear-gradient(#000 0,#000 11px,#a0a0a0 11px)"></div>
<div class="hm" style="left:783.63px;top:138.71999999999997px;color:#d2d2d2">55</div>
<div style="left:800px;top:138px;width:17px;height:12px;background:linear-gradient(#000 0,#000 11px,#a0a0a0 11px)"></div>
<div class="hm" style="left:800.68px;top:138.71999999999997px;color:#d2d2d2">AB</div>
<div style="left:817px;top:138px;width:17px;height:12px;background:linear-gradient(#000 0,#000 11px,#a0a0a0 11px)"></div>
<div class="hm" style="left:817.7299999999999px;top:138.71999999999997px;color:#d2d2d2">1O</div>
<div style="left:834px;top:138px;width:17px;height:12px;background:linear-gradient(#000 0,#000 11px,#a0a0a0 11px)"></div>
<div class="hm" style="left:834.78px;top:138.71999999999997px;color:#d2d2d2">5C</div>
<div style="left:851px;top:138px;width:13px;height:12px;background:linear-gradient(#000 0,#000 11px,#a0a0a0 11px)"></div>
<div class="hm" style="left:851.8299999999999px;top:138.71999999999997px;color:#d2d2d2">46</div>
<div class="t" style="left:530.8px;top:151.09px;color:#4f4fe0;font-size:9.5px;transform:scaleX(1.08);transform-origin:0 0;-webkit-text-stroke:0">00000070</div>
<div style="left:589px;top:150px;width:17px;height:12px;background:linear-gradient(#000 0,#000 11px,#a0a0a0 11px)"></div>
<div class="hm" style="left:590.4px;top:150.89px;color:#d2d2d2">DB</div>
<div style="left:606px;top:150px;width:18px;height:12px;background:linear-gradient(#000 0,#000 11px,#a0a0a0 11px)"></div>
<div class="hm" style="left:607.4499999999999px;top:150.89px;color:#d2d2d2">A9</div>
<div style="left:624px;top:150px;width:17px;height:12px;background:linear-gradient(#000 0,#000 11px,#a0a0a0 11px)"></div>
<div class="hm" style="left:624.5px;top:150.89px;color:#d2d2d2">DB</div>
<div style="left:641px;top:150px;width:17px;height:12px;background:linear-gradient(#000 0,#000 11px,#a0a0a0 11px)"></div>
<div class="hm" style="left:641.55px;top:150.89px;color:#d2d2d2">38</div>
<div style="left:658px;top:150px;width:17px;height:12px;background:linear-gradient(#000 0,#000 11px,#a0a0a0 11px)"></div>
<div class="hm" style="left:658.6px;top:150.89px;color:#d2d2d2">2D</div>
<div style="left:675px;top:150px;width:17px;height:12px;background:linear-gradient(#000 0,#000 11px,#a0a0a0 11px)"></div>
<div class="hm" style="left:675.65px;top:150.89px;color:#d2d2d2">8E</div>
<div style="left:692px;top:150px;width:17px;height:12px;background:linear-gradient(#000 0,#000 11px,#a0a0a0 11px)"></div>
<div class="hm" style="left:692.7px;top:150.89px;color:#d2d2d2">85</div>
<div style="left:709px;top:150px;width:22px;height:12px;background:linear-gradient(#000 0,#000 11px,#a0a0a0 11px)"></div>
<div class="hm" style="left:709.75px;top:150.89px;color:#d2d2d2">39</div>
<div style="left:731px;top:150px;width:18px;height:12px;background:linear-gradient(#000 0,#000 11px,#a0a0a0 11px)"></div>
<div class="hm" style="left:732.4799999999999px;top:150.89px;color:#d2d2d2">F7</div>
<div style="left:749px;top:150px;width:17px;height:12px;background:linear-gradient(#000 0,#000 11px,#a0a0a0 11px)"></div>
<div class="hm" style="left:749.53px;top:150.89px;color:#d2d2d2">25</div>
<div style="left:766px;top:150px;width:17px;height:12px;background:linear-gradient(#000 0,#000 11px,#a0a0a0 11px)"></div>
<div class="hm" style="left:766.5799999999999px;top:150.89px;color:#d2d2d2">21</div>
<div style="left:783px;top:150px;width:17px;height:12px;background:linear-gradient(#000 0,#000 11px,#a0a0a0 11px)"></div>
<div class="hm" style="left:783.63px;top:150.89px;color:#d2d2d2">2O</div>
<div style="left:800px;top:150px;width:17px;height:12px;background:linear-gradient(#000 0,#000 11px,#a0a0a0 11px)"></div>
<div class="hm" style="left:800.68px;top:150.89px;color:#d2d2d2">B6</div>
<div style="left:817px;top:150px;width:17px;height:12px;background:linear-gradient(#000 0,#000 11px,#a0a0a0 11px)"></div>
<div class="hm" style="left:817.7299999999999px;top:150.89px;color:#d2d2d2">83</div>
<div style="left:834px;top:150px;width:17px;height:12px;background:linear-gradient(#000 0,#000 11px,#a0a0a0 11px)"></div>
<div class="hm" style="left:834.78px;top:150.89px;color:#d2d2d2">F3</div>
<div style="left:851px;top:150px;width:13px;height:12px;background:linear-gradient(#000 0,#000 11px,#a0a0a0 11px)"></div>
<div class="hm" style="left:851.8299999999999px;top:150.89px;color:#d2d2d2">9B</div>
<div class="t" style="left:530.8px;top:163.26000000000002px;color:#4f4fe0;font-size:9.5px;transform:scaleX(1.08);transform-origin:0 0;-webkit-text-stroke:0">00000080</div>
<div style="left:589px;top:162px;width:17px;height:13px;background:linear-gradient(#000 0,#000 12px,#a0a0a0 12px)"></div>
<div class="hm" style="left:590.4px;top:163.06px;color:#d2d2d2">99</div>
<div style="left:606px;top:162px;width:18px;height:13px;background:linear-gradient(#000 0,#000 12px,#a0a0a0 12px)"></div>
<div class="hm" style="left:607.4499999999999px;top:163.06px;color:#d2d2d2">4F</div>
<div style="left:624px;top:162px;width:17px;height:13px;background:linear-gradient(#000 0,#000 12px,#a0a0a0 12px)"></div>
<div class="hm" style="left:624.5px;top:163.06px;color:#d2d2d2">24</div>
<div style="left:641px;top:162px;width:17px;height:13px;background:linear-gradient(#000 0,#000 12px,#a0a0a0 12px)"></div>
<div class="hm" style="left:641.55px;top:163.06px;color:#d2d2d2">16</div>
<div style="left:658px;top:162px;width:17px;height:13px;background:linear-gradient(#000 0,#000 12px,#a0a0a0 12px)"></div>
<div class="hm" style="left:658.6px;top:163.06px;color:#d2d2d2">38</div>
<div style="left:675px;top:162px;width:17px;height:13px;background:linear-gradient(#000 0,#000 12px,#a0a0a0 12px)"></div>
<div class="hm" style="left:675.65px;top:163.06px;color:#d2d2d2">6F</div>
<div style="left:692px;top:162px;width:17px;height:13px;background:linear-gradient(#000 0,#000 12px,#a0a0a0 12px)"></div>
<div class="hm" style="left:692.7px;top:163.06px;color:#d2d2d2">B9</div>
<div style="left:709px;top:162px;width:22px;height:13px;background:linear-gradient(#000 0,#000 12px,#a0a0a0 12px)"></div>
<div class="hm" style="left:709.75px;top:163.06px;color:#d2d2d2">F7</div>
<div style="left:731px;top:162px;width:18px;height:13px;background:linear-gradient(#000 0,#000 12px,#a0a0a0 12px)"></div>
<div class="hm" style="left:732.4799999999999px;top:163.06px;color:#d2d2d2">BC</div>
<div style="left:749px;top:162px;width:17px;height:13px;background:linear-gradient(#000 0,#000 12px,#a0a0a0 12px)"></div>
<div class="hm" style="left:749.53px;top:163.06px;color:#d2d2d2">7B</div>
<div style="left:766px;top:162px;width:17px;height:13px;background:linear-gradient(#000 0,#000 12px,#a0a0a0 12px)"></div>
<div class="hm" style="left:766.5799999999999px;top:163.06px;color:#d2d2d2">CF</div>
<div style="left:783px;top:162px;width:17px;height:13px;background:linear-gradient(#000 0,#000 12px,#a0a0a0 12px)"></div>
<div class="hm" style="left:783.63px;top:163.06px;color:#d2d2d2">FF</div>
<div style="left:800px;top:162px;width:17px;height:13px;background:linear-gradient(#000 0,#000 12px,#a0a0a0 12px)"></div>
<div class="hm" style="left:800.68px;top:163.06px;color:#d2d2d2">EC</div>
<div style="left:817px;top:162px;width:17px;height:13px;background:linear-gradient(#000 0,#000 12px,#a0a0a0 12px)"></div>
<div class="hm" style="left:817.7299999999999px;top:163.06px;color:#d2d2d2">AF</div>
<div style="left:834px;top:162px;width:17px;height:13px;background:linear-gradient(#000 0,#000 12px,#a0a0a0 12px)"></div>
<div class="hm" style="left:834.78px;top:163.06px;color:#d2d2d2">9E</div>
<div style="left:851px;top:162px;width:13px;height:13px;background:linear-gradient(#000 0,#000 12px,#a0a0a0 12px)"></div>
<div class="hm" style="left:851.8299999999999px;top:163.06px;color:#d2d2d2">CC</div>
<div class="t" style="left:530.8px;top:175.43px;color:#4f4fe0;font-size:9.5px;transform:scaleX(1.08);transform-origin:0 0;-webkit-text-stroke:0">00000090</div>
<div style="left:589px;top:175px;width:17px;height:12px;background:linear-gradient(#000 0,#000 11px,#a0a0a0 11px)"></div>
<div class="hm" style="left:590.4px;top:175.23px;color:#d2d2d2">D9</div>
<div style="left:606px;top:175px;width:18px;height:12px;background:linear-gradient(#000 0,#000 11px,#a0a0a0 11px)"></div>
<div class="hm" style="left:607.4499999999999px;top:175.23px;color:#d2d2d2">E1</div>
<div style="left:624px;top:175px;width:17px;height:12px;background:linear-gradient(#000 0,#000 11px,#a0a0a0 11px)"></div>
<div class="hm" style="left:624.5px;top:175.23px;color:#d2d2d2">BE</div>
<div style="left:641px;top:175px;width:17px;height:12px;background:linear-gradient(#000 0,#000 11px,#a0a0a0 11px)"></div>
<div class="hm" style="left:641.55px;top:175.23px;color:#d2d2d2">74</div>
<div style="left:658px;top:175px;width:17px;height:12px;background:linear-gradient(#000 0,#000 11px,#a0a0a0 11px)"></div>
<div class="hm" style="left:658.6px;top:175.23px;color:#d2d2d2">BF</div>
<div style="left:675px;top:175px;width:17px;height:12px;background:linear-gradient(#000 0,#000 11px,#a0a0a0 11px)"></div>
<div class="hm" style="left:675.65px;top:175.23px;color:#d2d2d2">2O</div>
<div style="left:692px;top:175px;width:17px;height:12px;background:linear-gradient(#000 0,#000 11px,#a0a0a0 11px)"></div>
<div class="hm" style="left:692.7px;top:175.23px;color:#d2d2d2">47</div>
<div style="left:709px;top:175px;width:22px;height:12px;background:linear-gradient(#000 0,#000 11px,#a0a0a0 11px)"></div>
<div class="hm" style="left:709.75px;top:175.23px;color:#d2d2d2">4F</div>
<div style="left:731px;top:175px;width:18px;height:12px;background:linear-gradient(#000 0,#000 11px,#a0a0a0 11px)"></div>
<div class="hm" style="left:732.4799999999999px;top:175.23px;color:#d2d2d2">7D</div>
<div style="left:749px;top:175px;width:17px;height:12px;background:linear-gradient(#000 0,#000 11px,#a0a0a0 11px)"></div>
<div class="hm" style="left:749.53px;top:175.23px;color:#d2d2d2">C7</div>
<div style="left:766px;top:175px;width:17px;height:12px;background:linear-gradient(#000 0,#000 11px,#a0a0a0 11px)"></div>
<div class="hm" style="left:766.5799999999999px;top:175.23px;color:#d2d2d2">B7</div>
<div style="left:783px;top:175px;width:17px;height:12px;background:linear-gradient(#000 0,#000 11px,#a0a0a0 11px)"></div>
<div class="hm" style="left:783.63px;top:175.23px;color:#d2d2d2">2D</div>
<div style="left:800px;top:175px;width:17px;height:12px;background:linear-gradient(#000 0,#000 11px,#a0a0a0 11px)"></div>
<div class="hm" style="left:800.68px;top:175.23px;color:#d2d2d2">8E</div>
<div style="left:817px;top:175px;width:17px;height:12px;background:linear-gradient(#000 0,#000 11px,#a0a0a0 11px)"></div>
<div class="hm" style="left:817.7299999999999px;top:175.23px;color:#d2d2d2">C4</div>
<div style="left:834px;top:175px;width:17px;height:12px;background:linear-gradient(#000 0,#000 11px,#a0a0a0 11px)"></div>
<div class="hm" style="left:834.78px;top:175.23px;color:#d2d2d2">E9</div>
<div style="left:851px;top:175px;width:13px;height:12px;background:linear-gradient(#000 0,#000 11px,#a0a0a0 11px)"></div>
<div class="hm" style="left:851.8299999999999px;top:175.23px;color:#d2d2d2">EE</div>
<div class="t" style="left:530.8px;top:187.6px;color:#4f4fe0;font-size:9.5px;transform:scaleX(1.08);transform-origin:0 0;-webkit-text-stroke:0">000000A0</div>
<div style="left:589px;top:187px;width:17px;height:12px;background:linear-gradient(#000 0,#000 11px,#a0a0a0 11px)"></div>
<div class="hm" style="left:590.4px;top:187.39999999999998px;color:#d2d2d2">34</div>
<div style="left:606px;top:187px;width:18px;height:12px;background:linear-gradient(#000 0,#000 11px,#a0a0a0 11px)"></div>
<div class="hm" style="left:607.4499999999999px;top:187.39999999999998px;color:#d2d2d2">F7</div>
<div style="left:624px;top:187px;width:17px;height:12px;background:linear-gradient(#000 0,#000 11px,#a0a0a0 11px)"></div>
<div class="hm" style="left:624.5px;top:187.39999999999998px;color:#d2d2d2">74</div>
<div style="left:641px;top:187px;width:17px;height:12px;background:linear-gradient(#000 0,#000 11px,#a0a0a0 11px)"></div>
<div class="hm" style="left:641.55px;top:187.39999999999998px;color:#d2d2d2">FE</div>
<div style="left:658px;top:187px;width:17px;height:12px;background:linear-gradient(#000 0,#000 11px,#a0a0a0 11px)"></div>
<div class="hm" style="left:658.6px;top:187.39999999999998px;color:#d2d2d2">52</div>
<div style="left:675px;top:187px;width:17px;height:12px;background:linear-gradient(#000 0,#000 11px,#a0a0a0 11px)"></div>
<div class="hm" style="left:675.65px;top:187.39999999999998px;color:#d2d2d2">C7</div>
<div style="left:692px;top:187px;width:17px;height:12px;background:linear-gradient(#000 0,#000 11px,#a0a0a0 11px)"></div>
<div class="hm" style="left:692.7px;top:187.39999999999998px;color:#d2d2d2">99</div>
<div style="left:709px;top:187px;width:22px;height:12px;background:linear-gradient(#000 0,#000 11px,#a0a0a0 11px)"></div>
<div class="hm" style="left:709.75px;top:187.39999999999998px;color:#d2d2d2">33</div>
<div style="left:731px;top:187px;width:18px;height:12px;background:linear-gradient(#000 0,#000 11px,#a0a0a0 11px)"></div>
<div class="hm" style="left:732.4799999999999px;top:187.39999999999998px;color:#d2d2d2">FD</div>
<div style="left:749px;top:187px;width:17px;height:12px;background:linear-gradient(#000 0,#000 11px,#a0a0a0 11px)"></div>
<div class="hm" style="left:749.53px;top:187.39999999999998px;color:#d2d2d2">63</div>
<div style="left:766px;top:187px;width:17px;height:12px;background:linear-gradient(#000 0,#000 11px,#a0a0a0 11px)"></div>
<div class="hm" style="left:766.5799999999999px;top:187.39999999999998px;color:#d2d2d2">D2</div>
<div style="left:783px;top:187px;width:17px;height:12px;background:linear-gradient(#000 0,#000 11px,#a0a0a0 11px)"></div>
<div class="hm" style="left:783.63px;top:187.39999999999998px;color:#d2d2d2">56</div>
<div style="left:800px;top:187px;width:17px;height:12px;background:linear-gradient(#000 0,#000 11px,#a0a0a0 11px)"></div>
<div class="hm" style="left:800.68px;top:187.39999999999998px;color:#d2d2d2">A4</div>
<div style="left:817px;top:187px;width:17px;height:12px;background:linear-gradient(#000 0,#000 11px,#a0a0a0 11px)"></div>
<div class="hm" style="left:817.7299999999999px;top:187.39999999999998px;color:#d2d2d2">F2</div>
<div style="left:834px;top:187px;width:17px;height:12px;background:linear-gradient(#000 0,#000 11px,#a0a0a0 11px)"></div>
<div class="hm" style="left:834.78px;top:187.39999999999998px;color:#d2d2d2">32</div>
<div style="left:851px;top:187px;width:13px;height:12px;background:linear-gradient(#000 0,#000 11px,#a0a0a0 11px)"></div>
<div class="hm" style="left:851.8299999999999px;top:187.39999999999998px;color:#d2d2d2">D2</div>
<div class="t" style="left:530.8px;top:199.77px;color:#4f4fe0;font-size:9.5px;transform:scaleX(1.08);transform-origin:0 0;-webkit-text-stroke:0">000000B0</div>
<div style="left:589px;top:199px;width:17px;height:12px;background:linear-gradient(#000 0,#000 11px,#a0a0a0 11px)"></div>
<div class="hm" style="left:590.4px;top:199.57px;color:#d2d2d2">D6</div>
<div style="left:606px;top:199px;width:18px;height:12px;background:linear-gradient(#000 0,#000 11px,#a0a0a0 11px)"></div>
<div class="hm" style="left:607.4499999999999px;top:199.57px;color:#d2d2d2">A5</div>
<div style="left:624px;top:199px;width:17px;height:12px;background:linear-gradient(#000 0,#000 11px,#a0a0a0 11px)"></div>
<div class="hm" style="left:624.5px;top:199.57px;color:#d2d2d2">OA</div>
<div style="left:641px;top:199px;width:17px;height:12px;background:linear-gradient(#000 0,#000 11px,#a0a0a0 11px)"></div>
<div class="hm" style="left:641.55px;top:199.57px;color:#d2d2d2">DC</div>
<div style="left:658px;top:199px;width:17px;height:12px;background:linear-gradient(#000 0,#000 11px,#a0a0a0 11px)"></div>
<div class="hm" style="left:658.6px;top:199.57px;color:#d2d2d2">E9</div>
<div style="left:675px;top:199px;width:17px;height:12px;background:linear-gradient(#000 0,#000 11px,#a0a0a0 11px)"></div>
<div class="hm" style="left:675.65px;top:199.57px;color:#d2d2d2">FE</div>
<div style="left:692px;top:199px;width:17px;height:12px;background:linear-gradient(#000 0,#000 11px,#a0a0a0 11px)"></div>
<div class="hm" style="left:692.7px;top:199.57px;color:#d2d2d2">31</div>
<div style="left:709px;top:199px;width:22px;height:12px;background:linear-gradient(#000 0,#000 11px,#a0a0a0 11px)"></div>
<div class="hm" style="left:709.75px;top:199.57px;color:#d2d2d2">EE</div>
<div style="left:731px;top:199px;width:18px;height:12px;background:linear-gradient(#000 0,#000 11px,#a0a0a0 11px)"></div>
<div class="hm" style="left:732.4799999999999px;top:199.57px;color:#d2d2d2">81</div>
<div style="left:749px;top:199px;width:17px;height:12px;background:linear-gradient(#000 0,#000 11px,#a0a0a0 11px)"></div>
<div class="hm" style="left:749.53px;top:199.57px;color:#d2d2d2">D3</div>
<div style="left:766px;top:199px;width:17px;height:12px;background:linear-gradient(#000 0,#000 11px,#a0a0a0 11px)"></div>
<div class="hm" style="left:766.5799999999999px;top:199.57px;color:#d2d2d2">69</div>
<div style="left:783px;top:199px;width:17px;height:12px;background:linear-gradient(#000 0,#000 11px,#a0a0a0 11px)"></div>
<div class="hm" style="left:783.63px;top:199.57px;color:#d2d2d2">OC</div>
<div style="left:800px;top:199px;width:17px;height:12px;background:linear-gradient(#000 0,#000 11px,#a0a0a0 11px)"></div>
<div class="hm" style="left:800.68px;top:199.57px;color:#d2d2d2">1A</div>
<div style="left:817px;top:199px;width:17px;height:12px;background:linear-gradient(#000 0,#000 11px,#a0a0a0 11px)"></div>
<div class="hm" style="left:817.7299999999999px;top:199.57px;color:#d2d2d2">DD</div>
<div style="left:834px;top:199px;width:17px;height:12px;background:linear-gradient(#000 0,#000 11px,#a0a0a0 11px)"></div>
<div class="hm" style="left:834.78px;top:199.57px;color:#d2d2d2">FF</div>
<div style="left:851px;top:199px;width:13px;height:12px;background:linear-gradient(#000 0,#000 11px,#a0a0a0 11px)"></div>
<div class="hm" style="left:851.8299999999999px;top:199.57px;color:#d2d2d2">7D</div>
<div class="t" style="left:530.8px;top:211.94px;color:#4f4fe0;font-size:9.5px;transform:scaleX(1.08);transform-origin:0 0;-webkit-text-stroke:0">000000C0</div>
<div style="left:589px;top:211px;width:17px;height:12px;background:linear-gradient(#000 0,#000 11px,#a0a0a0 11px)"></div>
<div class="hm" style="left:590.4px;top:211.73999999999998px;color:#d2d2d2">77</div>
<div style="left:606px;top:211px;width:18px;height:12px;background:linear-gradient(#000 0,#000 11px,#a0a0a0 11px)"></div>
<div class="hm" style="left:607.4499999999999px;top:211.73999999999998px;color:#d2d2d2">3A</div>
<div style="left:624px;top:211px;width:17px;height:12px;background:linear-gradient(#000 0,#000 11px,#a0a0a0 11px)"></div>
<div class="hm" style="left:624.5px;top:211.73999999999998px;color:#d2d2d2">CD</div>
<div style="left:641px;top:211px;width:17px;height:12px;background:linear-gradient(#000 0,#000 11px,#a0a0a0 11px)"></div>
<div class="hm" style="left:641.55px;top:211.73999999999998px;color:#d2d2d2">3F</div>
<div style="left:658px;top:211px;width:17px;height:12px;background:linear-gradient(#000 0,#000 11px,#a0a0a0 11px)"></div>
<div class="hm" style="left:658.6px;top:211.73999999999998px;color:#d2d2d2">OC</div>
<div style="left:675px;top:211px;width:17px;height:12px;background:linear-gradient(#000 0,#000 11px,#a0a0a0 11px)"></div>
<div class="hm" style="left:675.65px;top:211.73999999999998px;color:#d2d2d2">51</div>
<div style="left:692px;top:211px;width:17px;height:12px;background:linear-gradient(#000 0,#000 11px,#a0a0a0 11px)"></div>
<div class="hm" style="left:692.7px;top:211.73999999999998px;color:#d2d2d2">O1</div>
<div style="left:709px;top:211px;width:22px;height:12px;background:linear-gradient(#000 0,#000 11px,#a0a0a0 11px)"></div>
<div class="hm" style="left:709.75px;top:211.73999999999998px;color:#d2d2d2">81</div>
<div style="left:731px;top:211px;width:18px;height:12px;background:linear-gradient(#000 0,#000 11px,#a0a0a0 11px)"></div>
<div class="hm" style="left:732.4799999999999px;top:211.73999999999998px;color:#d2d2d2">D3</div>
<div style="left:749px;top:211px;width:17px;height:12px;background:linear-gradient(#000 0,#000 11px,#a0a0a0 11px)"></div>
<div class="hm" style="left:749.53px;top:211.73999999999998px;color:#d2d2d2">FC</div>
<div style="left:766px;top:211px;width:17px;height:12px;background:linear-gradient(#000 0,#000 11px,#a0a0a0 11px)"></div>
<div class="hm" style="left:766.5799999999999px;top:211.73999999999998px;color:#d2d2d2">E7</div>
<div style="left:783px;top:211px;width:17px;height:12px;background:linear-gradient(#000 0,#000 11px,#a0a0a0 11px)"></div>
<div class="hm" style="left:783.63px;top:211.73999999999998px;color:#d2d2d2">C1</div>
<div style="left:800px;top:211px;width:17px;height:12px;background:linear-gradient(#000 0,#000 11px,#a0a0a0 11px)"></div>
<div class="hm" style="left:800.68px;top:211.73999999999998px;color:#d2d2d2">A9</div>
<div style="left:817px;top:211px;width:17px;height:12px;background:linear-gradient(#000 0,#000 11px,#a0a0a0 11px)"></div>
<div class="hm" style="left:817.7299999999999px;top:211.73999999999998px;color:#d2d2d2">O4</div>
<div style="left:834px;top:211px;width:17px;height:12px;background:linear-gradient(#000 0,#000 11px,#a0a0a0 11px)"></div>
<div class="hm" style="left:834.78px;top:211.73999999999998px;color:#d2d2d2">44</div>
<div style="left:851px;top:211px;width:13px;height:12px;background:linear-gradient(#000 0,#000 11px,#a0a0a0 11px)"></div>
<div class="hm" style="left:851.8299999999999px;top:211.73999999999998px;color:#d2d2d2">4C</div>
<div class="t" style="left:530.8px;top:224.11px;color:#4f4fe0;font-size:9.5px;transform:scaleX(1.08);transform-origin:0 0;-webkit-text-stroke:0">000000D0</div>
<div style="left:589px;top:223px;width:17px;height:12px;background:linear-gradient(#000 0,#000 11px,#a0a0a0 11px)"></div>
<div class="hm" style="left:590.4px;top:223.91px;color:#d2d2d2">A3</div>
<div style="left:606px;top:223px;width:18px;height:12px;background:linear-gradient(#000 0,#000 11px,#a0a0a0 11px)"></div>
<div class="hm" style="left:607.4499999999999px;top:223.91px;color:#d2d2d2">CF</div>
<div style="left:624px;top:223px;width:17px;height:12px;background:linear-gradient(#000 0,#000 11px,#a0a0a0 11px)"></div>
<div class="hm" style="left:624.5px;top:223.91px;color:#d2d2d2">FO</div>
<div style="left:641px;top:223px;width:17px;height:12px;background:linear-gradient(#000 0,#000 11px,#a0a0a0 11px)"></div>
<div class="hm" style="left:641.55px;top:223.91px;color:#d2d2d2">9F</div>
<div style="left:658px;top:223px;width:17px;height:12px;background:linear-gradient(#000 0,#000 11px,#a0a0a0 11px)"></div>
<div class="hm" style="left:658.6px;top:223.91px;color:#d2d2d2">E3</div>
<div style="left:675px;top:223px;width:17px;height:12px;background:linear-gradient(#000 0,#000 11px,#a0a0a0 11px)"></div>
<div class="hm" style="left:675.65px;top:223.91px;color:#d2d2d2">CE</div>
<div style="left:692px;top:223px;width:17px;height:12px;background:linear-gradient(#000 0,#000 11px,#a0a0a0 11px)"></div>
<div class="hm" style="left:692.7px;top:223.91px;color:#d2d2d2">71</div>
<div style="left:709px;top:223px;width:22px;height:12px;background:linear-gradient(#000 0,#000 11px,#a0a0a0 11px)"></div>
<div class="hm" style="left:709.75px;top:223.91px;color:#d2d2d2">OF</div>
<div style="left:731px;top:223px;width:18px;height:12px;background:linear-gradient(#000 0,#000 11px,#a0a0a0 11px)"></div>
<div class="hm" style="left:732.4799999999999px;top:223.91px;color:#d2d2d2">OC</div>
<div style="left:749px;top:223px;width:17px;height:12px;background:linear-gradient(#000 0,#000 11px,#a0a0a0 11px)"></div>
<div class="hm" style="left:749.53px;top:223.91px;color:#d2d2d2">9C</div>
<div style="left:766px;top:223px;width:17px;height:12px;background:linear-gradient(#000 0,#000 11px,#a0a0a0 11px)"></div>
<div class="hm" style="left:766.5799999999999px;top:223.91px;color:#d2d2d2">EA</div>
<div style="left:783px;top:223px;width:17px;height:12px;background:linear-gradient(#000 0,#000 11px,#a0a0a0 11px)"></div>
<div class="hm" style="left:783.63px;top:223.91px;color:#d2d2d2">4E</div>
<div style="left:800px;top:223px;width:17px;height:12px;background:linear-gradient(#000 0,#000 11px,#a0a0a0 11px)"></div>
<div class="hm" style="left:800.68px;top:223.91px;color:#d2d2d2">9F</div>
<div style="left:817px;top:223px;width:17px;height:12px;background:linear-gradient(#000 0,#000 11px,#a0a0a0 11px)"></div>
<div class="hm" style="left:817.7299999999999px;top:223.91px;color:#d2d2d2">CA</div>
<div style="left:834px;top:223px;width:17px;height:12px;background:linear-gradient(#000 0,#000 11px,#a0a0a0 11px)"></div>
<div class="hm" style="left:834.78px;top:223.91px;color:#d2d2d2">58</div>
<div style="left:851px;top:223px;width:13px;height:12px;background:linear-gradient(#000 0,#000 11px,#a0a0a0 11px)"></div>
<div class="hm" style="left:851.8299999999999px;top:223.91px;color:#d2d2d2">FO</div>
<div class="t" style="left:530.8px;top:236.28px;color:#4f4fe0;font-size:9.5px;transform:scaleX(1.08);transform-origin:0 0;-webkit-text-stroke:0">000000E0</div>
<div style="left:589px;top:235px;width:17px;height:13px;background:linear-gradient(#000 0,#000 12px,#a0a0a0 12px)"></div>
<div class="hm" style="left:590.4px;top:236.07999999999998px;color:#d2d2d2">EE</div>
<div style="left:606px;top:235px;width:18px;height:13px;background:linear-gradient(#000 0,#000 12px,#a0a0a0 12px)"></div>
<div class="hm" style="left:607.4499999999999px;top:236.07999999999998px;color:#d2d2d2">BB</div>
<div style="left:624px;top:235px;width:17px;height:13px;background:linear-gradient(#000 0,#000 12px,#a0a0a0 12px)"></div>
<div class="hm" style="left:624.5px;top:236.07999999999998px;color:#d2d2d2">8E</div>
<div style="left:641px;top:235px;width:17px;height:13px;background:linear-gradient(#000 0,#000 12px,#a0a0a0 12px)"></div>
<div class="hm" style="left:641.55px;top:236.07999999999998px;color:#d2d2d2">A9</div>
<div style="left:658px;top:235px;width:17px;height:13px;background:linear-gradient(#000 0,#000 12px,#a0a0a0 12px)"></div>
<div class="hm" style="left:658.6px;top:236.07999999999998px;color:#d2d2d2">2B</div>
<div style="left:675px;top:235px;width:17px;height:13px;background:linear-gradient(#000 0,#000 12px,#a0a0a0 12px)"></div>
<div class="hm" style="left:675.65px;top:236.07999999999998px;color:#d2d2d2">O4</div>
<div style="left:692px;top:235px;width:17px;height:13px;background:linear-gradient(#000 0,#000 12px,#a0a0a0 12px)"></div>
<div class="hm" style="left:692.7px;top:236.07999999999998px;color:#d2d2d2">68</div>
<div style="left:709px;top:235px;width:22px;height:13px;background:linear-gradient(#000 0,#000 12px,#a0a0a0 12px)"></div>
<div class="hm" style="left:709.75px;top:236.07999999999998px;color:#d2d2d2">24</div>
<div style="left:731px;top:235px;width:18px;height:13px;background:linear-gradient(#000 0,#000 12px,#a0a0a0 12px)"></div>
<div class="hm" style="left:732.4799999999999px;top:236.07999999999998px;color:#d2d2d2">F7</div>
<div class="hm" style="left:749.53px;top:236.07999999999998px;color:#4a4a4a">57</div>
<div style="left:766px;top:235px;width:17px;height:13px;background:linear-gradient(#000 0,#000 12px,#a0a0a0 12px)"></div>
<div class="hm" style="left:766.5799999999999px;top:236.07999999999998px;color:#d2d2d2">3E</div>
<div style="left:783px;top:235px;width:17px;height:13px;background:linear-gradient(#000 0,#000 12px,#a0a0a0 12px)"></div>
<div class="hm" style="left:783.63px;top:236.07999999999998px;color:#d2d2d2">8E</div>
<div style="left:800px;top:235px;width:17px;height:13px;background:linear-gradient(#000 0,#000 12px,#a0a0a0 12px)"></div>
<div class="hm" style="left:800.68px;top:236.07999999999998px;color:#d2d2d2">44</div>
<div style="left:817px;top:235px;width:17px;height:13px;background:linear-gradient(#000 0,#000 12px,#a0a0a0 12px)"></div>
<div class="hm" style="left:817.7299999999999px;top:236.07999999999998px;color:#d2d2d2">7A</div>
<div style="left:834px;top:235px;width:17px;height:13px;background:linear-gradient(#000 0,#000 12px,#a0a0a0 12px)"></div>
<div class="hm" style="left:834.78px;top:236.07999999999998px;color:#d2d2d2">AO</div>
<div style="left:851px;top:235px;width:13px;height:13px;background:linear-gradient(#000 0,#000 12px,#a0a0a0 12px)"></div>
<div class="hm" style="left:851.8299999999999px;top:236.07999999999998px;color:#d2d2d2">79</div>
<div class="t" style="left:530.8px;top:248.45000000000002px;color:#4f4fe0;font-size:9.5px;transform:scaleX(1.08);transform-origin:0 0;-webkit-text-stroke:0">000000F0</div>
<div style="left:589px;top:248px;width:17px;height:12px;background:linear-gradient(#000 0,#000 11px,#a0a0a0 11px)"></div>
<div class="hm" style="left:590.4px;top:248.25px;color:#d2d2d2">92</div>
<div style="left:606px;top:248px;width:18px;height:12px;background:linear-gradient(#000 0,#000 11px,#a0a0a0 11px)"></div>
<div class="hm" style="left:607.4499999999999px;top:248.25px;color:#d2d2d2">D9</div>
<div style="left:624px;top:248px;width:17px;height:12px;background:linear-gradient(#000 0,#000 11px,#a0a0a0 11px)"></div>
<div class="hm" style="left:624.5px;top:248.25px;color:#d2d2d2">A9</div>
<div style="left:641px;top:248px;width:17px;height:12px;background:linear-gradient(#000 0,#000 11px,#a0a0a0 11px)"></div>
<div class="hm" style="left:641.55px;top:248.25px;color:#d2d2d2">29</div>
<div style="left:658px;top:248px;width:17px;height:12px;background:linear-gradient(#000 0,#000 11px,#a0a0a0 11px)"></div>
<div class="hm" style="left:658.6px;top:248.25px;color:#d2d2d2">E9</div>
<div style="left:675px;top:248px;width:17px;height:12px;background:linear-gradient(#000 0,#000 11px,#a0a0a0 11px)"></div>
<div class="hm" style="left:675.65px;top:248.25px;color:#d2d2d2">82</div>
<div style="left:692px;top:248px;width:17px;height:12px;background:linear-gradient(#000 0,#000 11px,#a0a0a0 11px)"></div>
<div class="hm" style="left:692.7px;top:248.25px;color:#d2d2d2">54</div>
<div style="left:709px;top:248px;width:22px;height:12px;background:linear-gradient(#000 0,#000 11px,#a0a0a0 11px)"></div>
<div class="hm" style="left:709.75px;top:248.25px;color:#d2d2d2">26</div>
<div style="left:731px;top:248px;width:18px;height:12px;background:linear-gradient(#000 0,#000 11px,#a0a0a0 11px)"></div>
<div class="hm" style="left:732.4799999999999px;top:248.25px;color:#d2d2d2">2F</div>
<div style="left:749px;top:248px;width:17px;height:12px;background:linear-gradient(#000 0,#000 11px,#a0a0a0 11px)"></div>
<div class="hm" style="left:749.53px;top:248.25px;color:#d2d2d2">63</div>
<div style="left:766px;top:248px;width:17px;height:12px;background:linear-gradient(#000 0,#000 11px,#a0a0a0 11px)"></div>
<div class="hm" style="left:766.5799999999999px;top:248.25px;color:#d2d2d2">F9</div>
<div style="left:783px;top:248px;width:17px;height:12px;background:linear-gradient(#000 0,#000 11px,#a0a0a0 11px)"></div>
<div class="hm" style="left:783.63px;top:248.25px;color:#d2d2d2">4A</div>
<div style="left:800px;top:248px;width:17px;height:12px;background:linear-gradient(#000 0,#000 11px,#a0a0a0 11px)"></div>
<div class="hm" style="left:800.68px;top:248.25px;color:#d2d2d2">AO</div>
<div style="left:817px;top:248px;width:17px;height:12px;background:linear-gradient(#000 0,#000 11px,#a0a0a0 11px)"></div>
<div class="hm" style="left:817.7299999999999px;top:248.25px;color:#d2d2d2">42</div>
<div style="left:834px;top:248px;width:17px;height:12px;background:linear-gradient(#000 0,#000 11px,#a0a0a0 11px)"></div>
<div class="hm" style="left:834.78px;top:248.25px;color:#d2d2d2">D3</div>
<div style="left:851px;top:248px;width:13px;height:12px;background:linear-gradient(#000 0,#000 11px,#a0a0a0 11px)"></div>
<div class="hm" style="left:851.8299999999999px;top:248.25px;color:#d2d2d2">85</div>
<div class="t" style="left:530.8px;top:260.62px;color:#4f4fe0;font-size:9.5px;transform:scaleX(1.08);transform-origin:0 0;-webkit-text-stroke:0">00000100</div>
<div style="left:589px;top:260px;width:17px;height:12px;background:linear-gradient(#000 0,#000 11px,#a0a0a0 11px)"></div>
<div class="hm" style="left:590.4px;top:260.42px;color:#d2d2d2">AB</div>
<div style="left:606px;top:260px;width:18px;height:12px;background:linear-gradient(#000 0,#000 11px,#a0a0a0 11px)"></div>
<div class="hm" style="left:607.4499999999999px;top:260.42px;color:#d2d2d2">96</div>
<div style="left:624px;top:260px;width:17px;height:12px;background:linear-gradient(#000 0,#000 11px,#a0a0a0 11px)"></div>
<div class="hm" style="left:624.5px;top:260.42px;color:#d2d2d2">AF</div>
<div style="left:641px;top:260px;width:17px;height:12px;background:linear-gradient(#000 0,#000 11px,#a0a0a0 11px)"></div>
<div class="hm" style="left:641.55px;top:260.42px;color:#d2d2d2">58</div>
<div style="left:658px;top:260px;width:17px;height:12px;background:linear-gradient(#000 0,#000 11px,#a0a0a0 11px)"></div>
<div class="hm" style="left:658.6px;top:260.42px;color:#d2d2d2">E9</div>
<div style="left:675px;top:260px;width:17px;height:12px;background:linear-gradient(#000 0,#000 11px,#a0a0a0 11px)"></div>
<div class="hm" style="left:675.65px;top:260.42px;color:#d2d2d2">1E</div>
<div style="left:692px;top:260px;width:17px;height:12px;background:linear-gradient(#000 0,#000 11px,#a0a0a0 11px)"></div>
<div class="hm" style="left:692.7px;top:260.42px;color:#d2d2d2">E8</div>
<div style="left:709px;top:260px;width:22px;height:12px;background:linear-gradient(#000 0,#000 11px,#a0a0a0 11px)"></div>
<div class="hm" style="left:709.75px;top:260.42px;color:#d2d2d2">CF</div>
<div style="left:731px;top:260px;width:18px;height:12px;background:linear-gradient(#000 0,#000 11px,#a0a0a0 11px)"></div>
<div class="hm" style="left:732.4799999999999px;top:260.42px;color:#d2d2d2">CC</div>
<div style="left:749px;top:260px;width:17px;height:12px;background:linear-gradient(#000 0,#000 11px,#a0a0a0 11px)"></div>
<div class="hm" style="left:749.53px;top:260.42px;color:#d2d2d2">48</div>
<div style="left:766px;top:260px;width:17px;height:12px;background:linear-gradient(#000 0,#000 11px,#a0a0a0 11px)"></div>
<div class="hm" style="left:766.5799999999999px;top:260.42px;color:#d2d2d2">15</div>
<div style="left:783px;top:260px;width:17px;height:12px;background:linear-gradient(#000 0,#000 11px,#a0a0a0 11px)"></div>
<div class="hm" style="left:783.63px;top:260.42px;color:#d2d2d2">A4</div>
<div style="left:800px;top:260px;width:17px;height:12px;background:linear-gradient(#000 0,#000 11px,#a0a0a0 11px)"></div>
<div class="hm" style="left:800.68px;top:260.42px;color:#d2d2d2">A5</div>
<div style="left:817px;top:260px;width:17px;height:12px;background:linear-gradient(#000 0,#000 11px,#a0a0a0 11px)"></div>
<div class="hm" style="left:817.7299999999999px;top:260.42px;color:#d2d2d2">64</div>
<div style="left:834px;top:260px;width:17px;height:12px;background:linear-gradient(#000 0,#000 11px,#a0a0a0 11px)"></div>
<div class="hm" style="left:834.78px;top:260.42px;color:#d2d2d2">A6</div>
<div style="left:851px;top:260px;width:13px;height:12px;background:linear-gradient(#000 0,#000 11px,#a0a0a0 11px)"></div>
<div class="hm" style="left:851.8299999999999px;top:260.42px;color:#d2d2d2">67</div>
<div class="t" style="left:530.8px;top:272.78999999999996px;color:#4f4fe0;font-size:9.5px;transform:scaleX(1.08);transform-origin:0 0;-webkit-text-stroke:0">00000110</div>
<div style="left:589px;top:272px;width:17px;height:12px;background:linear-gradient(#000 0,#000 11px,#a0a0a0 11px)"></div>
<div class="hm" style="left:590.4px;top:272.59px;color:#d2d2d2">B8</div>
<div style="left:606px;top:272px;width:18px;height:12px;background:linear-gradient(#000 0,#000 11px,#a0a0a0 11px)"></div>
<div class="hm" style="left:607.4499999999999px;top:272.59px;color:#d2d2d2">D3</div>
<div style="left:624px;top:272px;width:17px;height:12px;background:linear-gradient(#000 0,#000 11px,#a0a0a0 11px)"></div>
<div class="hm" style="left:624.5px;top:272.59px;color:#d2d2d2">O3</div>
<div style="left:641px;top:272px;width:17px;height:12px;background:linear-gradient(#000 0,#000 11px,#a0a0a0 11px)"></div>
<div class="hm" style="left:641.55px;top:272.59px;color:#d2d2d2">DE</div>
<div style="left:658px;top:272px;width:17px;height:12px;background:linear-gradient(#000 0,#000 11px,#a0a0a0 11px)"></div>
<div class="hm" style="left:658.6px;top:272.59px;color:#d2d2d2">7D</div>
<div style="left:675px;top:272px;width:17px;height:12px;background:linear-gradient(#000 0,#000 11px,#a0a0a0 11px)"></div>
<div class="hm" style="left:675.65px;top:272.59px;color:#d2d2d2">D7</div>
<div style="left:692px;top:272px;width:17px;height:12px;background:linear-gradient(#000 0,#000 11px,#a0a0a0 11px)"></div>
<div class="hm" style="left:692.7px;top:272.59px;color:#d2d2d2">3F</div>
<div style="left:709px;top:272px;width:22px;height:12px;background:linear-gradient(#000 0,#000 11px,#a0a0a0 11px)"></div>
<div class="hm" style="left:709.75px;top:272.59px;color:#d2d2d2">3C</div>
<div style="left:731px;top:272px;width:18px;height:12px;background:linear-gradient(#000 0,#000 11px,#a0a0a0 11px)"></div>
<div class="hm" style="left:732.4799999999999px;top:272.59px;color:#d2d2d2">4D</div>
<div style="left:749px;top:272px;width:17px;height:12px;background:linear-gradient(#000 0,#000 11px,#a0a0a0 11px)"></div>
<div class="hm" style="left:749.53px;top:272.59px;color:#d2d2d2">98</div>
<div style="left:766px;top:272px;width:17px;height:12px;background:linear-gradient(#000 0,#000 11px,#a0a0a0 11px)"></div>
<div class="hm" style="left:766.5799999999999px;top:272.59px;color:#d2d2d2">99</div>
<div style="left:783px;top:272px;width:17px;height:12px;background:linear-gradient(#000 0,#000 11px,#a0a0a0 11px)"></div>
<div class="hm" style="left:783.63px;top:272.59px;color:#d2d2d2">9A</div>
<div style="left:800px;top:272px;width:17px;height:12px;background:linear-gradient(#000 0,#000 11px,#a0a0a0 11px)"></div>
<div class="hm" style="left:800.68px;top:272.59px;color:#d2d2d2">E1</div>
<div style="left:817px;top:272px;width:17px;height:12px;background:linear-gradient(#000 0,#000 11px,#a0a0a0 11px)"></div>
<div class="hm" style="left:817.7299999999999px;top:272.59px;color:#d2d2d2">1F</div>
<div style="left:834px;top:272px;width:17px;height:12px;background:linear-gradient(#000 0,#000 11px,#a0a0a0 11px)"></div>
<div class="hm" style="left:834.78px;top:272.59px;color:#d2d2d2">2E</div>
<div style="left:851px;top:272px;width:13px;height:12px;background:linear-gradient(#000 0,#000 11px,#a0a0a0 11px)"></div>
<div class="hm" style="left:851.8299999999999px;top:272.59px;color:#d2d2d2">E4</div>
<div class="t" style="left:530.8px;top:284.96px;color:#4f4fe0;font-size:9.5px;transform:scaleX(1.08);transform-origin:0 0;-webkit-text-stroke:0">00000120</div>
<div style="left:589px;top:284px;width:17px;height:11px;background:linear-gradient(#000 0,#000 11px,#a0a0a0 11px)"></div>
<div class="hm" style="left:590.4px;top:284.76px;color:#d2d2d2">65</div>
<div style="left:606px;top:284px;width:18px;height:11px;background:linear-gradient(#000 0,#000 11px,#a0a0a0 11px)"></div>
<div class="hm" style="left:607.4499999999999px;top:284.76px;color:#d2d2d2">A6</div>
<div style="left:624px;top:284px;width:17px;height:11px;background:linear-gradient(#000 0,#000 11px,#a0a0a0 11px)"></div>
<div class="hm" style="left:624.5px;top:284.76px;color:#d2d2d2">1A</div>
<div style="left:641px;top:284px;width:17px;height:11px;background:linear-gradient(#000 0,#000 11px,#a0a0a0 11px)"></div>
<div class="hm" style="left:641.55px;top:284.76px;color:#d2d2d2">6E</div>
<div style="left:658px;top:284px;width:17px;height:11px;background:linear-gradient(#000 0,#000 11px,#a0a0a0 11px)"></div>
<div class="hm" style="left:658.6px;top:284.76px;color:#d2d2d2">F1</div>
<div style="left:675px;top:284px;width:17px;height:11px;background:linear-gradient(#000 0,#000 11px,#a0a0a0 11px)"></div>
<div class="hm" style="left:675.65px;top:284.76px;color:#d2d2d2">8F</div>
<div style="left:692px;top:284px;width:17px;height:11px;background:linear-gradient(#000 0,#000 11px,#a0a0a0 11px)"></div>
<div class="hm" style="left:692.7px;top:284.76px;color:#d2d2d2">9C</div>
<div style="left:709px;top:284px;width:22px;height:11px;background:linear-gradient(#000 0,#000 11px,#a0a0a0 11px)"></div>
<div class="hm" style="left:709.75px;top:284.76px;color:#d2d2d2">CD</div>
<div style="left:731px;top:284px;width:18px;height:11px;background:linear-gradient(#000 0,#000 11px,#a0a0a0 11px)"></div>
<div class="hm" style="left:732.4799999999999px;top:284.76px;color:#d2d2d2">99</div>
<div style="left:749px;top:284px;width:17px;height:11px;background:linear-gradient(#000 0,#000 11px,#a0a0a0 11px)"></div>
<div class="hm" style="left:749.53px;top:284.76px;color:#d2d2d2">C9</div>
<div style="left:766px;top:284px;width:17px;height:11px;background:linear-gradient(#000 0,#000 11px,#a0a0a0 11px)"></div>
<div class="hm" style="left:766.5799999999999px;top:284.76px;color:#d2d2d2">8O</div>
<div style="left:783px;top:284px;width:17px;height:11px;background:linear-gradient(#000 0,#000 11px,#a0a0a0 11px)"></div>
<div class="hm" style="left:783.63px;top:284.76px;color:#d2d2d2">4F</div>
<div style="left:800px;top:284px;width:17px;height:11px;background:linear-gradient(#000 0,#000 11px,#a0a0a0 11px)"></div>
<div class="hm" style="left:800.68px;top:284.76px;color:#d2d2d2">1O</div>
<div style="left:817px;top:284px;width:17px;height:11px;background:linear-gradient(#000 0,#000 11px,#a0a0a0 11px)"></div>
<div class="hm" style="left:817.7299999999999px;top:284.76px;color:#d2d2d2">23</div>
<div style="left:834px;top:284px;width:17px;height:11px;background:linear-gradient(#000 0,#000 11px,#a0a0a0 11px)"></div>
<div class="hm" style="left:834.78px;top:284.76px;color:#d2d2d2">38</div>
<div style="left:851px;top:284px;width:13px;height:11px;background:linear-gradient(#000 0,#000 11px,#a0a0a0 11px)"></div>
<div class="hm" style="left:851.8299999999999px;top:284.76px;color:#d2d2d2">34</div>
<div style="left:657px;top:77.17px;width:34.5px;height:11.3px;background:linear-gradient(90deg,#ffffff 0%,#ffffff 70%,#d8d8d8 100%)"></div>
<div style="left:657px;top:77.17px;width:34.5px;height:4px;background:linear-gradient(#cfcfcf,rgba(255,255,255,0))"></div>
<div class="hm" style="left:658.6px;top:77.87px;color:#3c3c3c">O5</div>
<div class="hm" style="left:675.65px;top:77.87px;color:#3c3c3c">OO</div>
<div style="left:618.0px;top:75.1px;width:75px;height:16px;border:2px solid #e8403b;box-sizing:border-box"></div>
<div style="left:869.5px;top:52.5px;width:0.7999999999999545px;height:348px;background:#fff"></div>
<svg style="position:absolute;left:872.3px;top:57.5px" width="6" height="4" viewBox="0 0 6 4"><path d="M0.5 3.4 L3 0.9 L5.5 3.4" fill="none" stroke="#505050" stroke-width="1.5"/></svg>
<div style="left:870px;top:65px;width:10.5px;height:12px;background:#cdcdcd"></div>
<svg style="position:absolute;left:872.3px;top:392.5px" width="6" height="4" viewBox="0 0 6 4"><path d="M0.5 0.6 L3 3.1 L5.5 0.6" fill="none" stroke="#505050" stroke-width="1.5"/></svg>
<div style="left:521px;top:400.5px;width:347.5px;height:4.2px;background:#f0f0f0"></div>
<div style="left:533px;top:400.8px;width:252px;height:3.6px;background:#cbcbcb"></div>
<div class="t" style="left:888px;top:58.6429px;color:#0c0c0c;font-size:9.4px;transform:scaleX(0.904);transform-origin:0 0">GOAT.zip</div>
<div class="t" style="left:888px;top:70.44290000000001px;color:#0c0c0c;font-size:9.4px;transform:scaleX(0.904);transform-origin:0 0">C:\Users\derek\Downloads</div>
<div style="left:882.5px;top:85px;width:136px;height:1px;background:#dcdcdc"></div>
<div class="t" style="left:888px;top:90.5429px;color:#0c0c0c;font-size:9.4px;transform:scaleX(0.904);transform-origin:0 0">File size:</div>
<div class="t" style="right:10.5px;top:90.5429px;color:#2626a0;font-size:9.4px;transform:scaleX(0.904);transform-origin:100% 0">361 KB</div>
<div class="t" style="right:10.5px;top:103.0429px;color:#2626a0;font-size:9.4px;transform:scaleX(0.904);transform-origin:100% 0">369,547 bytes</div>
<div class="t" style="left:888px;top:115.0429px;color:#0c0c0c;font-size:9.4px;transform:scaleX(0.904);transform-origin:0 0">Without slack:</div>
<div class="t" style="right:10.5px;top:115.0429px;color:#2626a0;font-size:9.4px;transform:scaleX(0.904);transform-origin:100% 0">369,547 bytes</div>
<div style="left:882.5px;top:130px;width:136px;height:1px;background:#dcdcdc"></div>
<div class="t" style="left:888px;top:135.5429px;color:#339433;font-size:9.4px;transform:scaleX(0.904);transform-origin:0 0">Read-only mode</div>
<div style="left:882.5px;top:150.5px;width:136px;height:1px;background:#dcdcdc"></div>
<div class="t" style="left:888px;top:156.6429px;color:#0c0c0c;font-size:9.4px;transform:scaleX(0.904);transform-origin:0 0">Creation time:</div>
<div class="t" style="right:10.5px;top:156.6429px;color:#2626a0;font-size:9.4px;transform:scaleX(0.904);transform-origin:100% 0">02/17/2022</div>
<div class="t" style="right:10.5px;top:168.6429px;color:#2626a0;font-size:9.4px;transform:scaleX(0.904);transform-origin:100% 0">00:59:00</div>
<div class="t" style="left:888px;top:185.0429px;color:#0c0c0c;font-size:9.4px;transform:scaleX(0.904);transform-origin:0 0">Last write time:</div>
<div class="t" style="right:10.5px;top:185.0429px;color:#2626a0;font-size:9.4px;transform:scaleX(0.904);transform-origin:100% 0">02/17/2022</div>
<div class="t" style="right:10.5px;top:197.0429px;color:#2626a0;font-size:9.4px;transform:scaleX(0.904);transform-origin:100% 0">00:59:00</div>
<div class="t" style="left:888px;top:213.7429px;color:#0c0c0c;font-size:9.4px;transform:scaleX(0.904);transform-origin:0 0">Last access time:</div>
<div class="t" style="right:10.5px;top:213.7429px;color:#2626a0;font-size:9.4px;transform:scaleX(0.904);transform-origin:100% 0">02/17/2022</div>
<div class="t" style="right:10.5px;top:225.6429px;color:#2626a0;font-size:9.4px;transform:scaleX(0.904);transform-origin:100% 0">01:00:28</div>
<div class="t" style="left:888px;top:242.34290000000001px;color:#0c0c0c;font-size:9.4px;transform:scaleX(0.904);transform-origin:0 0">Attributes:</div>
<div class="t" style="right:10.5px;top:242.34290000000001px;color:#2626a0;font-size:9.4px;transform:scaleX(0.904);transform-origin:100% 0">A</div>
<div style="left:882.5px;top:257.5px;width:136px;height:1px;background:#dcdcdc"></div>
<div class="t" style="left:888px;top:262.74289999999996px;color:#0c0c0c;font-size:9.4px;transform:scaleX(0.904);transform-origin:0 0">Display time zone:</div>
<div class="t" style="right:10.5px;top:262.74289999999996px;color:#2626a0;font-size:9.4px;transform:scaleX(0.904);transform-origin:100% 0">UTC</div>
<div class="t" style="left:888px;top:274.6429px;color:#0c0c0c;font-size:9.4px;transform:scaleX(0.904);transform-origin:0 0">Mode:</div>
<div class="t" style="right:10.5px;top:274.6429px;color:#2626a0;font-size:9.4px;transform:scaleX(0.904);transform-origin:100% 0">hexadecimal</div>
<div class="t" style="left:888px;top:286.6429px;color:#0c0c0c;font-size:9.4px;transform:scaleX(0.904);transform-origin:0 0">Offsets:</div>
<div class="t" style="right:10.5px;top:286.6429px;color:#2626a0;font-size:9.4px;transform:scaleX(0.904);transform-origin:100% 0">hexadecimal</div>
<div class="t" style="left:888px;top:298.6429px;color:#0c0c0c;font-size:9.4px;transform:scaleX(0.904);transform-origin:0 0">Bytes per page:</div>
<div class="t" style="right:10.5px;top:298.6429px;color:#2626a0;font-size:9.4px;transform:scaleX(0.904);transform-origin:100% 0">28x16=448</div>
<div class="t" style="left:888px;top:315.6429px;color:#0c0c0c;font-size:9.4px;transform:scaleX(0.904);transform-origin:0 0">Window #:</div>
<div class="t" style="right:10.5px;top:315.6429px;color:#2626a0;font-size:9.4px;transform:scaleX(0.904);transform-origin:100% 0">1</div>
<div class="t" style="left:888px;top:327.6429px;color:#0c0c0c;font-size:9.4px;transform:scaleX(0.904);transform-origin:0 0">Window count:</div>
<div class="t" style="right:10.5px;top:327.6429px;color:#2626a0;font-size:9.4px;transform:scaleX(0.904);transform-origin:100% 0">2</div>
<div class="t" style="left:888px;top:339.6429px;color:#0c0c0c;font-size:9.4px;transform:scaleX(0.904);transform-origin:0 0">Case association:</div>
<div class="t" style="right:10.5px;top:339.6429px;color:#2626a0;font-size:9.4px;transform:scaleX(0.904);transform-origin:100% 0">Yes</div>
<div style="left:882.5px;top:355.5px;width:136px;height:1px;background:#dcdcdc"></div>
<div class="t" style="left:888px;top:360.6429px;color:#0c0c0c;font-size:9.4px;transform:scaleX(0.904);transform-origin:0 0">Clipboard:</div>
<div class="t" style="right:10.5px;top:360.6429px;color:#2626a0;font-size:9.4px;transform:scaleX(0.904);transform-origin:100% 0">available</div>
<div class="t" style="left:888px;top:376.3429px;color:#0c0c0c;font-size:9.4px;transform:scaleX(0.904);transform-origin:0 0">TEMP folder:</div>
<div class="t" style="right:10.5px;top:376.3429px;color:#2626a0;font-size:9.4px;transform:scaleX(0.904);transform-origin:100% 0">931 GB free</div>
<div class="t" style="right:10.5px;top:388.0429px;color:#2626a0;font-size:9.4px;transform:scaleX(0.904);transform-origin:100% 0">E:\XWF TEMP</div>
<div style="left:1019.3px;top:52.5px;width:1px;height:352px;background:#cfcfcf"></div>
</div>
<div style="left:0px;top:404.5px;width:1023px;height:1.5px;background:linear-gradient(#9a9a9a,#7c7c7c)"></div>
<svg style="position:absolute;left:796.3px;top:208.6px" width="9" height="14" viewBox="0 0 9 14"><path d="M0.6 0.6 V11.2 L3.1 8.9 L5 12.9 L6.7 12.1 L4.9 8.3 L8.2 8.3 Z" fill="#fff" stroke="#000" stroke-width="0.7"/></svg></body></html>
